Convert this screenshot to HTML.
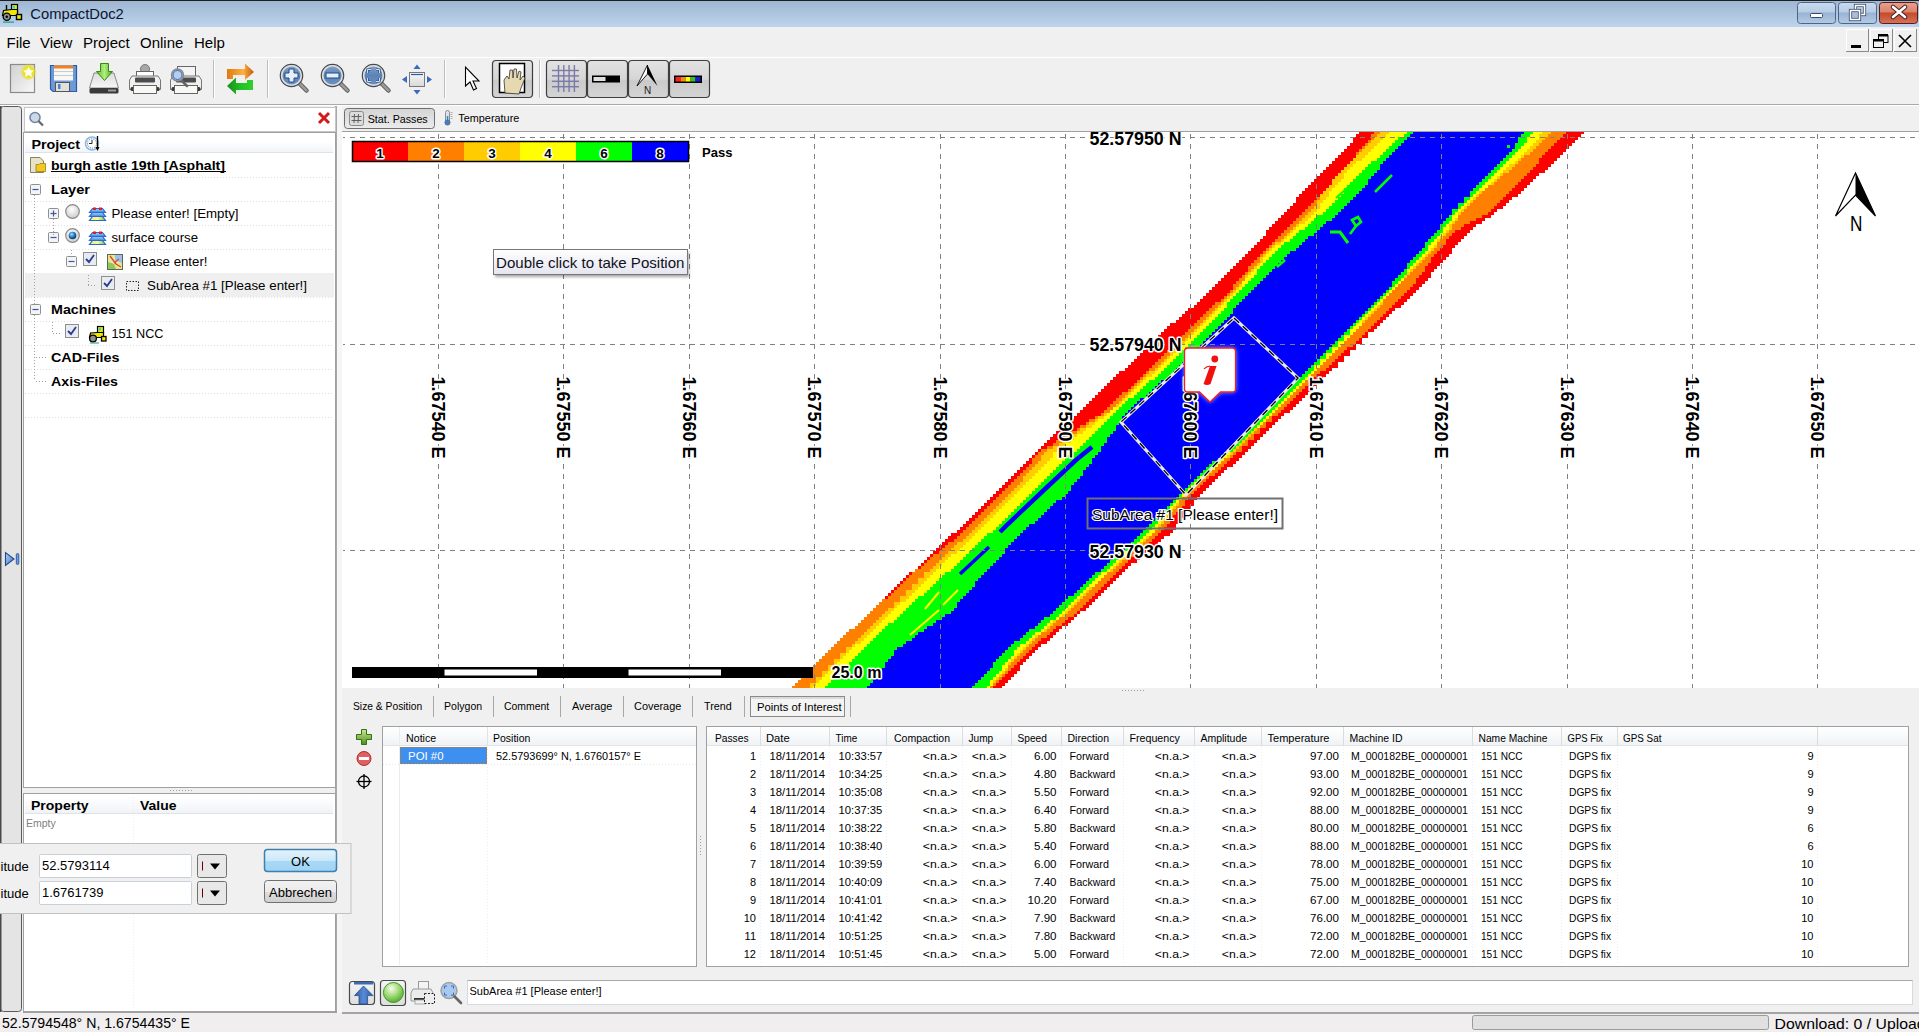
<!DOCTYPE html><html><head><meta charset="utf-8"><style>html,body{margin:0;padding:0;overflow:hidden;background:#f0f0f0}svg{display:block}</style></head><body><svg width="1919" height="1032" viewBox="0 0 1919 1032" shape-rendering="auto"><defs><linearGradient id="gTitle" x1="0" y1="0" x2="0" y2="1"><stop offset="0" stop-color="#9db5d2"/><stop offset="1" stop-color="#bed4ec"/></linearGradient><linearGradient id="gWB" x1="0" y1="0" x2="0" y2="1"><stop offset="0" stop-color="#c9daee"/><stop offset="0.45" stop-color="#b7cde6"/><stop offset="0.5" stop-color="#98b3d3"/><stop offset="1" stop-color="#b3cbe6"/></linearGradient><linearGradient id="gWC" x1="0" y1="0" x2="0" y2="1"><stop offset="0" stop-color="#e8a290"/><stop offset="0.45" stop-color="#d9826b"/><stop offset="0.5" stop-color="#c44a2d"/><stop offset="1" stop-color="#d6735a"/></linearGradient><linearGradient id="gExp" x1="0" y1="0" x2="1" y2="1"><stop offset="0" stop-color="#b8d4f4"/><stop offset="1" stop-color="#3a70c0"/></linearGradient><linearGradient id="gHdr" x1="0" y1="0" x2="0" y2="1"><stop offset="0" stop-color="#ffffff"/><stop offset="1" stop-color="#f0f3f6"/></linearGradient><radialGradient id="gRad" cx="0.45" cy="0.35" r="0.7"><stop offset="0" stop-color="#ffffff"/><stop offset="1" stop-color="#c8c8c8"/></radialGradient><radialGradient id="gRadSel" cx="0.4" cy="0.35" r="0.7"><stop offset="0" stop-color="#a8e0ff"/><stop offset="0.5" stop-color="#2080c8"/><stop offset="1" stop-color="#0a2a50"/></radialGradient><linearGradient id="gLyB" x1="0" y1="0" x2="1" y2="0"><stop offset="0" stop-color="#e8f070"/><stop offset="0.5" stop-color="#f8f8a0"/><stop offset="1" stop-color="#70c850"/></linearGradient><linearGradient id="gLyT" x1="0" y1="0" x2="0" y2="1"><stop offset="0" stop-color="#a8d0f8"/><stop offset="1" stop-color="#3a88e0"/></linearGradient><linearGradient id="gOK" x1="0" y1="0" x2="0" y2="1"><stop offset="0" stop-color="#e6f4fc"/><stop offset="0.5" stop-color="#cbe8f9"/><stop offset="0.51" stop-color="#a9d9f6"/><stop offset="1" stop-color="#a0d3f3"/></linearGradient><linearGradient id="gBtn" x1="0" y1="0" x2="0" y2="1"><stop offset="0" stop-color="#f2f2f2"/><stop offset="0.5" stop-color="#ebebeb"/><stop offset="0.51" stop-color="#dddddd"/><stop offset="1" stop-color="#cfcfcf"/></linearGradient><linearGradient id="gPress" x1="0" y1="0" x2="0" y2="1"><stop offset="0" stop-color="#d4d4d4"/><stop offset="1" stop-color="#ececec"/></linearGradient><filter id="fGlow" x="-30%" y="-30%" width="160%" height="160%"><feGaussianBlur stdDeviation="2.5"/></filter><linearGradient id="gTip" x1="0" y1="0" x2="0" y2="1"><stop offset="0" stop-color="#ffffff"/><stop offset="1" stop-color="#e4e5f0"/></linearGradient><filter id="fShadow" x="-10%" y="-30%" width="130%" height="180%"><feGaussianBlur stdDeviation="1.5"/></filter><linearGradient id="gPlus" x1="0" y1="0" x2="0" y2="1"><stop offset="0" stop-color="#c8e890"/><stop offset="1" stop-color="#4a9020"/></linearGradient><linearGradient id="gB1" x1="0" y1="0" x2="0" y2="1"><stop offset="0" stop-color="#f4f4f4"/><stop offset="1" stop-color="#dedede"/></linearGradient><radialGradient id="gBall" cx="0.4" cy="0.3" r="0.7"><stop offset="0" stop-color="#f4fcec"/><stop offset="0.5" stop-color="#a8dc80"/><stop offset="1" stop-color="#58b030"/></radialGradient><linearGradient id="gArrB" x1="0" y1="0" x2="1" y2="0"><stop offset="0" stop-color="#2a5aa8"/><stop offset="0.5" stop-color="#5a8ad0"/><stop offset="1" stop-color="#2a5aa8"/></linearGradient><linearGradient id="gMag" x1="0" y1="0" x2="0" y2="1"><stop offset="0" stop-color="#8aa6cc"/><stop offset="0.5" stop-color="#5d82b6"/><stop offset="1" stop-color="#6d92c4"/></linearGradient><linearGradient id="gPage" x1="0" y1="0" x2="1" y2="1"><stop offset="0" stop-color="#d0d0d0"/><stop offset="1" stop-color="#f8f8f8"/></linearGradient><radialGradient id="gGlow"><stop offset="0" stop-color="#ffff60"/><stop offset="0.6" stop-color="#e8e020"/><stop offset="1" stop-color="#e8e020" stop-opacity="0"/></radialGradient><linearGradient id="gTB" x1="0" y1="0" x2="0" y2="1"><stop offset="0" stop-color="#e2e2e2"/><stop offset="0.5" stop-color="#d6d6d6"/><stop offset="0.55" stop-color="#cacaca"/><stop offset="1" stop-color="#d4d4d4"/></linearGradient><linearGradient id="gHdd" x1="0" y1="0" x2="0" y2="1"><stop offset="0" stop-color="#dcdcdc"/><stop offset="1" stop-color="#f6f6f6"/></linearGradient><linearGradient id="gArrG" x1="0" y1="0" x2="1" y2="0"><stop offset="0" stop-color="#5cb82a"/><stop offset="0.5" stop-color="#b0f080"/><stop offset="1" stop-color="#4aa020"/></linearGradient><linearGradient id="gOr" x1="0" y1="0" x2="1" y2="0"><stop offset="0" stop-color="#e07a10"/><stop offset="0.6" stop-color="#ffb040"/><stop offset="1" stop-color="#c05a10"/></linearGradient><linearGradient id="gGr" x1="0" y1="0" x2="1" y2="0"><stop offset="0" stop-color="#208a20"/><stop offset="0.5" stop-color="#20c020"/><stop offset="1" stop-color="#30d030"/></linearGradient><linearGradient id="gPan" x1="0" y1="0" x2="0" y2="1"><stop offset="0" stop-color="#f8f8f8"/><stop offset="1" stop-color="#d8d8d8"/></linearGradient></defs><rect x="0" y="0" width="1919" height="1032" fill="#f0f0f0" />
<rect x="0" y="0" width="1919" height="27" fill="url(#gTitle)" />
<rect x="0" y="0" width="1919" height="1" fill="#1e1e1e" />
<text x="30.3" y="19" font-size="15" font-family='"Liberation Sans", sans-serif' fill="#0a1530" font-weight="normal" text-anchor="start" textLength="93.5" lengthAdjust="spacingAndGlyphs" >CompactDoc2</text>
<rect x="11.5" y="4.5" width="6" height="8" fill="#f0e800" stroke="#000" stroke-width="1.2" />
<rect x="12.5" y="6" width="2.5" height="2.5" fill="#30d0f0" />
<line x1="6.5" y1="5" x2="6.5" y2="10" stroke="#000" stroke-width="1.4" />
<path d="M2.5,15.5 L3.5,10.5 L11.5,9.5 L17.5,9.5 L17.5,15.5 Z" fill="#f0e800" stroke="#000" stroke-width="1.2" />
<circle cx="6.8" cy="16.8" r="3.6" fill="#909090" stroke="#000" stroke-width="1.3"/>
<circle cx="6.8" cy="16.8" r="1.2" fill="#000"/>
<rect x="16.5" y="14.5" width="5" height="5" fill="#f0e800" stroke="#000" stroke-width="1.4" />
<rect x="3" y="21.5" width="11" height="1.2" fill="#1a9a8a" />
<rect x="1797.5" y="2.5" width="38" height="21" fill="url(#gWB)" stroke="#4f6585" stroke-width="1" rx="3" />
<rect x="1838.5" y="2.5" width="38" height="21" fill="url(#gWB)" stroke="#4f6585" stroke-width="1" rx="3" />
<rect x="1879.5" y="2.5" width="38" height="21" fill="url(#gWC)" stroke="#5a1c1c" stroke-width="1" rx="3" />
<rect x="1810.5" y="13.5" width="12" height="4" fill="#fff" stroke="#3a4a66" stroke-width="1" rx="1" />
<rect x="1855.5" y="5.5" width="9" height="9" fill="none" stroke="#3a4a66" stroke-width="3.2" />
<rect x="1855.5" y="5.5" width="9" height="9" fill="none" stroke="#fff" stroke-width="1.6" />
<rect x="1850.5" y="10.5" width="9" height="9" fill="#a8c0dc" stroke="#3a4a66" stroke-width="3.2" />
<rect x="1850.5" y="10.5" width="9" height="9" fill="none" stroke="#fff" stroke-width="1.6" />
<path d="M1893,7 L1905,17 M1905,7 L1893,17" fill="none" stroke="#4a2020" stroke-width="4.6" stroke-linecap="round"/>
<path d="M1893,7 L1905,17 M1905,7 L1893,17" fill="none" stroke="#fff" stroke-width="2.6" stroke-linecap="round"/>
<rect x="0" y="27" width="1919" height="30" fill="#f0f0f0" />
<text x="6.5" y="48" font-size="15" font-family='"Liberation Sans", sans-serif' fill="#000" font-weight="normal" text-anchor="start" >File</text>
<text x="40" y="48" font-size="15" font-family='"Liberation Sans", sans-serif' fill="#000" font-weight="normal" text-anchor="start" >View</text>
<text x="83" y="48" font-size="15" font-family='"Liberation Sans", sans-serif' fill="#000" font-weight="normal" text-anchor="start" >Project</text>
<text x="140" y="48" font-size="15" font-family='"Liberation Sans", sans-serif' fill="#000" font-weight="normal" text-anchor="start" >Online</text>
<text x="194" y="48" font-size="15" font-family='"Liberation Sans", sans-serif' fill="#000" font-weight="normal" text-anchor="start" >Help</text>
<rect x="1846" y="29" width="23" height="23" fill="#f0f0f0" />
<line x1="1846.5" y1="29" x2="1846.5" y2="52" stroke="#fff" stroke-width="1" />
<line x1="1846" y1="29.5" x2="1869" y2="29.5" stroke="#fff" stroke-width="1" />
<line x1="1868.5" y1="29" x2="1868.5" y2="52" stroke="#8a8a8a" stroke-width="1" />
<line x1="1846" y1="51.5" x2="1869" y2="51.5" stroke="#8a8a8a" stroke-width="1" />
<rect x="1870" y="29" width="23" height="23" fill="#f0f0f0" />
<line x1="1870.5" y1="29" x2="1870.5" y2="52" stroke="#fff" stroke-width="1" />
<line x1="1870" y1="29.5" x2="1893" y2="29.5" stroke="#fff" stroke-width="1" />
<line x1="1892.5" y1="29" x2="1892.5" y2="52" stroke="#8a8a8a" stroke-width="1" />
<line x1="1870" y1="51.5" x2="1893" y2="51.5" stroke="#8a8a8a" stroke-width="1" />
<rect x="1894" y="29" width="23" height="23" fill="#f0f0f0" />
<line x1="1894.5" y1="29" x2="1894.5" y2="52" stroke="#fff" stroke-width="1" />
<line x1="1894" y1="29.5" x2="1917" y2="29.5" stroke="#fff" stroke-width="1" />
<line x1="1916.5" y1="29" x2="1916.5" y2="52" stroke="#8a8a8a" stroke-width="1" />
<line x1="1894" y1="51.5" x2="1917" y2="51.5" stroke="#8a8a8a" stroke-width="1" />
<rect x="1851" y="45" width="10" height="3" fill="#000" />
<rect x="1878" y="34" width="10" height="2.5" fill="#000" />
<rect x="1878.5" y="35.5" width="9.5" height="7" fill="none" stroke="#000" stroke-width="1" />
<rect x="1873.5" y="40.5" width="10" height="7" fill="#f0f0f0" stroke="#000" stroke-width="1" />
<rect x="1873" y="39" width="11" height="2.5" fill="#000" />
<path d="M1899,35 L1911,47 M1911,35 L1899,47" fill="none" stroke="#000" stroke-width="1.6" />
<rect x="0" y="57" width="1919" height="1" fill="#ffffff" />
<rect x="0" y="58" width="1919" height="46" fill="#f0f0f0" />
<rect x="0" y="104" width="1919" height="1" fill="#a9a9a9" />
<rect x="0" y="105" width="1919" height="1" fill="#ffffff" />
<line x1="213.5" y1="60" x2="213.5" y2="98" stroke="#bdbdbd" stroke-width="1" />
<line x1="214.5" y1="60" x2="214.5" y2="98" stroke="#ffffff" stroke-width="1" />
<line x1="267.5" y1="60" x2="267.5" y2="98" stroke="#bdbdbd" stroke-width="1" />
<line x1="268.5" y1="60" x2="268.5" y2="98" stroke="#ffffff" stroke-width="1" />
<line x1="444.5" y1="60" x2="444.5" y2="98" stroke="#bdbdbd" stroke-width="1" />
<line x1="445.5" y1="60" x2="445.5" y2="98" stroke="#ffffff" stroke-width="1" />
<line x1="539.5" y1="60" x2="539.5" y2="98" stroke="#bdbdbd" stroke-width="1" />
<line x1="540.5" y1="60" x2="540.5" y2="98" stroke="#ffffff" stroke-width="1" />
<rect x="0" y="1012" width="1919" height="20" fill="#f0eeee" />
<text x="2" y="1028" font-size="14.5" font-family='"Liberation Sans", sans-serif' fill="#000" font-weight="normal" text-anchor="start" textLength="188" lengthAdjust="spacingAndGlyphs" >52.5794548° N, 1.6754435° E</text>
<rect x="1472.5" y="1015.5" width="296" height="14" fill="#e0e0e0" stroke="#9a9a9a" stroke-width="1" rx="2" />
<text x="1774.6" y="1028.5" font-size="15" font-family='"Liberation Sans", sans-serif' fill="#000" font-weight="normal" text-anchor="start" textLength="151" lengthAdjust="spacingAndGlyphs" >Download: 0 / Upload</text>
<rect x="0.5" y="106.5" width="21" height="905" fill="#e4e4e4" stroke="#5a5a5a" stroke-width="1" rx="3" />
<rect x="0" y="106" width="1.5" height="906" fill="#4a4a4a" />
<path d="M5.5,552.5 L5.5,565.5 L14,559 Z" fill="url(#gExp)" stroke="#1e4a90" stroke-width="1.1" />
<rect x="16.3" y="553.5" width="2.5" height="11" fill="#6a9ae0" stroke="#1e4a90" stroke-width="0.8" rx="1.2" />
<rect x="335" y="106" width="2" height="907" fill="#a8a8a8" />
<rect x="337" y="106" width="5" height="907" fill="#f6f6f6" />
<rect x="24.5" y="107.5" width="311" height="24" fill="#ffffff" stroke="#c6c6c6" stroke-width="1" />
<circle cx="35" cy="117.5" r="5" fill="#cfd9e6" stroke="#6f86a6" stroke-width="1.6"/>
<line x1="38.5" y1="121" x2="43" y2="125.5" stroke="#666" stroke-width="2.2" />
<path d="M319,113 L329,123 M329,113 L319,123" fill="none" stroke="#d41a1a" stroke-width="3" />
<rect x="23" y="132" width="313" height="656" fill="#ffffff" />
<rect x="23" y="132" width="313" height="1" fill="#a0a0a0" />
<rect x="23" y="132" width="1" height="656" fill="#a0a0a0" />
<rect x="335" y="132" width="1" height="656" fill="#a0a0a0" />
<rect x="23" y="787" width="313" height="1" fill="#a0a0a0" />
<rect x="25" y="141" width="308" height="12" fill="url(#gHdr)" />
<rect x="25" y="152" width="308" height="1" fill="#dfe3e8" />
<text x="31.5" y="149" font-size="12.5" font-family='"Liberation Sans", sans-serif' fill="#000" font-weight="bold" text-anchor="start" textLength="48.5" lengthAdjust="spacingAndGlyphs" >Project</text>
<circle cx="92" cy="143.5" r="6.5" fill="#fff" stroke="#8ab8ea" stroke-width="1.6"/>
<circle cx="92" cy="143.5" r="4.6" fill="none" stroke="#333" stroke-width="0.9" stroke-dasharray="0.8,1.2"/>
<path d="M92,140 L92,143.5 L89,143.5" fill="none" stroke="#222" stroke-width="1" />
<line x1="97.5" y1="136" x2="97.5" y2="149" stroke="#000" stroke-width="1.3" />
<path d="M95.5,147 L99.5,147 L97.5,151 Z" fill="#000" />
<path d="M30.5,157.5 L40,157.5 L43.5,161 L43.5,172.5 L30.5,172.5 Z" fill="#e8e2c8" stroke="#8a8060" stroke-width="1" />
<path d="M36,164.5 L39,164.5 L40,163.5 L45.5,163.5 L45.5,171.5 L36,171.5 Z" fill="#f0c820" stroke="#a08010" stroke-width="0.8" />
<line x1="25" y1="177.5" x2="333" y2="177.5" stroke="#e0e0e0" stroke-width="1" stroke-dasharray="1,2"/>
<line x1="25" y1="201.5" x2="333" y2="201.5" stroke="#e0e0e0" stroke-width="1" stroke-dasharray="1,2"/>
<line x1="25" y1="225.5" x2="333" y2="225.5" stroke="#e0e0e0" stroke-width="1" stroke-dasharray="1,2"/>
<line x1="25" y1="249.5" x2="333" y2="249.5" stroke="#e0e0e0" stroke-width="1" stroke-dasharray="1,2"/>
<line x1="25" y1="273.5" x2="333" y2="273.5" stroke="#e0e0e0" stroke-width="1" stroke-dasharray="1,2"/>
<line x1="25" y1="297.5" x2="333" y2="297.5" stroke="#e0e0e0" stroke-width="1" stroke-dasharray="1,2"/>
<line x1="25" y1="321.5" x2="333" y2="321.5" stroke="#e0e0e0" stroke-width="1" stroke-dasharray="1,2"/>
<line x1="25" y1="345.5" x2="333" y2="345.5" stroke="#e0e0e0" stroke-width="1" stroke-dasharray="1,2"/>
<line x1="25" y1="369.5" x2="333" y2="369.5" stroke="#e0e0e0" stroke-width="1" stroke-dasharray="1,2"/>
<line x1="25" y1="393.5" x2="333" y2="393.5" stroke="#e0e0e0" stroke-width="1" stroke-dasharray="1,2"/>
<line x1="25" y1="417.5" x2="333" y2="417.5" stroke="#e0e0e0" stroke-width="1" stroke-dasharray="1,2"/>
<rect x="25" y="273" width="309" height="24" fill="#efefef" />
<line x1="34.5" y1="195" x2="34.5" y2="381" stroke="#a0a0a0" stroke-width="1" stroke-dasharray="1,2"/>
<text x="51" y="170" font-size="13" font-family='"Liberation Sans", sans-serif' fill="#000" font-weight="bold" text-anchor="start" textLength="174" lengthAdjust="spacingAndGlyphs" >burgh astle 19th [Asphalt]</text>
<rect x="51" y="171" width="175" height="1" fill="#000" />
<text x="51" y="194" font-size="13" font-family='"Liberation Sans", sans-serif' fill="#000" font-weight="bold" text-anchor="start" textLength="39" lengthAdjust="spacingAndGlyphs" >Layer</text>
<text x="111.5" y="218" font-size="13" font-family='"Liberation Sans", sans-serif' fill="#000" font-weight="normal" text-anchor="start" textLength="127" lengthAdjust="spacingAndGlyphs" >Please enter! [Empty]</text>
<text x="111.5" y="242" font-size="13" font-family='"Liberation Sans", sans-serif' fill="#000" font-weight="normal" text-anchor="start" textLength="86.5" lengthAdjust="spacingAndGlyphs" >surface course</text>
<text x="129.5" y="266" font-size="13" font-family='"Liberation Sans", sans-serif' fill="#000" font-weight="normal" text-anchor="start" textLength="78" lengthAdjust="spacingAndGlyphs" >Please enter!</text>
<text x="147" y="290" font-size="13" font-family='"Liberation Sans", sans-serif' fill="#000" font-weight="normal" text-anchor="start" textLength="160" lengthAdjust="spacingAndGlyphs" >SubArea #1 [Please enter!]</text>
<text x="51" y="314" font-size="13" font-family='"Liberation Sans", sans-serif' fill="#000" font-weight="bold" text-anchor="start" textLength="65" lengthAdjust="spacingAndGlyphs" >Machines</text>
<text x="111.5" y="338" font-size="13" font-family='"Liberation Sans", sans-serif' fill="#000" font-weight="normal" text-anchor="start" textLength="52" lengthAdjust="spacingAndGlyphs" >151 NCC</text>
<text x="51" y="362" font-size="13" font-family='"Liberation Sans", sans-serif' fill="#000" font-weight="bold" text-anchor="start" textLength="68.5" lengthAdjust="spacingAndGlyphs" >CAD-Files</text>
<text x="51" y="386" font-size="13" font-family='"Liberation Sans", sans-serif' fill="#000" font-weight="bold" text-anchor="start" textLength="67" lengthAdjust="spacingAndGlyphs" >Axis-Files</text>
<rect x="30.5" y="184.5" width="10" height="10" fill="#f4f4f4" stroke="#8e8f8f" stroke-width="1" rx="1" />
<line x1="32.5" y1="189.5" x2="38.5" y2="189.5" stroke="#3b57a6" stroke-width="1.2" />
<rect x="48.5" y="208.5" width="10" height="10" fill="#f4f4f4" stroke="#8e8f8f" stroke-width="1" rx="1" />
<line x1="50.5" y1="213.5" x2="56.5" y2="213.5" stroke="#3b57a6" stroke-width="1.2" />
<line x1="53.5" y1="210.5" x2="53.5" y2="216.5" stroke="#3b57a6" stroke-width="1.2" />
<rect x="48.5" y="232.5" width="10" height="10" fill="#f4f4f4" stroke="#8e8f8f" stroke-width="1" rx="1" />
<line x1="50.5" y1="237.5" x2="56.5" y2="237.5" stroke="#3b57a6" stroke-width="1.2" />
<rect x="66.5" y="256.5" width="10" height="10" fill="#f4f4f4" stroke="#8e8f8f" stroke-width="1" rx="1" />
<line x1="68.5" y1="261.5" x2="74.5" y2="261.5" stroke="#3b57a6" stroke-width="1.2" />
<rect x="30.5" y="304.5" width="10" height="10" fill="#f4f4f4" stroke="#8e8f8f" stroke-width="1" rx="1" />
<line x1="32.5" y1="309.5" x2="38.5" y2="309.5" stroke="#3b57a6" stroke-width="1.2" />
<circle cx="72.5" cy="211.5" r="6.8" fill="url(#gRad)" stroke="#8a8a8a" stroke-width="1.2"/>
<circle cx="72.5" cy="235.5" r="6.8" fill="url(#gRad)" stroke="#8a8a8a" stroke-width="1.2"/>
<circle cx="72.5" cy="235.5" r="3.8" fill="url(#gRadSel)"/>
<rect x="83.5" y="252.5" width="13" height="13" fill="#e8ecf2" stroke="#8e8f8f" stroke-width="1" />
<path d="M86,259 L89,262 L94,255" fill="none" stroke="#2a3a8c" stroke-width="1.8" />
<rect x="101.5" y="276.5" width="13" height="13" fill="#e8ecf2" stroke="#8e8f8f" stroke-width="1" />
<path d="M104,283 L107,286 L112,279" fill="none" stroke="#2a3a8c" stroke-width="1.8" />
<rect x="65.5" y="324.5" width="13" height="13" fill="#e8ecf2" stroke="#8e8f8f" stroke-width="1" />
<path d="M68,331 L71,334 L76,327" fill="none" stroke="#2a3a8c" stroke-width="1.8" />
<path d="M92.5,216.5 L102.5,216.5 L105.5,220.5 L89.5,220.5 Z" fill="url(#gLyB)" stroke="#2a6ad0" stroke-width="1.2" />
<path d="M92.5,212.5 L102.5,212.5 L105.5,216.5 L89.5,216.5 Z" fill="url(#gLyT)" stroke="#2a6ad0" stroke-width="1.2" />
<path d="M92.5,208.5 L102.5,208.5 L105.5,212.5 L89.5,212.5 Z" fill="url(#gLyT)" stroke="#2a6ad0" stroke-width="1.2" />
<rect x="93" y="207.5" width="3" height="2.5" fill="#e02020" />
<rect x="99" y="207.5" width="3" height="2.5" fill="#e02020" />
<path d="M92.5,240.5 L102.5,240.5 L105.5,244.5 L89.5,244.5 Z" fill="url(#gLyB)" stroke="#2a6ad0" stroke-width="1.2" />
<path d="M92.5,236.5 L102.5,236.5 L105.5,240.5 L89.5,240.5 Z" fill="url(#gLyT)" stroke="#2a6ad0" stroke-width="1.2" />
<path d="M92.5,232.5 L102.5,232.5 L105.5,236.5 L89.5,236.5 Z" fill="url(#gLyT)" stroke="#2a6ad0" stroke-width="1.2" />
<rect x="93" y="231.5" width="3" height="2.5" fill="#e02020" />
<rect x="99" y="231.5" width="3" height="2.5" fill="#e02020" />
<rect x="107.5" y="254.5" width="15" height="15" fill="#e8e890" stroke="#5a6a50" stroke-width="1" />
<path d="M115,255 L122,255 L122,263 L115,260 Z" fill="#9ac0f0" />
<path d="M108,262 L114,264 L116,269 L108,269 Z" fill="#90c860" />
<path d="M110,256 L116,264 L121,267 M114,263 L119,259" fill="none" stroke="#e04040" stroke-width="1.3" />
<rect x="126.5" y="281.5" width="12" height="9" fill="#eee" stroke="#222" stroke-width="1" stroke-dasharray="1.5,1.5"/>
<rect x="97.5" y="326.5" width="6" height="7" fill="#f0e800" stroke="#000" stroke-width="1.2" />
<rect x="98.5" y="328" width="2.5" height="2.5" fill="#30d0f0" />
<path d="M89.5,337.5 L90.5,333 L97.5,332.5 L103.5,332.5 L103.5,337.5 Z" fill="#f0e800" stroke="#000" stroke-width="1.2" />
<circle cx="93" cy="338.5" r="3.4" fill="#909090" stroke="#000" stroke-width="1.3"/>
<rect x="101.5" y="336.5" width="4.5" height="4.5" fill="#f0e800" stroke="#000" stroke-width="1.3" />
<rect x="90" y="342.5" width="9" height="1" fill="#1a9a8a" />
<line x1="53.5" y1="216" x2="53.5" y2="235" stroke="#a0a0a0" stroke-width="1" stroke-dasharray="1,2"/>
<line x1="71.5" y1="250" x2="71.5" y2="256" stroke="#a0a0a0" stroke-width="1" stroke-dasharray="1,2"/>
<line x1="88.5" y1="275" x2="88.5" y2="285" stroke="#a0a0a0" stroke-width="1" stroke-dasharray="1,2"/>
<line x1="88" y1="285.5" x2="97" y2="285.5" stroke="#a0a0a0" stroke-width="1" stroke-dasharray="1,2"/>
<line x1="36" y1="357.5" x2="46" y2="357.5" stroke="#a0a0a0" stroke-width="1" stroke-dasharray="1,2"/>
<line x1="52.5" y1="322" x2="52.5" y2="333" stroke="#a0a0a0" stroke-width="1" stroke-dasharray="1,2"/>
<line x1="53" y1="333.5" x2="62" y2="333.5" stroke="#a0a0a0" stroke-width="1" stroke-dasharray="1,2"/>
<line x1="36" y1="381.5" x2="46" y2="381.5" stroke="#a0a0a0" stroke-width="1" stroke-dasharray="1,2"/>
<rect x="170" y="790" width="1" height="1" fill="#9a9a9a" />
<rect x="173" y="790" width="1" height="1" fill="#9a9a9a" />
<rect x="176" y="790" width="1" height="1" fill="#9a9a9a" />
<rect x="179" y="790" width="1" height="1" fill="#9a9a9a" />
<rect x="182" y="790" width="1" height="1" fill="#9a9a9a" />
<rect x="185" y="790" width="1" height="1" fill="#9a9a9a" />
<rect x="188" y="790" width="1" height="1" fill="#9a9a9a" />
<rect x="191" y="790" width="1" height="1" fill="#9a9a9a" />
<rect x="23" y="793" width="313" height="218" fill="#ffffff" />
<rect x="23" y="1011" width="314" height="2" fill="#a0a0a0" />
<rect x="23" y="793" width="313" height="1" fill="#a0a0a0" />
<rect x="23" y="793" width="1" height="219" fill="#a0a0a0" />
<rect x="335" y="793" width="1" height="219" fill="#a0a0a0" />
<rect x="25" y="797" width="308" height="16" fill="url(#gHdr)" />
<rect x="25" y="813" width="308" height="1" fill="#dfe3e8" />
<line x1="133.5" y1="797" x2="133.5" y2="1010" stroke="#ececec" stroke-width="1" stroke-dasharray="1,2"/>
<text x="31" y="810" font-size="13" font-family='"Liberation Sans", sans-serif' fill="#000" font-weight="bold" text-anchor="start" textLength="57.6" lengthAdjust="spacingAndGlyphs" >Property</text>
<text x="140" y="810" font-size="13" font-family='"Liberation Sans", sans-serif' fill="#000" font-weight="bold" text-anchor="start" textLength="36.4" lengthAdjust="spacingAndGlyphs" >Value</text>
<text x="26" y="827" font-size="10.5" font-family='"Liberation Sans", sans-serif' fill="#808080" font-weight="normal" text-anchor="start" >Empty</text>
<rect x="-1" y="843.5" width="352" height="70" fill="#f0f0f0" stroke="#c2c2c2" stroke-width="1" />
<text x="0.5" y="871" font-size="13" font-family='"Liberation Sans", sans-serif' fill="#000" font-weight="normal" text-anchor="start" textLength="28.3" lengthAdjust="spacingAndGlyphs" >itude</text>
<text x="0.5" y="898" font-size="13" font-family='"Liberation Sans", sans-serif' fill="#000" font-weight="normal" text-anchor="start" textLength="28.3" lengthAdjust="spacingAndGlyphs" >itude</text>
<rect x="39.5" y="854.5" width="152" height="23" fill="#fff" stroke="#c8d0da" stroke-width="1" rx="1" />
<rect x="39.5" y="881.5" width="152" height="23" fill="#fff" stroke="#c8d0da" stroke-width="1" rx="1" />
<text x="42" y="870" font-size="13" font-family='"Liberation Sans", sans-serif' fill="#000" font-weight="normal" text-anchor="start" >52.5793114</text>
<text x="42" y="897" font-size="13" font-family='"Liberation Sans", sans-serif' fill="#000" font-weight="normal" text-anchor="start" >1.6761739</text>
<rect x="197.5" y="854.5" width="29" height="23" fill="#e8e8e8" stroke="#707070" stroke-width="1" rx="2" />
<rect x="202" y="861.5" width="1" height="9" fill="#600" />
<path d="M210,863.5 L220,863.5 L215,869.5 Z" fill="#000" />
<rect x="197.5" y="881.5" width="29" height="23" fill="#e8e8e8" stroke="#707070" stroke-width="1" rx="2" />
<rect x="202" y="888.5" width="1" height="9" fill="#600" />
<path d="M210,890.5 L220,890.5 L215,896.5 Z" fill="#000" />
<rect x="264.5" y="849.5" width="72" height="22" fill="url(#gOK)" stroke="#3c7fb1" stroke-width="1.5" rx="3" />
<text x="300.5" y="866" font-size="13" font-family='"Liberation Sans", sans-serif' fill="#000" font-weight="normal" text-anchor="middle" >OK</text>
<rect x="264.5" y="880.5" width="72" height="22" fill="url(#gBtn)" stroke="#707070" stroke-width="1" rx="3" />
<text x="300.5" y="897" font-size="13" font-family='"Liberation Sans", sans-serif' fill="#000" font-weight="normal" text-anchor="middle" >Abbrechen</text>
<rect x="344.5" y="108.5" width="90" height="20" fill="url(#gPress)" stroke="#6e6e6e" stroke-width="1" rx="3" />
<rect x="349.5" y="111.5" width="14" height="14" fill="#dcdcdc" stroke="#8a8a8a" stroke-width="1" rx="2" />
<path d="M354.5,114 L354,123 M358.5,114 L358,123 M351.5,116.5 L361.5,116.5 M351.5,120.5 L361.5,120.5" fill="none" stroke="#555" stroke-width="0.9" />
<text x="367.7" y="123" font-size="11.5" font-family='"Liberation Sans", sans-serif' fill="#000" font-weight="normal" text-anchor="start" textLength="60" lengthAdjust="spacingAndGlyphs" >Stat. Passes</text>
<rect x="445.5" y="110.5" width="4" height="13" fill="#dde3ea" stroke="#8a8f96" stroke-width="1" rx="2" />
<rect x="446.8" y="116" width="1.5" height="6" fill="#3a80d0" />
<circle cx="447.5" cy="122.5" r="2.6" fill="#3a80d0" stroke="#5a6a7a" stroke-width="0.8"/>
<line x1="450.5" y1="112.5" x2="452.5" y2="112.5" stroke="#9aa0a8" stroke-width="0.8" />
<line x1="450.5" y1="114.5" x2="452.5" y2="114.5" stroke="#9aa0a8" stroke-width="0.8" />
<line x1="450.5" y1="116.5" x2="452.5" y2="116.5" stroke="#9aa0a8" stroke-width="0.8" />
<line x1="450.5" y1="118.5" x2="452.5" y2="118.5" stroke="#9aa0a8" stroke-width="0.8" />
<text x="458.3" y="122" font-size="11.5" font-family='"Liberation Sans", sans-serif' fill="#000" font-weight="normal" text-anchor="start" textLength="61" lengthAdjust="spacingAndGlyphs" >Temperature</text>
<rect x="342" y="131" width="1577" height="1" fill="#a0a0a0" />
<rect x="342" y="132" width="1577" height="556" fill="#ffffff" />
<clipPath id="cpMap"><rect x="342" y="132" width="1576" height="556"/></clipPath>
<g clip-path="url(#cpMap)">
<g shape-rendering="crispEdges">
<rect x="1359" y="131" width="15" height="3" fill="#ff0000"/>
<rect x="1374" y="131" width="6" height="3" fill="#ff8000"/>
<rect x="1380" y="131" width="9" height="3" fill="#ffcc00"/>
<rect x="1389" y="131" width="18" height="3" fill="#ffff00"/>
<rect x="1407" y="131" width="6" height="3" fill="#00ff00"/>
<rect x="1413" y="131" width="111" height="3" fill="#0000ff"/>
<rect x="1524" y="131" width="9" height="3" fill="#00ff00"/>
<rect x="1533" y="131" width="9" height="3" fill="#ffff00"/>
<rect x="1542" y="131" width="9" height="3" fill="#ffcc00"/>
<rect x="1551" y="131" width="15" height="3" fill="#ff8000"/>
<rect x="1566" y="131" width="18" height="3" fill="#ff0000"/>
<rect x="1356" y="134" width="15" height="3" fill="#ff0000"/>
<rect x="1371" y="134" width="6" height="3" fill="#ff8000"/>
<rect x="1377" y="134" width="9" height="3" fill="#ffcc00"/>
<rect x="1386" y="134" width="18" height="3" fill="#ffff00"/>
<rect x="1404" y="134" width="6" height="3" fill="#00ff00"/>
<rect x="1410" y="134" width="111" height="3" fill="#0000ff"/>
<rect x="1521" y="134" width="9" height="3" fill="#00ff00"/>
<rect x="1530" y="134" width="9" height="3" fill="#ffff00"/>
<rect x="1539" y="134" width="9" height="3" fill="#ffcc00"/>
<rect x="1548" y="134" width="15" height="3" fill="#ff8000"/>
<rect x="1563" y="134" width="18" height="3" fill="#ff0000"/>
<rect x="1353" y="137" width="18" height="3" fill="#ff0000"/>
<rect x="1371" y="137" width="3" height="3" fill="#ff8000"/>
<rect x="1374" y="137" width="9" height="3" fill="#ffcc00"/>
<rect x="1383" y="137" width="15" height="3" fill="#ffff00"/>
<rect x="1398" y="137" width="9" height="3" fill="#00ff00"/>
<rect x="1407" y="137" width="111" height="3" fill="#0000ff"/>
<rect x="1518" y="137" width="9" height="3" fill="#00ff00"/>
<rect x="1527" y="137" width="12" height="3" fill="#ffff00"/>
<rect x="1539" y="137" width="6" height="3" fill="#ffcc00"/>
<rect x="1545" y="137" width="15" height="3" fill="#ff8000"/>
<rect x="1560" y="137" width="18" height="3" fill="#ff0000"/>
<rect x="1353" y="140" width="15" height="3" fill="#ff0000"/>
<rect x="1368" y="140" width="3" height="3" fill="#ff8000"/>
<rect x="1371" y="140" width="9" height="3" fill="#ffcc00"/>
<rect x="1380" y="140" width="15" height="3" fill="#ffff00"/>
<rect x="1395" y="140" width="9" height="3" fill="#00ff00"/>
<rect x="1404" y="140" width="114" height="3" fill="#0000ff"/>
<rect x="1518" y="140" width="9" height="3" fill="#00ff00"/>
<rect x="1527" y="140" width="9" height="3" fill="#ffff00"/>
<rect x="1536" y="140" width="6" height="3" fill="#ffcc00"/>
<rect x="1542" y="140" width="15" height="3" fill="#ff8000"/>
<rect x="1557" y="140" width="18" height="3" fill="#ff0000"/>
<rect x="1350" y="143" width="15" height="3" fill="#ff0000"/>
<rect x="1365" y="143" width="3" height="3" fill="#ff8000"/>
<rect x="1368" y="143" width="9" height="3" fill="#ffcc00"/>
<rect x="1377" y="143" width="15" height="3" fill="#ffff00"/>
<rect x="1392" y="143" width="9" height="3" fill="#00ff00"/>
<rect x="1401" y="143" width="114" height="3" fill="#0000ff"/>
<rect x="1515" y="143" width="9" height="3" fill="#00ff00"/>
<rect x="1524" y="143" width="9" height="3" fill="#ffff00"/>
<rect x="1533" y="143" width="6" height="3" fill="#ffcc00"/>
<rect x="1539" y="143" width="15" height="3" fill="#ff8000"/>
<rect x="1554" y="143" width="18" height="3" fill="#ff0000"/>
<rect x="1347" y="146" width="15" height="3" fill="#ff0000"/>
<rect x="1362" y="146" width="3" height="3" fill="#ff8000"/>
<rect x="1365" y="146" width="9" height="3" fill="#ffcc00"/>
<rect x="1374" y="146" width="15" height="3" fill="#ffff00"/>
<rect x="1389" y="146" width="9" height="3" fill="#00ff00"/>
<rect x="1398" y="146" width="117" height="3" fill="#0000ff"/>
<rect x="1515" y="146" width="6" height="3" fill="#00ff00"/>
<rect x="1521" y="146" width="9" height="3" fill="#ffff00"/>
<rect x="1530" y="146" width="6" height="3" fill="#ffcc00"/>
<rect x="1536" y="146" width="15" height="3" fill="#ff8000"/>
<rect x="1551" y="146" width="18" height="3" fill="#ff0000"/>
<rect x="1344" y="149" width="15" height="3" fill="#ff0000"/>
<rect x="1359" y="149" width="3" height="3" fill="#ff8000"/>
<rect x="1362" y="149" width="9" height="3" fill="#ffcc00"/>
<rect x="1371" y="149" width="15" height="3" fill="#ffff00"/>
<rect x="1386" y="149" width="9" height="3" fill="#00ff00"/>
<rect x="1395" y="149" width="117" height="3" fill="#0000ff"/>
<rect x="1512" y="149" width="6" height="3" fill="#00ff00"/>
<rect x="1518" y="149" width="9" height="3" fill="#ffff00"/>
<rect x="1527" y="149" width="6" height="3" fill="#ffcc00"/>
<rect x="1533" y="149" width="15" height="3" fill="#ff8000"/>
<rect x="1548" y="149" width="18" height="3" fill="#ff0000"/>
<rect x="1341" y="152" width="15" height="3" fill="#ff0000"/>
<rect x="1356" y="152" width="3" height="3" fill="#ff8000"/>
<rect x="1359" y="152" width="9" height="3" fill="#ffcc00"/>
<rect x="1368" y="152" width="15" height="3" fill="#ffff00"/>
<rect x="1383" y="152" width="9" height="3" fill="#00ff00"/>
<rect x="1392" y="152" width="117" height="3" fill="#0000ff"/>
<rect x="1509" y="152" width="6" height="3" fill="#00ff00"/>
<rect x="1515" y="152" width="9" height="3" fill="#ffff00"/>
<rect x="1524" y="152" width="6" height="3" fill="#ffcc00"/>
<rect x="1530" y="152" width="15" height="3" fill="#ff8000"/>
<rect x="1545" y="152" width="18" height="3" fill="#ff0000"/>
<rect x="1338" y="155" width="18" height="3" fill="#ff0000"/>
<rect x="1356" y="155" width="9" height="3" fill="#ffcc00"/>
<rect x="1365" y="155" width="15" height="3" fill="#ffff00"/>
<rect x="1380" y="155" width="9" height="3" fill="#00ff00"/>
<rect x="1389" y="155" width="117" height="3" fill="#0000ff"/>
<rect x="1506" y="155" width="6" height="3" fill="#00ff00"/>
<rect x="1512" y="155" width="9" height="3" fill="#ffff00"/>
<rect x="1521" y="155" width="3" height="3" fill="#ffcc00"/>
<rect x="1524" y="155" width="18" height="3" fill="#ff8000"/>
<rect x="1542" y="155" width="18" height="3" fill="#ff0000"/>
<rect x="1335" y="158" width="18" height="3" fill="#ff0000"/>
<rect x="1353" y="158" width="9" height="3" fill="#ffcc00"/>
<rect x="1362" y="158" width="15" height="3" fill="#ffff00"/>
<rect x="1377" y="158" width="9" height="3" fill="#00ff00"/>
<rect x="1386" y="158" width="117" height="3" fill="#0000ff"/>
<rect x="1503" y="158" width="6" height="3" fill="#00ff00"/>
<rect x="1509" y="158" width="9" height="3" fill="#ffff00"/>
<rect x="1518" y="158" width="3" height="3" fill="#ffcc00"/>
<rect x="1521" y="158" width="18" height="3" fill="#ff8000"/>
<rect x="1539" y="158" width="18" height="3" fill="#ff0000"/>
<rect x="1332" y="161" width="18" height="3" fill="#ff0000"/>
<rect x="1350" y="161" width="6" height="3" fill="#ffcc00"/>
<rect x="1356" y="161" width="15" height="3" fill="#ffff00"/>
<rect x="1371" y="161" width="12" height="3" fill="#00ff00"/>
<rect x="1383" y="161" width="117" height="3" fill="#0000ff"/>
<rect x="1500" y="161" width="6" height="3" fill="#00ff00"/>
<rect x="1506" y="161" width="9" height="3" fill="#ffff00"/>
<rect x="1515" y="161" width="3" height="3" fill="#ffcc00"/>
<rect x="1518" y="161" width="21" height="3" fill="#ff8000"/>
<rect x="1539" y="161" width="15" height="3" fill="#ff0000"/>
<rect x="1329" y="164" width="18" height="3" fill="#ff0000"/>
<rect x="1347" y="164" width="6" height="3" fill="#ffcc00"/>
<rect x="1353" y="164" width="15" height="3" fill="#ffff00"/>
<rect x="1368" y="164" width="12" height="3" fill="#00ff00"/>
<rect x="1380" y="164" width="117" height="3" fill="#0000ff"/>
<rect x="1497" y="164" width="6" height="3" fill="#00ff00"/>
<rect x="1503" y="164" width="6" height="3" fill="#ffff00"/>
<rect x="1509" y="164" width="6" height="3" fill="#ffcc00"/>
<rect x="1515" y="164" width="21" height="3" fill="#ff8000"/>
<rect x="1536" y="164" width="15" height="3" fill="#ff0000"/>
<rect x="1326" y="167" width="18" height="3" fill="#ff0000"/>
<rect x="1344" y="167" width="6" height="3" fill="#ffcc00"/>
<rect x="1350" y="167" width="15" height="3" fill="#ffff00"/>
<rect x="1365" y="167" width="15" height="3" fill="#00ff00"/>
<rect x="1380" y="167" width="114" height="3" fill="#0000ff"/>
<rect x="1494" y="167" width="6" height="3" fill="#00ff00"/>
<rect x="1500" y="167" width="6" height="3" fill="#ffff00"/>
<rect x="1506" y="167" width="6" height="3" fill="#ffcc00"/>
<rect x="1512" y="167" width="21" height="3" fill="#ff8000"/>
<rect x="1533" y="167" width="15" height="3" fill="#ff0000"/>
<rect x="1323" y="170" width="18" height="3" fill="#ff0000"/>
<rect x="1341" y="170" width="6" height="3" fill="#ffcc00"/>
<rect x="1347" y="170" width="15" height="3" fill="#ffff00"/>
<rect x="1362" y="170" width="15" height="3" fill="#00ff00"/>
<rect x="1377" y="170" width="114" height="3" fill="#0000ff"/>
<rect x="1491" y="170" width="6" height="3" fill="#00ff00"/>
<rect x="1497" y="170" width="6" height="3" fill="#ffff00"/>
<rect x="1503" y="170" width="6" height="3" fill="#ffcc00"/>
<rect x="1509" y="170" width="21" height="3" fill="#ff8000"/>
<rect x="1530" y="170" width="15" height="3" fill="#ff0000"/>
<rect x="1320" y="173" width="18" height="3" fill="#ff0000"/>
<rect x="1338" y="173" width="6" height="3" fill="#ffcc00"/>
<rect x="1344" y="173" width="15" height="3" fill="#ffff00"/>
<rect x="1359" y="173" width="15" height="3" fill="#00ff00"/>
<rect x="1374" y="173" width="114" height="3" fill="#0000ff"/>
<rect x="1488" y="173" width="6" height="3" fill="#00ff00"/>
<rect x="1494" y="173" width="6" height="3" fill="#ffff00"/>
<rect x="1500" y="173" width="3" height="3" fill="#ffcc00"/>
<rect x="1503" y="173" width="24" height="3" fill="#ff8000"/>
<rect x="1527" y="173" width="12" height="3" fill="#ff0000"/>
<rect x="1317" y="176" width="18" height="3" fill="#ff0000"/>
<rect x="1335" y="176" width="9" height="3" fill="#ffcc00"/>
<rect x="1344" y="176" width="12" height="3" fill="#ffff00"/>
<rect x="1356" y="176" width="15" height="3" fill="#00ff00"/>
<rect x="1371" y="176" width="114" height="3" fill="#0000ff"/>
<rect x="1485" y="176" width="6" height="3" fill="#00ff00"/>
<rect x="1491" y="176" width="6" height="3" fill="#ffff00"/>
<rect x="1497" y="176" width="3" height="3" fill="#ffcc00"/>
<rect x="1500" y="176" width="24" height="3" fill="#ff8000"/>
<rect x="1524" y="176" width="12" height="3" fill="#ff0000"/>
<rect x="1314" y="179" width="18" height="3" fill="#ff0000"/>
<rect x="1332" y="179" width="9" height="3" fill="#ffcc00"/>
<rect x="1341" y="179" width="12" height="3" fill="#ffff00"/>
<rect x="1353" y="179" width="15" height="3" fill="#00ff00"/>
<rect x="1368" y="179" width="114" height="3" fill="#0000ff"/>
<rect x="1482" y="179" width="6" height="3" fill="#00ff00"/>
<rect x="1488" y="179" width="6" height="3" fill="#ffff00"/>
<rect x="1494" y="179" width="3" height="3" fill="#ffcc00"/>
<rect x="1497" y="179" width="24" height="3" fill="#ff8000"/>
<rect x="1521" y="179" width="12" height="3" fill="#ff0000"/>
<rect x="1311" y="182" width="21" height="3" fill="#ff0000"/>
<rect x="1332" y="182" width="6" height="3" fill="#ffcc00"/>
<rect x="1338" y="182" width="12" height="3" fill="#ffff00"/>
<rect x="1350" y="182" width="18" height="3" fill="#00ff00"/>
<rect x="1368" y="182" width="111" height="3" fill="#0000ff"/>
<rect x="1479" y="182" width="6" height="3" fill="#00ff00"/>
<rect x="1485" y="182" width="6" height="3" fill="#ffff00"/>
<rect x="1491" y="182" width="3" height="3" fill="#ffcc00"/>
<rect x="1494" y="182" width="24" height="3" fill="#ff8000"/>
<rect x="1518" y="182" width="12" height="3" fill="#ff0000"/>
<rect x="1308" y="185" width="21" height="3" fill="#ff0000"/>
<rect x="1329" y="185" width="6" height="3" fill="#ffcc00"/>
<rect x="1335" y="185" width="12" height="3" fill="#ffff00"/>
<rect x="1347" y="185" width="18" height="3" fill="#00ff00"/>
<rect x="1365" y="185" width="111" height="3" fill="#0000ff"/>
<rect x="1476" y="185" width="6" height="3" fill="#00ff00"/>
<rect x="1482" y="185" width="6" height="3" fill="#ffff00"/>
<rect x="1488" y="185" width="27" height="3" fill="#ff8000"/>
<rect x="1515" y="185" width="12" height="3" fill="#ff0000"/>
<rect x="1305" y="188" width="21" height="3" fill="#ff0000"/>
<rect x="1326" y="188" width="6" height="3" fill="#ffcc00"/>
<rect x="1332" y="188" width="12" height="3" fill="#ffff00"/>
<rect x="1344" y="188" width="18" height="3" fill="#00ff00"/>
<rect x="1362" y="188" width="111" height="3" fill="#0000ff"/>
<rect x="1473" y="188" width="6" height="3" fill="#00ff00"/>
<rect x="1479" y="188" width="6" height="3" fill="#ffff00"/>
<rect x="1485" y="188" width="27" height="3" fill="#ff8000"/>
<rect x="1512" y="188" width="12" height="3" fill="#ff0000"/>
<rect x="1302" y="191" width="21" height="3" fill="#ff0000"/>
<rect x="1323" y="191" width="6" height="3" fill="#ffcc00"/>
<rect x="1329" y="191" width="15" height="3" fill="#ffff00"/>
<rect x="1344" y="191" width="15" height="3" fill="#00ff00"/>
<rect x="1359" y="191" width="111" height="3" fill="#0000ff"/>
<rect x="1470" y="191" width="6" height="3" fill="#00ff00"/>
<rect x="1476" y="191" width="3" height="3" fill="#ffff00"/>
<rect x="1479" y="191" width="3" height="3" fill="#ffcc00"/>
<rect x="1482" y="191" width="27" height="3" fill="#ff8000"/>
<rect x="1509" y="191" width="12" height="3" fill="#ff0000"/>
<rect x="1299" y="194" width="21" height="3" fill="#ff0000"/>
<rect x="1320" y="194" width="9" height="3" fill="#ffcc00"/>
<rect x="1329" y="194" width="12" height="3" fill="#ffff00"/>
<rect x="1341" y="194" width="15" height="3" fill="#00ff00"/>
<rect x="1356" y="194" width="114" height="3" fill="#0000ff"/>
<rect x="1470" y="194" width="3" height="3" fill="#00ff00"/>
<rect x="1473" y="194" width="3" height="3" fill="#ffff00"/>
<rect x="1476" y="194" width="3" height="3" fill="#ffcc00"/>
<rect x="1479" y="194" width="27" height="3" fill="#ff8000"/>
<rect x="1506" y="194" width="12" height="3" fill="#ff0000"/>
<rect x="1296" y="197" width="21" height="3" fill="#ff0000"/>
<rect x="1317" y="197" width="3" height="3" fill="#ff8000"/>
<rect x="1320" y="197" width="6" height="3" fill="#ffcc00"/>
<rect x="1326" y="197" width="12" height="3" fill="#ffff00"/>
<rect x="1338" y="197" width="15" height="3" fill="#00ff00"/>
<rect x="1353" y="197" width="111" height="3" fill="#0000ff"/>
<rect x="1464" y="197" width="6" height="3" fill="#00ff00"/>
<rect x="1470" y="197" width="3" height="3" fill="#ffff00"/>
<rect x="1473" y="197" width="3" height="3" fill="#ffcc00"/>
<rect x="1476" y="197" width="27" height="3" fill="#ff8000"/>
<rect x="1503" y="197" width="9" height="3" fill="#ff0000"/>
<rect x="1296" y="200" width="18" height="3" fill="#ff0000"/>
<rect x="1314" y="200" width="3" height="3" fill="#ff8000"/>
<rect x="1317" y="200" width="6" height="3" fill="#ffcc00"/>
<rect x="1323" y="200" width="12" height="3" fill="#ffff00"/>
<rect x="1335" y="200" width="15" height="3" fill="#00ff00"/>
<rect x="1350" y="200" width="114" height="3" fill="#0000ff"/>
<rect x="1464" y="200" width="3" height="3" fill="#00ff00"/>
<rect x="1467" y="200" width="3" height="3" fill="#ffff00"/>
<rect x="1470" y="200" width="3" height="3" fill="#ffcc00"/>
<rect x="1473" y="200" width="27" height="3" fill="#ff8000"/>
<rect x="1500" y="200" width="9" height="3" fill="#ff0000"/>
<rect x="1293" y="203" width="18" height="3" fill="#ff0000"/>
<rect x="1311" y="203" width="6" height="3" fill="#ff8000"/>
<rect x="1317" y="203" width="3" height="3" fill="#ffcc00"/>
<rect x="1320" y="203" width="12" height="3" fill="#ffff00"/>
<rect x="1332" y="203" width="15" height="3" fill="#00ff00"/>
<rect x="1347" y="203" width="111" height="3" fill="#0000ff"/>
<rect x="1458" y="203" width="6" height="3" fill="#00ff00"/>
<rect x="1464" y="203" width="3" height="3" fill="#ffff00"/>
<rect x="1467" y="203" width="3" height="3" fill="#ffcc00"/>
<rect x="1470" y="203" width="27" height="3" fill="#ff8000"/>
<rect x="1497" y="203" width="9" height="3" fill="#ff0000"/>
<rect x="1290" y="206" width="18" height="3" fill="#ff0000"/>
<rect x="1308" y="206" width="6" height="3" fill="#ff8000"/>
<rect x="1314" y="206" width="6" height="3" fill="#ffcc00"/>
<rect x="1320" y="206" width="9" height="3" fill="#ffff00"/>
<rect x="1329" y="206" width="15" height="3" fill="#00ff00"/>
<rect x="1344" y="206" width="114" height="3" fill="#0000ff"/>
<rect x="1458" y="206" width="3" height="3" fill="#00ff00"/>
<rect x="1461" y="206" width="3" height="3" fill="#ffff00"/>
<rect x="1464" y="206" width="3" height="3" fill="#ffcc00"/>
<rect x="1467" y="206" width="27" height="3" fill="#ff8000"/>
<rect x="1494" y="206" width="9" height="3" fill="#ff0000"/>
<rect x="1287" y="209" width="18" height="3" fill="#ff0000"/>
<rect x="1305" y="209" width="6" height="3" fill="#ff8000"/>
<rect x="1311" y="209" width="6" height="3" fill="#ffcc00"/>
<rect x="1317" y="209" width="9" height="3" fill="#ffff00"/>
<rect x="1326" y="209" width="15" height="3" fill="#00ff00"/>
<rect x="1341" y="209" width="111" height="3" fill="#0000ff"/>
<rect x="1452" y="209" width="6" height="3" fill="#00ff00"/>
<rect x="1458" y="209" width="3" height="3" fill="#ffff00"/>
<rect x="1461" y="209" width="3" height="3" fill="#ffcc00"/>
<rect x="1464" y="209" width="27" height="3" fill="#ff8000"/>
<rect x="1491" y="209" width="6" height="3" fill="#ff0000"/>
<rect x="1284" y="212" width="18" height="3" fill="#ff0000"/>
<rect x="1302" y="212" width="6" height="3" fill="#ff8000"/>
<rect x="1308" y="212" width="6" height="3" fill="#ffcc00"/>
<rect x="1314" y="212" width="9" height="3" fill="#ffff00"/>
<rect x="1323" y="212" width="15" height="3" fill="#00ff00"/>
<rect x="1338" y="212" width="114" height="3" fill="#0000ff"/>
<rect x="1452" y="212" width="3" height="3" fill="#00ff00"/>
<rect x="1455" y="212" width="3" height="3" fill="#ffff00"/>
<rect x="1458" y="212" width="3" height="3" fill="#ffcc00"/>
<rect x="1461" y="212" width="27" height="3" fill="#ff8000"/>
<rect x="1488" y="212" width="6" height="3" fill="#ff0000"/>
<rect x="1281" y="215" width="18" height="3" fill="#ff0000"/>
<rect x="1299" y="215" width="6" height="3" fill="#ff8000"/>
<rect x="1305" y="215" width="6" height="3" fill="#ffcc00"/>
<rect x="1311" y="215" width="6" height="3" fill="#ffff00"/>
<rect x="1317" y="215" width="18" height="3" fill="#00ff00"/>
<rect x="1335" y="215" width="114" height="3" fill="#0000ff"/>
<rect x="1449" y="215" width="3" height="3" fill="#00ff00"/>
<rect x="1452" y="215" width="6" height="3" fill="#ffff00"/>
<rect x="1458" y="215" width="24" height="3" fill="#ff8000"/>
<rect x="1482" y="215" width="9" height="3" fill="#ff0000"/>
<rect x="1278" y="218" width="18" height="3" fill="#ff0000"/>
<rect x="1296" y="218" width="6" height="3" fill="#ff8000"/>
<rect x="1302" y="218" width="6" height="3" fill="#ffcc00"/>
<rect x="1308" y="218" width="6" height="3" fill="#ffff00"/>
<rect x="1314" y="218" width="18" height="3" fill="#00ff00"/>
<rect x="1332" y="218" width="114" height="3" fill="#0000ff"/>
<rect x="1446" y="218" width="6" height="3" fill="#00ff00"/>
<rect x="1452" y="218" width="3" height="3" fill="#ffff00"/>
<rect x="1455" y="218" width="3" height="3" fill="#ffcc00"/>
<rect x="1458" y="218" width="18" height="3" fill="#ff8000"/>
<rect x="1476" y="218" width="9" height="3" fill="#ff0000"/>
<rect x="1275" y="221" width="18" height="3" fill="#ff0000"/>
<rect x="1293" y="221" width="6" height="3" fill="#ff8000"/>
<rect x="1299" y="221" width="6" height="3" fill="#ffcc00"/>
<rect x="1305" y="221" width="6" height="3" fill="#ffff00"/>
<rect x="1311" y="221" width="15" height="3" fill="#00ff00"/>
<rect x="1326" y="221" width="117" height="3" fill="#0000ff"/>
<rect x="1443" y="221" width="6" height="3" fill="#00ff00"/>
<rect x="1449" y="221" width="3" height="3" fill="#ffff00"/>
<rect x="1452" y="221" width="3" height="3" fill="#ffcc00"/>
<rect x="1455" y="221" width="15" height="3" fill="#ff8000"/>
<rect x="1470" y="221" width="12" height="3" fill="#ff0000"/>
<rect x="1272" y="224" width="18" height="3" fill="#ff0000"/>
<rect x="1290" y="224" width="6" height="3" fill="#ff8000"/>
<rect x="1296" y="224" width="3" height="3" fill="#ffcc00"/>
<rect x="1299" y="224" width="9" height="3" fill="#ffff00"/>
<rect x="1308" y="224" width="15" height="3" fill="#00ff00"/>
<rect x="1323" y="224" width="117" height="3" fill="#0000ff"/>
<rect x="1440" y="224" width="6" height="3" fill="#00ff00"/>
<rect x="1446" y="224" width="3" height="3" fill="#ffff00"/>
<rect x="1449" y="224" width="3" height="3" fill="#ffcc00"/>
<rect x="1452" y="224" width="12" height="3" fill="#ff8000"/>
<rect x="1464" y="224" width="12" height="3" fill="#ff0000"/>
<rect x="1269" y="227" width="18" height="3" fill="#ff0000"/>
<rect x="1287" y="227" width="6" height="3" fill="#ff8000"/>
<rect x="1293" y="227" width="3" height="3" fill="#ffcc00"/>
<rect x="1296" y="227" width="9" height="3" fill="#ffff00"/>
<rect x="1305" y="227" width="15" height="3" fill="#00ff00"/>
<rect x="1320" y="227" width="120" height="3" fill="#0000ff"/>
<rect x="1440" y="227" width="3" height="3" fill="#00ff00"/>
<rect x="1443" y="227" width="6" height="3" fill="#ffff00"/>
<rect x="1449" y="227" width="3" height="3" fill="#ffcc00"/>
<rect x="1452" y="227" width="9" height="3" fill="#ff8000"/>
<rect x="1461" y="227" width="12" height="3" fill="#ff0000"/>
<rect x="1266" y="230" width="18" height="3" fill="#ff0000"/>
<rect x="1284" y="230" width="6" height="3" fill="#ff8000"/>
<rect x="1290" y="230" width="3" height="3" fill="#ffcc00"/>
<rect x="1293" y="230" width="6" height="3" fill="#ffff00"/>
<rect x="1299" y="230" width="18" height="3" fill="#00ff00"/>
<rect x="1317" y="230" width="120" height="3" fill="#0000ff"/>
<rect x="1437" y="230" width="6" height="3" fill="#00ff00"/>
<rect x="1443" y="230" width="3" height="3" fill="#ffff00"/>
<rect x="1446" y="230" width="3" height="3" fill="#ffcc00"/>
<rect x="1449" y="230" width="6" height="3" fill="#ff8000"/>
<rect x="1455" y="230" width="15" height="3" fill="#ff0000"/>
<rect x="1266" y="233" width="15" height="3" fill="#ff0000"/>
<rect x="1281" y="233" width="6" height="3" fill="#ff8000"/>
<rect x="1287" y="233" width="3" height="3" fill="#ffcc00"/>
<rect x="1290" y="233" width="6" height="3" fill="#ffff00"/>
<rect x="1296" y="233" width="18" height="3" fill="#00ff00"/>
<rect x="1314" y="233" width="120" height="3" fill="#0000ff"/>
<rect x="1434" y="233" width="6" height="3" fill="#00ff00"/>
<rect x="1440" y="233" width="3" height="3" fill="#ffff00"/>
<rect x="1443" y="233" width="3" height="3" fill="#ffcc00"/>
<rect x="1446" y="233" width="6" height="3" fill="#ff8000"/>
<rect x="1452" y="233" width="15" height="3" fill="#ff0000"/>
<rect x="1263" y="236" width="15" height="3" fill="#ff0000"/>
<rect x="1278" y="236" width="6" height="3" fill="#ff8000"/>
<rect x="1284" y="236" width="3" height="3" fill="#ffcc00"/>
<rect x="1287" y="236" width="6" height="3" fill="#ffff00"/>
<rect x="1293" y="236" width="15" height="3" fill="#00ff00"/>
<rect x="1308" y="236" width="123" height="3" fill="#0000ff"/>
<rect x="1431" y="236" width="6" height="3" fill="#00ff00"/>
<rect x="1437" y="236" width="3" height="3" fill="#ffff00"/>
<rect x="1440" y="236" width="3" height="3" fill="#ffcc00"/>
<rect x="1443" y="236" width="6" height="3" fill="#ff8000"/>
<rect x="1449" y="236" width="15" height="3" fill="#ff0000"/>
<rect x="1260" y="239" width="15" height="3" fill="#ff0000"/>
<rect x="1275" y="239" width="6" height="3" fill="#ff8000"/>
<rect x="1281" y="239" width="3" height="3" fill="#ffcc00"/>
<rect x="1284" y="239" width="6" height="3" fill="#ffff00"/>
<rect x="1290" y="239" width="15" height="3" fill="#00ff00"/>
<rect x="1305" y="239" width="123" height="3" fill="#0000ff"/>
<rect x="1428" y="239" width="6" height="3" fill="#00ff00"/>
<rect x="1434" y="239" width="3" height="3" fill="#ffff00"/>
<rect x="1437" y="239" width="3" height="3" fill="#ffcc00"/>
<rect x="1440" y="239" width="6" height="3" fill="#ff8000"/>
<rect x="1446" y="239" width="15" height="3" fill="#ff0000"/>
<rect x="1257" y="242" width="15" height="3" fill="#ff0000"/>
<rect x="1272" y="242" width="3" height="3" fill="#ff8000"/>
<rect x="1275" y="242" width="6" height="3" fill="#ffcc00"/>
<rect x="1281" y="242" width="3" height="3" fill="#ffff00"/>
<rect x="1284" y="242" width="18" height="3" fill="#00ff00"/>
<rect x="1302" y="242" width="123" height="3" fill="#0000ff"/>
<rect x="1425" y="242" width="6" height="3" fill="#00ff00"/>
<rect x="1431" y="242" width="6" height="3" fill="#ffff00"/>
<rect x="1437" y="242" width="9" height="3" fill="#ff8000"/>
<rect x="1446" y="242" width="12" height="3" fill="#ff0000"/>
<rect x="1254" y="245" width="15" height="3" fill="#ff0000"/>
<rect x="1269" y="245" width="3" height="3" fill="#ff8000"/>
<rect x="1272" y="245" width="3" height="3" fill="#ffcc00"/>
<rect x="1275" y="245" width="6" height="3" fill="#ffff00"/>
<rect x="1281" y="245" width="18" height="3" fill="#00ff00"/>
<rect x="1299" y="245" width="126" height="3" fill="#0000ff"/>
<rect x="1425" y="245" width="3" height="3" fill="#00ff00"/>
<rect x="1428" y="245" width="6" height="3" fill="#ffff00"/>
<rect x="1434" y="245" width="3" height="3" fill="#ffcc00"/>
<rect x="1437" y="245" width="6" height="3" fill="#ff8000"/>
<rect x="1443" y="245" width="12" height="3" fill="#ff0000"/>
<rect x="1251" y="248" width="15" height="3" fill="#ff0000"/>
<rect x="1266" y="248" width="3" height="3" fill="#ff8000"/>
<rect x="1269" y="248" width="3" height="3" fill="#ffcc00"/>
<rect x="1272" y="248" width="6" height="3" fill="#ffff00"/>
<rect x="1278" y="248" width="18" height="3" fill="#00ff00"/>
<rect x="1296" y="248" width="126" height="3" fill="#0000ff"/>
<rect x="1422" y="248" width="6" height="3" fill="#00ff00"/>
<rect x="1428" y="248" width="3" height="3" fill="#ffff00"/>
<rect x="1431" y="248" width="3" height="3" fill="#ffcc00"/>
<rect x="1434" y="248" width="6" height="3" fill="#ff8000"/>
<rect x="1440" y="248" width="12" height="3" fill="#ff0000"/>
<rect x="1248" y="251" width="15" height="3" fill="#ff0000"/>
<rect x="1263" y="251" width="3" height="3" fill="#ff8000"/>
<rect x="1266" y="251" width="3" height="3" fill="#ffcc00"/>
<rect x="1269" y="251" width="6" height="3" fill="#ffff00"/>
<rect x="1275" y="251" width="15" height="3" fill="#00ff00"/>
<rect x="1290" y="251" width="129" height="3" fill="#0000ff"/>
<rect x="1419" y="251" width="6" height="3" fill="#00ff00"/>
<rect x="1425" y="251" width="3" height="3" fill="#ffff00"/>
<rect x="1428" y="251" width="3" height="3" fill="#ffcc00"/>
<rect x="1431" y="251" width="6" height="3" fill="#ff8000"/>
<rect x="1437" y="251" width="15" height="3" fill="#ff0000"/>
<rect x="1245" y="254" width="15" height="3" fill="#ff0000"/>
<rect x="1260" y="254" width="3" height="3" fill="#ff8000"/>
<rect x="1263" y="254" width="3" height="3" fill="#ffcc00"/>
<rect x="1266" y="254" width="6" height="3" fill="#ffff00"/>
<rect x="1272" y="254" width="15" height="3" fill="#00ff00"/>
<rect x="1287" y="254" width="129" height="3" fill="#0000ff"/>
<rect x="1416" y="254" width="6" height="3" fill="#00ff00"/>
<rect x="1422" y="254" width="3" height="3" fill="#ffff00"/>
<rect x="1425" y="254" width="3" height="3" fill="#ffcc00"/>
<rect x="1428" y="254" width="6" height="3" fill="#ff8000"/>
<rect x="1434" y="254" width="15" height="3" fill="#ff0000"/>
<rect x="1242" y="257" width="15" height="3" fill="#ff0000"/>
<rect x="1257" y="257" width="3" height="3" fill="#ff8000"/>
<rect x="1260" y="257" width="3" height="3" fill="#ffcc00"/>
<rect x="1263" y="257" width="6" height="3" fill="#ffff00"/>
<rect x="1269" y="257" width="15" height="3" fill="#00ff00"/>
<rect x="1284" y="257" width="129" height="3" fill="#0000ff"/>
<rect x="1413" y="257" width="6" height="3" fill="#00ff00"/>
<rect x="1419" y="257" width="3" height="3" fill="#ffff00"/>
<rect x="1422" y="257" width="3" height="3" fill="#ffcc00"/>
<rect x="1425" y="257" width="6" height="3" fill="#ff8000"/>
<rect x="1431" y="257" width="15" height="3" fill="#ff0000"/>
<rect x="1239" y="260" width="15" height="3" fill="#ff0000"/>
<rect x="1254" y="260" width="6" height="3" fill="#ff8000"/>
<rect x="1260" y="260" width="3" height="3" fill="#ffcc00"/>
<rect x="1263" y="260" width="3" height="3" fill="#ffff00"/>
<rect x="1266" y="260" width="15" height="3" fill="#00ff00"/>
<rect x="1281" y="260" width="129" height="3" fill="#0000ff"/>
<rect x="1410" y="260" width="6" height="3" fill="#00ff00"/>
<rect x="1416" y="260" width="3" height="3" fill="#ffff00"/>
<rect x="1419" y="260" width="3" height="3" fill="#ffcc00"/>
<rect x="1422" y="260" width="9" height="3" fill="#ff8000"/>
<rect x="1431" y="260" width="12" height="3" fill="#ff0000"/>
<rect x="1236" y="263" width="15" height="3" fill="#ff0000"/>
<rect x="1251" y="263" width="6" height="3" fill="#ff8000"/>
<rect x="1257" y="263" width="3" height="3" fill="#ffcc00"/>
<rect x="1260" y="263" width="3" height="3" fill="#ffff00"/>
<rect x="1263" y="263" width="15" height="3" fill="#00ff00"/>
<rect x="1278" y="263" width="129" height="3" fill="#0000ff"/>
<rect x="1407" y="263" width="6" height="3" fill="#00ff00"/>
<rect x="1413" y="263" width="3" height="3" fill="#ffff00"/>
<rect x="1416" y="263" width="3" height="3" fill="#ffcc00"/>
<rect x="1419" y="263" width="9" height="3" fill="#ff8000"/>
<rect x="1428" y="263" width="12" height="3" fill="#ff0000"/>
<rect x="1233" y="266" width="15" height="3" fill="#ff0000"/>
<rect x="1248" y="266" width="6" height="3" fill="#ff8000"/>
<rect x="1254" y="266" width="3" height="3" fill="#ffcc00"/>
<rect x="1257" y="266" width="3" height="3" fill="#ffff00"/>
<rect x="1260" y="266" width="15" height="3" fill="#00ff00"/>
<rect x="1275" y="266" width="132" height="3" fill="#0000ff"/>
<rect x="1407" y="266" width="3" height="3" fill="#00ff00"/>
<rect x="1410" y="266" width="3" height="3" fill="#ffff00"/>
<rect x="1413" y="266" width="3" height="3" fill="#ffcc00"/>
<rect x="1416" y="266" width="9" height="3" fill="#ff8000"/>
<rect x="1425" y="266" width="12" height="3" fill="#ff0000"/>
<rect x="1230" y="269" width="18" height="3" fill="#ff0000"/>
<rect x="1248" y="269" width="3" height="3" fill="#ff8000"/>
<rect x="1251" y="269" width="3" height="3" fill="#ffcc00"/>
<rect x="1254" y="269" width="3" height="3" fill="#ffff00"/>
<rect x="1257" y="269" width="15" height="3" fill="#00ff00"/>
<rect x="1272" y="269" width="132" height="3" fill="#0000ff"/>
<rect x="1404" y="269" width="3" height="3" fill="#00ff00"/>
<rect x="1407" y="269" width="3" height="3" fill="#ffff00"/>
<rect x="1410" y="269" width="3" height="3" fill="#ffcc00"/>
<rect x="1413" y="269" width="12" height="3" fill="#ff8000"/>
<rect x="1425" y="269" width="9" height="3" fill="#ff0000"/>
<rect x="1227" y="272" width="18" height="3" fill="#ff0000"/>
<rect x="1245" y="272" width="3" height="3" fill="#ff8000"/>
<rect x="1248" y="272" width="3" height="3" fill="#ffcc00"/>
<rect x="1251" y="272" width="6" height="3" fill="#ffff00"/>
<rect x="1257" y="272" width="12" height="3" fill="#00ff00"/>
<rect x="1269" y="272" width="132" height="3" fill="#0000ff"/>
<rect x="1401" y="272" width="6" height="3" fill="#00ff00"/>
<rect x="1407" y="272" width="3" height="3" fill="#ffcc00"/>
<rect x="1410" y="272" width="12" height="3" fill="#ff8000"/>
<rect x="1422" y="272" width="9" height="3" fill="#ff0000"/>
<rect x="1224" y="275" width="18" height="3" fill="#ff0000"/>
<rect x="1242" y="275" width="3" height="3" fill="#ff8000"/>
<rect x="1245" y="275" width="3" height="3" fill="#ffcc00"/>
<rect x="1248" y="275" width="6" height="3" fill="#ffff00"/>
<rect x="1254" y="275" width="12" height="3" fill="#00ff00"/>
<rect x="1266" y="275" width="132" height="3" fill="#0000ff"/>
<rect x="1398" y="275" width="6" height="3" fill="#00ff00"/>
<rect x="1404" y="275" width="3" height="3" fill="#ffcc00"/>
<rect x="1407" y="275" width="12" height="3" fill="#ff8000"/>
<rect x="1419" y="275" width="12" height="3" fill="#ff0000"/>
<rect x="1221" y="278" width="18" height="3" fill="#ff0000"/>
<rect x="1239" y="278" width="6" height="3" fill="#ff8000"/>
<rect x="1245" y="278" width="6" height="3" fill="#ffff00"/>
<rect x="1251" y="278" width="12" height="3" fill="#00ff00"/>
<rect x="1263" y="278" width="132" height="3" fill="#0000ff"/>
<rect x="1395" y="278" width="6" height="3" fill="#00ff00"/>
<rect x="1401" y="278" width="3" height="3" fill="#ffff00"/>
<rect x="1404" y="278" width="12" height="3" fill="#ff8000"/>
<rect x="1416" y="278" width="12" height="3" fill="#ff0000"/>
<rect x="1218" y="281" width="18" height="3" fill="#ff0000"/>
<rect x="1236" y="281" width="6" height="3" fill="#ff8000"/>
<rect x="1242" y="281" width="6" height="3" fill="#ffff00"/>
<rect x="1248" y="281" width="12" height="3" fill="#00ff00"/>
<rect x="1260" y="281" width="132" height="3" fill="#0000ff"/>
<rect x="1392" y="281" width="6" height="3" fill="#00ff00"/>
<rect x="1398" y="281" width="3" height="3" fill="#ffff00"/>
<rect x="1401" y="281" width="15" height="3" fill="#ff8000"/>
<rect x="1416" y="281" width="9" height="3" fill="#ff0000"/>
<rect x="1215" y="284" width="18" height="3" fill="#ff0000"/>
<rect x="1233" y="284" width="6" height="3" fill="#ff8000"/>
<rect x="1239" y="284" width="3" height="3" fill="#ffcc00"/>
<rect x="1242" y="284" width="3" height="3" fill="#ffff00"/>
<rect x="1245" y="284" width="12" height="3" fill="#00ff00"/>
<rect x="1257" y="284" width="135" height="3" fill="#0000ff"/>
<rect x="1392" y="284" width="3" height="3" fill="#00ff00"/>
<rect x="1395" y="284" width="3" height="3" fill="#ffff00"/>
<rect x="1398" y="284" width="15" height="3" fill="#ff8000"/>
<rect x="1413" y="284" width="9" height="3" fill="#ff0000"/>
<rect x="1212" y="287" width="21" height="3" fill="#ff0000"/>
<rect x="1233" y="287" width="3" height="3" fill="#ff8000"/>
<rect x="1236" y="287" width="3" height="3" fill="#ffcc00"/>
<rect x="1239" y="287" width="3" height="3" fill="#ffff00"/>
<rect x="1242" y="287" width="12" height="3" fill="#00ff00"/>
<rect x="1254" y="287" width="135" height="3" fill="#0000ff"/>
<rect x="1389" y="287" width="3" height="3" fill="#00ff00"/>
<rect x="1392" y="287" width="3" height="3" fill="#ffff00"/>
<rect x="1395" y="287" width="15" height="3" fill="#ff8000"/>
<rect x="1410" y="287" width="9" height="3" fill="#ff0000"/>
<rect x="1209" y="290" width="21" height="3" fill="#ff0000"/>
<rect x="1230" y="290" width="3" height="3" fill="#ff8000"/>
<rect x="1233" y="290" width="3" height="3" fill="#ffcc00"/>
<rect x="1236" y="290" width="3" height="3" fill="#ffff00"/>
<rect x="1239" y="290" width="12" height="3" fill="#00ff00"/>
<rect x="1251" y="290" width="135" height="3" fill="#0000ff"/>
<rect x="1386" y="290" width="3" height="3" fill="#00ff00"/>
<rect x="1389" y="290" width="3" height="3" fill="#ffff00"/>
<rect x="1392" y="290" width="15" height="3" fill="#ff8000"/>
<rect x="1407" y="290" width="9" height="3" fill="#ff0000"/>
<rect x="1206" y="293" width="21" height="3" fill="#ff0000"/>
<rect x="1227" y="293" width="3" height="3" fill="#ff8000"/>
<rect x="1230" y="293" width="3" height="3" fill="#ffcc00"/>
<rect x="1233" y="293" width="3" height="3" fill="#ffff00"/>
<rect x="1236" y="293" width="12" height="3" fill="#00ff00"/>
<rect x="1248" y="293" width="135" height="3" fill="#0000ff"/>
<rect x="1383" y="293" width="3" height="3" fill="#00ff00"/>
<rect x="1386" y="293" width="3" height="3" fill="#ffff00"/>
<rect x="1389" y="293" width="15" height="3" fill="#ff8000"/>
<rect x="1404" y="293" width="9" height="3" fill="#ff0000"/>
<rect x="1203" y="296" width="21" height="3" fill="#ff0000"/>
<rect x="1224" y="296" width="3" height="3" fill="#ff8000"/>
<rect x="1227" y="296" width="3" height="3" fill="#ffcc00"/>
<rect x="1230" y="296" width="3" height="3" fill="#ffff00"/>
<rect x="1233" y="296" width="12" height="3" fill="#00ff00"/>
<rect x="1245" y="296" width="135" height="3" fill="#0000ff"/>
<rect x="1380" y="296" width="3" height="3" fill="#00ff00"/>
<rect x="1383" y="296" width="3" height="3" fill="#ffff00"/>
<rect x="1386" y="296" width="15" height="3" fill="#ff8000"/>
<rect x="1401" y="296" width="9" height="3" fill="#ff0000"/>
<rect x="1200" y="299" width="21" height="3" fill="#ff0000"/>
<rect x="1221" y="299" width="3" height="3" fill="#ff8000"/>
<rect x="1224" y="299" width="3" height="3" fill="#ffcc00"/>
<rect x="1227" y="299" width="3" height="3" fill="#ffff00"/>
<rect x="1230" y="299" width="12" height="3" fill="#00ff00"/>
<rect x="1242" y="299" width="135" height="3" fill="#0000ff"/>
<rect x="1377" y="299" width="3" height="3" fill="#00ff00"/>
<rect x="1380" y="299" width="3" height="3" fill="#ffff00"/>
<rect x="1383" y="299" width="15" height="3" fill="#ff8000"/>
<rect x="1398" y="299" width="9" height="3" fill="#ff0000"/>
<rect x="1197" y="302" width="18" height="3" fill="#ff0000"/>
<rect x="1215" y="302" width="6" height="3" fill="#ff8000"/>
<rect x="1221" y="302" width="3" height="3" fill="#ffcc00"/>
<rect x="1224" y="302" width="3" height="3" fill="#ffff00"/>
<rect x="1227" y="302" width="12" height="3" fill="#00ff00"/>
<rect x="1239" y="302" width="135" height="3" fill="#0000ff"/>
<rect x="1374" y="302" width="3" height="3" fill="#00ff00"/>
<rect x="1377" y="302" width="3" height="3" fill="#ffff00"/>
<rect x="1380" y="302" width="3" height="3" fill="#ffcc00"/>
<rect x="1383" y="302" width="12" height="3" fill="#ff8000"/>
<rect x="1395" y="302" width="9" height="3" fill="#ff0000"/>
<rect x="1194" y="305" width="18" height="3" fill="#ff0000"/>
<rect x="1212" y="305" width="6" height="3" fill="#ff8000"/>
<rect x="1218" y="305" width="3" height="3" fill="#ffcc00"/>
<rect x="1221" y="305" width="6" height="3" fill="#ffff00"/>
<rect x="1227" y="305" width="9" height="3" fill="#00ff00"/>
<rect x="1236" y="305" width="135" height="3" fill="#0000ff"/>
<rect x="1371" y="305" width="3" height="3" fill="#00ff00"/>
<rect x="1374" y="305" width="3" height="3" fill="#ffff00"/>
<rect x="1377" y="305" width="3" height="3" fill="#ffcc00"/>
<rect x="1380" y="305" width="12" height="3" fill="#ff8000"/>
<rect x="1392" y="305" width="9" height="3" fill="#ff0000"/>
<rect x="1188" y="308" width="21" height="3" fill="#ff0000"/>
<rect x="1209" y="308" width="6" height="3" fill="#ff8000"/>
<rect x="1215" y="308" width="3" height="3" fill="#ffcc00"/>
<rect x="1218" y="308" width="6" height="3" fill="#ffff00"/>
<rect x="1224" y="308" width="9" height="3" fill="#00ff00"/>
<rect x="1233" y="308" width="135" height="3" fill="#0000ff"/>
<rect x="1368" y="308" width="3" height="3" fill="#00ff00"/>
<rect x="1371" y="308" width="3" height="3" fill="#ffff00"/>
<rect x="1374" y="308" width="3" height="3" fill="#ffcc00"/>
<rect x="1377" y="308" width="12" height="3" fill="#ff8000"/>
<rect x="1389" y="308" width="6" height="3" fill="#ff0000"/>
<rect x="1185" y="311" width="21" height="3" fill="#ff0000"/>
<rect x="1206" y="311" width="6" height="3" fill="#ff8000"/>
<rect x="1212" y="311" width="3" height="3" fill="#ffcc00"/>
<rect x="1215" y="311" width="6" height="3" fill="#ffff00"/>
<rect x="1221" y="311" width="12" height="3" fill="#00ff00"/>
<rect x="1233" y="311" width="132" height="3" fill="#0000ff"/>
<rect x="1365" y="311" width="3" height="3" fill="#00ff00"/>
<rect x="1368" y="311" width="3" height="3" fill="#ffff00"/>
<rect x="1371" y="311" width="3" height="3" fill="#ffcc00"/>
<rect x="1374" y="311" width="12" height="3" fill="#ff8000"/>
<rect x="1386" y="311" width="6" height="3" fill="#ff0000"/>
<rect x="1182" y="314" width="21" height="3" fill="#ff0000"/>
<rect x="1203" y="314" width="6" height="3" fill="#ff8000"/>
<rect x="1209" y="314" width="3" height="3" fill="#ffcc00"/>
<rect x="1212" y="314" width="6" height="3" fill="#ffff00"/>
<rect x="1218" y="314" width="12" height="3" fill="#00ff00"/>
<rect x="1230" y="314" width="132" height="3" fill="#0000ff"/>
<rect x="1362" y="314" width="3" height="3" fill="#00ff00"/>
<rect x="1365" y="314" width="3" height="3" fill="#ffff00"/>
<rect x="1368" y="314" width="3" height="3" fill="#ffcc00"/>
<rect x="1371" y="314" width="12" height="3" fill="#ff8000"/>
<rect x="1383" y="314" width="6" height="3" fill="#ff0000"/>
<rect x="1179" y="317" width="21" height="3" fill="#ff0000"/>
<rect x="1200" y="317" width="6" height="3" fill="#ff8000"/>
<rect x="1206" y="317" width="3" height="3" fill="#ffcc00"/>
<rect x="1209" y="317" width="6" height="3" fill="#ffff00"/>
<rect x="1215" y="317" width="12" height="3" fill="#00ff00"/>
<rect x="1227" y="317" width="132" height="3" fill="#0000ff"/>
<rect x="1359" y="317" width="3" height="3" fill="#00ff00"/>
<rect x="1362" y="317" width="3" height="3" fill="#ffff00"/>
<rect x="1365" y="317" width="3" height="3" fill="#ffcc00"/>
<rect x="1368" y="317" width="12" height="3" fill="#ff8000"/>
<rect x="1380" y="317" width="6" height="3" fill="#ff0000"/>
<rect x="1176" y="320" width="21" height="3" fill="#ff0000"/>
<rect x="1197" y="320" width="6" height="3" fill="#ff8000"/>
<rect x="1203" y="320" width="3" height="3" fill="#ffcc00"/>
<rect x="1206" y="320" width="6" height="3" fill="#ffff00"/>
<rect x="1212" y="320" width="12" height="3" fill="#00ff00"/>
<rect x="1224" y="320" width="132" height="3" fill="#0000ff"/>
<rect x="1356" y="320" width="3" height="3" fill="#00ff00"/>
<rect x="1359" y="320" width="3" height="3" fill="#ffff00"/>
<rect x="1362" y="320" width="3" height="3" fill="#ffcc00"/>
<rect x="1365" y="320" width="12" height="3" fill="#ff8000"/>
<rect x="1377" y="320" width="6" height="3" fill="#ff0000"/>
<rect x="1170" y="323" width="24" height="3" fill="#ff0000"/>
<rect x="1194" y="323" width="6" height="3" fill="#ff8000"/>
<rect x="1200" y="323" width="3" height="3" fill="#ffcc00"/>
<rect x="1203" y="323" width="6" height="3" fill="#ffff00"/>
<rect x="1209" y="323" width="12" height="3" fill="#00ff00"/>
<rect x="1221" y="323" width="132" height="3" fill="#0000ff"/>
<rect x="1353" y="323" width="3" height="3" fill="#00ff00"/>
<rect x="1356" y="323" width="6" height="3" fill="#ffff00"/>
<rect x="1362" y="323" width="12" height="3" fill="#ff8000"/>
<rect x="1374" y="323" width="6" height="3" fill="#ff0000"/>
<rect x="1167" y="326" width="24" height="3" fill="#ff0000"/>
<rect x="1191" y="326" width="6" height="3" fill="#ff8000"/>
<rect x="1197" y="326" width="3" height="3" fill="#ffcc00"/>
<rect x="1200" y="326" width="6" height="3" fill="#ffff00"/>
<rect x="1206" y="326" width="12" height="3" fill="#00ff00"/>
<rect x="1218" y="326" width="132" height="3" fill="#0000ff"/>
<rect x="1350" y="326" width="3" height="3" fill="#00ff00"/>
<rect x="1353" y="326" width="6" height="3" fill="#ffff00"/>
<rect x="1359" y="326" width="12" height="3" fill="#ff8000"/>
<rect x="1371" y="326" width="6" height="3" fill="#ff0000"/>
<rect x="1164" y="329" width="24" height="3" fill="#ff0000"/>
<rect x="1188" y="329" width="6" height="3" fill="#ff8000"/>
<rect x="1194" y="329" width="3" height="3" fill="#ffcc00"/>
<rect x="1197" y="329" width="6" height="3" fill="#ffff00"/>
<rect x="1203" y="329" width="12" height="3" fill="#00ff00"/>
<rect x="1215" y="329" width="132" height="3" fill="#0000ff"/>
<rect x="1347" y="329" width="3" height="3" fill="#00ff00"/>
<rect x="1350" y="329" width="6" height="3" fill="#ffff00"/>
<rect x="1356" y="329" width="12" height="3" fill="#ff8000"/>
<rect x="1368" y="329" width="6" height="3" fill="#ff0000"/>
<rect x="1161" y="332" width="24" height="3" fill="#ff0000"/>
<rect x="1185" y="332" width="6" height="3" fill="#ff8000"/>
<rect x="1191" y="332" width="3" height="3" fill="#ffcc00"/>
<rect x="1194" y="332" width="6" height="3" fill="#ffff00"/>
<rect x="1200" y="332" width="12" height="3" fill="#00ff00"/>
<rect x="1212" y="332" width="132" height="3" fill="#0000ff"/>
<rect x="1344" y="332" width="6" height="3" fill="#00ff00"/>
<rect x="1350" y="332" width="3" height="3" fill="#ffff00"/>
<rect x="1353" y="332" width="12" height="3" fill="#ff8000"/>
<rect x="1365" y="332" width="3" height="3" fill="#ff0000"/>
<rect x="1158" y="335" width="24" height="3" fill="#ff0000"/>
<rect x="1182" y="335" width="6" height="3" fill="#ff8000"/>
<rect x="1188" y="335" width="3" height="3" fill="#ffcc00"/>
<rect x="1191" y="335" width="6" height="3" fill="#ffff00"/>
<rect x="1197" y="335" width="12" height="3" fill="#00ff00"/>
<rect x="1209" y="335" width="132" height="3" fill="#0000ff"/>
<rect x="1341" y="335" width="3" height="3" fill="#00ff00"/>
<rect x="1344" y="335" width="6" height="3" fill="#ffff00"/>
<rect x="1350" y="335" width="12" height="3" fill="#ff8000"/>
<rect x="1362" y="335" width="6" height="3" fill="#ff0000"/>
<rect x="1155" y="338" width="24" height="3" fill="#ff0000"/>
<rect x="1179" y="338" width="6" height="3" fill="#ff8000"/>
<rect x="1185" y="338" width="3" height="3" fill="#ffcc00"/>
<rect x="1188" y="338" width="6" height="3" fill="#ffff00"/>
<rect x="1194" y="338" width="12" height="3" fill="#00ff00"/>
<rect x="1206" y="338" width="132" height="3" fill="#0000ff"/>
<rect x="1338" y="338" width="6" height="3" fill="#00ff00"/>
<rect x="1344" y="338" width="3" height="3" fill="#ffff00"/>
<rect x="1347" y="338" width="12" height="3" fill="#ff8000"/>
<rect x="1359" y="338" width="3" height="3" fill="#ff0000"/>
<rect x="1152" y="341" width="24" height="3" fill="#ff0000"/>
<rect x="1176" y="341" width="6" height="3" fill="#ff8000"/>
<rect x="1182" y="341" width="3" height="3" fill="#ffcc00"/>
<rect x="1185" y="341" width="6" height="3" fill="#ffff00"/>
<rect x="1191" y="341" width="12" height="3" fill="#00ff00"/>
<rect x="1203" y="341" width="132" height="3" fill="#0000ff"/>
<rect x="1335" y="341" width="3" height="3" fill="#00ff00"/>
<rect x="1338" y="341" width="6" height="3" fill="#ffff00"/>
<rect x="1344" y="341" width="12" height="3" fill="#ff8000"/>
<rect x="1356" y="341" width="6" height="3" fill="#ff0000"/>
<rect x="1149" y="344" width="24" height="3" fill="#ff0000"/>
<rect x="1173" y="344" width="6" height="3" fill="#ff8000"/>
<rect x="1179" y="344" width="3" height="3" fill="#ffcc00"/>
<rect x="1182" y="344" width="6" height="3" fill="#ffff00"/>
<rect x="1188" y="344" width="12" height="3" fill="#00ff00"/>
<rect x="1200" y="344" width="132" height="3" fill="#0000ff"/>
<rect x="1332" y="344" width="6" height="3" fill="#00ff00"/>
<rect x="1338" y="344" width="3" height="3" fill="#ffff00"/>
<rect x="1341" y="344" width="12" height="3" fill="#ff8000"/>
<rect x="1353" y="344" width="3" height="3" fill="#ff0000"/>
<rect x="1146" y="347" width="24" height="3" fill="#ff0000"/>
<rect x="1170" y="347" width="6" height="3" fill="#ff8000"/>
<rect x="1176" y="347" width="3" height="3" fill="#ffcc00"/>
<rect x="1179" y="347" width="6" height="3" fill="#ffff00"/>
<rect x="1185" y="347" width="12" height="3" fill="#00ff00"/>
<rect x="1197" y="347" width="132" height="3" fill="#0000ff"/>
<rect x="1329" y="347" width="3" height="3" fill="#00ff00"/>
<rect x="1332" y="347" width="6" height="3" fill="#ffff00"/>
<rect x="1338" y="347" width="9" height="3" fill="#ff8000"/>
<rect x="1347" y="347" width="9" height="3" fill="#ff0000"/>
<rect x="1143" y="350" width="24" height="3" fill="#ff0000"/>
<rect x="1167" y="350" width="6" height="3" fill="#ff8000"/>
<rect x="1173" y="350" width="3" height="3" fill="#ffcc00"/>
<rect x="1176" y="350" width="6" height="3" fill="#ffff00"/>
<rect x="1182" y="350" width="12" height="3" fill="#00ff00"/>
<rect x="1194" y="350" width="132" height="3" fill="#0000ff"/>
<rect x="1326" y="350" width="6" height="3" fill="#00ff00"/>
<rect x="1332" y="350" width="3" height="3" fill="#ffff00"/>
<rect x="1335" y="350" width="9" height="3" fill="#ff8000"/>
<rect x="1344" y="350" width="6" height="3" fill="#ff0000"/>
<rect x="1140" y="353" width="24" height="3" fill="#ff0000"/>
<rect x="1164" y="353" width="6" height="3" fill="#ff8000"/>
<rect x="1170" y="353" width="3" height="3" fill="#ffcc00"/>
<rect x="1173" y="353" width="6" height="3" fill="#ffff00"/>
<rect x="1179" y="353" width="12" height="3" fill="#00ff00"/>
<rect x="1191" y="353" width="132" height="3" fill="#0000ff"/>
<rect x="1323" y="353" width="3" height="3" fill="#00ff00"/>
<rect x="1326" y="353" width="6" height="3" fill="#ffff00"/>
<rect x="1332" y="353" width="9" height="3" fill="#ff8000"/>
<rect x="1341" y="353" width="9" height="3" fill="#ff0000"/>
<rect x="1137" y="356" width="24" height="3" fill="#ff0000"/>
<rect x="1161" y="356" width="6" height="3" fill="#ff8000"/>
<rect x="1167" y="356" width="3" height="3" fill="#ffcc00"/>
<rect x="1170" y="356" width="6" height="3" fill="#ffff00"/>
<rect x="1176" y="356" width="12" height="3" fill="#00ff00"/>
<rect x="1188" y="356" width="132" height="3" fill="#0000ff"/>
<rect x="1320" y="356" width="6" height="3" fill="#00ff00"/>
<rect x="1326" y="356" width="3" height="3" fill="#ffff00"/>
<rect x="1329" y="356" width="9" height="3" fill="#ff8000"/>
<rect x="1338" y="356" width="6" height="3" fill="#ff0000"/>
<rect x="1134" y="359" width="24" height="3" fill="#ff0000"/>
<rect x="1158" y="359" width="6" height="3" fill="#ff8000"/>
<rect x="1164" y="359" width="3" height="3" fill="#ffcc00"/>
<rect x="1167" y="359" width="6" height="3" fill="#ffff00"/>
<rect x="1173" y="359" width="12" height="3" fill="#00ff00"/>
<rect x="1185" y="359" width="132" height="3" fill="#0000ff"/>
<rect x="1317" y="359" width="3" height="3" fill="#00ff00"/>
<rect x="1320" y="359" width="6" height="3" fill="#ffff00"/>
<rect x="1326" y="359" width="9" height="3" fill="#ff8000"/>
<rect x="1335" y="359" width="9" height="3" fill="#ff0000"/>
<rect x="1131" y="362" width="24" height="3" fill="#ff0000"/>
<rect x="1155" y="362" width="6" height="3" fill="#ff8000"/>
<rect x="1161" y="362" width="3" height="3" fill="#ffcc00"/>
<rect x="1164" y="362" width="6" height="3" fill="#ffff00"/>
<rect x="1170" y="362" width="12" height="3" fill="#00ff00"/>
<rect x="1182" y="362" width="132" height="3" fill="#0000ff"/>
<rect x="1314" y="362" width="6" height="3" fill="#00ff00"/>
<rect x="1320" y="362" width="3" height="3" fill="#ffff00"/>
<rect x="1323" y="362" width="9" height="3" fill="#ff8000"/>
<rect x="1332" y="362" width="6" height="3" fill="#ff0000"/>
<rect x="1128" y="365" width="24" height="3" fill="#ff0000"/>
<rect x="1152" y="365" width="6" height="3" fill="#ff8000"/>
<rect x="1158" y="365" width="3" height="3" fill="#ffcc00"/>
<rect x="1161" y="365" width="6" height="3" fill="#ffff00"/>
<rect x="1167" y="365" width="12" height="3" fill="#00ff00"/>
<rect x="1179" y="365" width="132" height="3" fill="#0000ff"/>
<rect x="1311" y="365" width="3" height="3" fill="#00ff00"/>
<rect x="1314" y="365" width="6" height="3" fill="#ffff00"/>
<rect x="1320" y="365" width="9" height="3" fill="#ff8000"/>
<rect x="1329" y="365" width="9" height="3" fill="#ff0000"/>
<rect x="1125" y="368" width="24" height="3" fill="#ff0000"/>
<rect x="1149" y="368" width="6" height="3" fill="#ff8000"/>
<rect x="1155" y="368" width="3" height="3" fill="#ffcc00"/>
<rect x="1158" y="368" width="6" height="3" fill="#ffff00"/>
<rect x="1164" y="368" width="12" height="3" fill="#00ff00"/>
<rect x="1176" y="368" width="132" height="3" fill="#0000ff"/>
<rect x="1308" y="368" width="6" height="3" fill="#00ff00"/>
<rect x="1314" y="368" width="3" height="3" fill="#ffff00"/>
<rect x="1317" y="368" width="9" height="3" fill="#ff8000"/>
<rect x="1326" y="368" width="6" height="3" fill="#ff0000"/>
<rect x="1119" y="371" width="27" height="3" fill="#ff0000"/>
<rect x="1146" y="371" width="3" height="3" fill="#ff8000"/>
<rect x="1149" y="371" width="6" height="3" fill="#ffcc00"/>
<rect x="1155" y="371" width="6" height="3" fill="#ffff00"/>
<rect x="1161" y="371" width="12" height="3" fill="#00ff00"/>
<rect x="1173" y="371" width="132" height="3" fill="#0000ff"/>
<rect x="1305" y="371" width="6" height="3" fill="#00ff00"/>
<rect x="1311" y="371" width="3" height="3" fill="#ffff00"/>
<rect x="1314" y="371" width="6" height="3" fill="#ff8000"/>
<rect x="1320" y="371" width="9" height="3" fill="#ff0000"/>
<rect x="1116" y="374" width="27" height="3" fill="#ff0000"/>
<rect x="1143" y="374" width="3" height="3" fill="#ff8000"/>
<rect x="1146" y="374" width="6" height="3" fill="#ffcc00"/>
<rect x="1152" y="374" width="6" height="3" fill="#ffff00"/>
<rect x="1158" y="374" width="12" height="3" fill="#00ff00"/>
<rect x="1170" y="374" width="132" height="3" fill="#0000ff"/>
<rect x="1302" y="374" width="6" height="3" fill="#00ff00"/>
<rect x="1308" y="374" width="3" height="3" fill="#ffff00"/>
<rect x="1311" y="374" width="6" height="3" fill="#ff8000"/>
<rect x="1317" y="374" width="9" height="3" fill="#ff0000"/>
<rect x="1113" y="377" width="27" height="3" fill="#ff0000"/>
<rect x="1140" y="377" width="3" height="3" fill="#ff8000"/>
<rect x="1143" y="377" width="3" height="3" fill="#ffcc00"/>
<rect x="1146" y="377" width="9" height="3" fill="#ffff00"/>
<rect x="1155" y="377" width="12" height="3" fill="#00ff00"/>
<rect x="1167" y="377" width="132" height="3" fill="#0000ff"/>
<rect x="1299" y="377" width="6" height="3" fill="#00ff00"/>
<rect x="1305" y="377" width="3" height="3" fill="#ffff00"/>
<rect x="1308" y="377" width="6" height="3" fill="#ff8000"/>
<rect x="1314" y="377" width="9" height="3" fill="#ff0000"/>
<rect x="1110" y="380" width="27" height="3" fill="#ff0000"/>
<rect x="1137" y="380" width="3" height="3" fill="#ff8000"/>
<rect x="1140" y="380" width="3" height="3" fill="#ffcc00"/>
<rect x="1143" y="380" width="6" height="3" fill="#ffff00"/>
<rect x="1149" y="380" width="12" height="3" fill="#00ff00"/>
<rect x="1161" y="380" width="135" height="3" fill="#0000ff"/>
<rect x="1296" y="380" width="6" height="3" fill="#00ff00"/>
<rect x="1302" y="380" width="3" height="3" fill="#ffff00"/>
<rect x="1305" y="380" width="6" height="3" fill="#ff8000"/>
<rect x="1311" y="380" width="9" height="3" fill="#ff0000"/>
<rect x="1107" y="383" width="27" height="3" fill="#ff0000"/>
<rect x="1134" y="383" width="3" height="3" fill="#ff8000"/>
<rect x="1137" y="383" width="3" height="3" fill="#ffcc00"/>
<rect x="1140" y="383" width="6" height="3" fill="#ffff00"/>
<rect x="1146" y="383" width="12" height="3" fill="#00ff00"/>
<rect x="1158" y="383" width="135" height="3" fill="#0000ff"/>
<rect x="1293" y="383" width="6" height="3" fill="#00ff00"/>
<rect x="1299" y="383" width="3" height="3" fill="#ffff00"/>
<rect x="1302" y="383" width="6" height="3" fill="#ff8000"/>
<rect x="1308" y="383" width="9" height="3" fill="#ff0000"/>
<rect x="1104" y="386" width="27" height="3" fill="#ff0000"/>
<rect x="1131" y="386" width="3" height="3" fill="#ff8000"/>
<rect x="1134" y="386" width="3" height="3" fill="#ffcc00"/>
<rect x="1137" y="386" width="6" height="3" fill="#ffff00"/>
<rect x="1143" y="386" width="12" height="3" fill="#00ff00"/>
<rect x="1155" y="386" width="135" height="3" fill="#0000ff"/>
<rect x="1290" y="386" width="6" height="3" fill="#00ff00"/>
<rect x="1296" y="386" width="3" height="3" fill="#ffff00"/>
<rect x="1299" y="386" width="6" height="3" fill="#ff8000"/>
<rect x="1305" y="386" width="9" height="3" fill="#ff0000"/>
<rect x="1101" y="389" width="27" height="3" fill="#ff0000"/>
<rect x="1128" y="389" width="3" height="3" fill="#ff8000"/>
<rect x="1131" y="389" width="3" height="3" fill="#ffcc00"/>
<rect x="1134" y="389" width="6" height="3" fill="#ffff00"/>
<rect x="1140" y="389" width="12" height="3" fill="#00ff00"/>
<rect x="1152" y="389" width="135" height="3" fill="#0000ff"/>
<rect x="1287" y="389" width="6" height="3" fill="#00ff00"/>
<rect x="1293" y="389" width="3" height="3" fill="#ffff00"/>
<rect x="1296" y="389" width="6" height="3" fill="#ff8000"/>
<rect x="1302" y="389" width="9" height="3" fill="#ff0000"/>
<rect x="1098" y="392" width="24" height="3" fill="#ff0000"/>
<rect x="1122" y="392" width="6" height="3" fill="#ff8000"/>
<rect x="1128" y="392" width="3" height="3" fill="#ffcc00"/>
<rect x="1131" y="392" width="6" height="3" fill="#ffff00"/>
<rect x="1137" y="392" width="12" height="3" fill="#00ff00"/>
<rect x="1149" y="392" width="135" height="3" fill="#0000ff"/>
<rect x="1284" y="392" width="6" height="3" fill="#00ff00"/>
<rect x="1290" y="392" width="3" height="3" fill="#ffff00"/>
<rect x="1293" y="392" width="6" height="3" fill="#ff8000"/>
<rect x="1299" y="392" width="9" height="3" fill="#ff0000"/>
<rect x="1095" y="395" width="24" height="3" fill="#ff0000"/>
<rect x="1119" y="395" width="6" height="3" fill="#ff8000"/>
<rect x="1125" y="395" width="3" height="3" fill="#ffcc00"/>
<rect x="1128" y="395" width="6" height="3" fill="#ffff00"/>
<rect x="1134" y="395" width="12" height="3" fill="#00ff00"/>
<rect x="1146" y="395" width="135" height="3" fill="#0000ff"/>
<rect x="1281" y="395" width="6" height="3" fill="#00ff00"/>
<rect x="1287" y="395" width="3" height="3" fill="#ffff00"/>
<rect x="1290" y="395" width="6" height="3" fill="#ff8000"/>
<rect x="1296" y="395" width="9" height="3" fill="#ff0000"/>
<rect x="1092" y="398" width="24" height="3" fill="#ff0000"/>
<rect x="1116" y="398" width="6" height="3" fill="#ff8000"/>
<rect x="1122" y="398" width="3" height="3" fill="#ffcc00"/>
<rect x="1125" y="398" width="3" height="3" fill="#ffff00"/>
<rect x="1128" y="398" width="12" height="3" fill="#00ff00"/>
<rect x="1140" y="398" width="138" height="3" fill="#0000ff"/>
<rect x="1278" y="398" width="6" height="3" fill="#00ff00"/>
<rect x="1284" y="398" width="3" height="3" fill="#ffff00"/>
<rect x="1287" y="398" width="6" height="3" fill="#ff8000"/>
<rect x="1293" y="398" width="9" height="3" fill="#ff0000"/>
<rect x="1089" y="401" width="24" height="3" fill="#ff0000"/>
<rect x="1113" y="401" width="6" height="3" fill="#ff8000"/>
<rect x="1119" y="401" width="3" height="3" fill="#ffcc00"/>
<rect x="1122" y="401" width="3" height="3" fill="#ffff00"/>
<rect x="1125" y="401" width="12" height="3" fill="#00ff00"/>
<rect x="1137" y="401" width="138" height="3" fill="#0000ff"/>
<rect x="1275" y="401" width="6" height="3" fill="#00ff00"/>
<rect x="1281" y="401" width="3" height="3" fill="#ffff00"/>
<rect x="1284" y="401" width="6" height="3" fill="#ff8000"/>
<rect x="1290" y="401" width="9" height="3" fill="#ff0000"/>
<rect x="1086" y="404" width="24" height="3" fill="#ff0000"/>
<rect x="1110" y="404" width="6" height="3" fill="#ff8000"/>
<rect x="1116" y="404" width="3" height="3" fill="#ffcc00"/>
<rect x="1119" y="404" width="3" height="3" fill="#ffff00"/>
<rect x="1122" y="404" width="12" height="3" fill="#00ff00"/>
<rect x="1134" y="404" width="138" height="3" fill="#0000ff"/>
<rect x="1272" y="404" width="6" height="3" fill="#00ff00"/>
<rect x="1278" y="404" width="3" height="3" fill="#ffff00"/>
<rect x="1281" y="404" width="6" height="3" fill="#ff8000"/>
<rect x="1287" y="404" width="9" height="3" fill="#ff0000"/>
<rect x="1083" y="407" width="24" height="3" fill="#ff0000"/>
<rect x="1107" y="407" width="6" height="3" fill="#ff8000"/>
<rect x="1113" y="407" width="6" height="3" fill="#ffff00"/>
<rect x="1119" y="407" width="12" height="3" fill="#00ff00"/>
<rect x="1131" y="407" width="138" height="3" fill="#0000ff"/>
<rect x="1269" y="407" width="6" height="3" fill="#00ff00"/>
<rect x="1275" y="407" width="3" height="3" fill="#ffff00"/>
<rect x="1278" y="407" width="6" height="3" fill="#ff8000"/>
<rect x="1284" y="407" width="9" height="3" fill="#ff0000"/>
<rect x="1080" y="410" width="24" height="3" fill="#ff0000"/>
<rect x="1104" y="410" width="6" height="3" fill="#ff8000"/>
<rect x="1110" y="410" width="6" height="3" fill="#ffff00"/>
<rect x="1116" y="410" width="12" height="3" fill="#00ff00"/>
<rect x="1128" y="410" width="138" height="3" fill="#0000ff"/>
<rect x="1266" y="410" width="6" height="3" fill="#00ff00"/>
<rect x="1272" y="410" width="3" height="3" fill="#ffff00"/>
<rect x="1275" y="410" width="6" height="3" fill="#ff8000"/>
<rect x="1281" y="410" width="9" height="3" fill="#ff0000"/>
<rect x="1077" y="413" width="24" height="3" fill="#ff0000"/>
<rect x="1101" y="413" width="3" height="3" fill="#ff8000"/>
<rect x="1104" y="413" width="3" height="3" fill="#ffcc00"/>
<rect x="1107" y="413" width="6" height="3" fill="#ffff00"/>
<rect x="1113" y="413" width="12" height="3" fill="#00ff00"/>
<rect x="1125" y="413" width="138" height="3" fill="#0000ff"/>
<rect x="1263" y="413" width="6" height="3" fill="#00ff00"/>
<rect x="1269" y="413" width="3" height="3" fill="#ffff00"/>
<rect x="1272" y="413" width="6" height="3" fill="#ff8000"/>
<rect x="1278" y="413" width="6" height="3" fill="#ff0000"/>
<rect x="1074" y="416" width="21" height="3" fill="#ff0000"/>
<rect x="1095" y="416" width="3" height="3" fill="#ff8000"/>
<rect x="1098" y="416" width="6" height="3" fill="#ffcc00"/>
<rect x="1104" y="416" width="6" height="3" fill="#ffff00"/>
<rect x="1110" y="416" width="12" height="3" fill="#00ff00"/>
<rect x="1122" y="416" width="138" height="3" fill="#0000ff"/>
<rect x="1260" y="416" width="6" height="3" fill="#00ff00"/>
<rect x="1266" y="416" width="3" height="3" fill="#ffff00"/>
<rect x="1269" y="416" width="3" height="3" fill="#ff8000"/>
<rect x="1272" y="416" width="9" height="3" fill="#ff0000"/>
<rect x="1071" y="419" width="18" height="3" fill="#ff0000"/>
<rect x="1089" y="419" width="6" height="3" fill="#ff8000"/>
<rect x="1095" y="419" width="3" height="3" fill="#ffcc00"/>
<rect x="1098" y="419" width="9" height="3" fill="#ffff00"/>
<rect x="1107" y="419" width="15" height="3" fill="#00ff00"/>
<rect x="1122" y="419" width="135" height="3" fill="#0000ff"/>
<rect x="1257" y="419" width="6" height="3" fill="#00ff00"/>
<rect x="1263" y="419" width="3" height="3" fill="#ffff00"/>
<rect x="1266" y="419" width="6" height="3" fill="#ff8000"/>
<rect x="1272" y="419" width="6" height="3" fill="#ff0000"/>
<rect x="1068" y="422" width="18" height="3" fill="#ff0000"/>
<rect x="1086" y="422" width="3" height="3" fill="#ff8000"/>
<rect x="1089" y="422" width="6" height="3" fill="#ffcc00"/>
<rect x="1095" y="422" width="9" height="3" fill="#ffff00"/>
<rect x="1104" y="422" width="15" height="3" fill="#00ff00"/>
<rect x="1119" y="422" width="135" height="3" fill="#0000ff"/>
<rect x="1254" y="422" width="6" height="3" fill="#00ff00"/>
<rect x="1260" y="422" width="3" height="3" fill="#ffff00"/>
<rect x="1263" y="422" width="3" height="3" fill="#ff8000"/>
<rect x="1266" y="422" width="9" height="3" fill="#ff0000"/>
<rect x="1062" y="425" width="18" height="3" fill="#ff0000"/>
<rect x="1080" y="425" width="6" height="3" fill="#ff8000"/>
<rect x="1086" y="425" width="6" height="3" fill="#ffcc00"/>
<rect x="1092" y="425" width="9" height="3" fill="#ffff00"/>
<rect x="1101" y="425" width="15" height="3" fill="#00ff00"/>
<rect x="1116" y="425" width="135" height="3" fill="#0000ff"/>
<rect x="1251" y="425" width="6" height="3" fill="#00ff00"/>
<rect x="1257" y="425" width="3" height="3" fill="#ffff00"/>
<rect x="1260" y="425" width="6" height="3" fill="#ff8000"/>
<rect x="1266" y="425" width="6" height="3" fill="#ff0000"/>
<rect x="1059" y="428" width="18" height="3" fill="#ff0000"/>
<rect x="1077" y="428" width="3" height="3" fill="#ff8000"/>
<rect x="1080" y="428" width="6" height="3" fill="#ffcc00"/>
<rect x="1086" y="428" width="12" height="3" fill="#ffff00"/>
<rect x="1098" y="428" width="18" height="3" fill="#00ff00"/>
<rect x="1116" y="428" width="132" height="3" fill="#0000ff"/>
<rect x="1248" y="428" width="6" height="3" fill="#00ff00"/>
<rect x="1254" y="428" width="3" height="3" fill="#ffcc00"/>
<rect x="1257" y="428" width="3" height="3" fill="#ff8000"/>
<rect x="1260" y="428" width="9" height="3" fill="#ff0000"/>
<rect x="1056" y="431" width="15" height="3" fill="#ff0000"/>
<rect x="1071" y="431" width="6" height="3" fill="#ff8000"/>
<rect x="1077" y="431" width="6" height="3" fill="#ffcc00"/>
<rect x="1083" y="431" width="12" height="3" fill="#ffff00"/>
<rect x="1095" y="431" width="18" height="3" fill="#00ff00"/>
<rect x="1113" y="431" width="132" height="3" fill="#0000ff"/>
<rect x="1245" y="431" width="6" height="3" fill="#00ff00"/>
<rect x="1251" y="431" width="3" height="3" fill="#ffcc00"/>
<rect x="1254" y="431" width="6" height="3" fill="#ff8000"/>
<rect x="1260" y="431" width="6" height="3" fill="#ff0000"/>
<rect x="1053" y="434" width="12" height="3" fill="#ff0000"/>
<rect x="1065" y="434" width="6" height="3" fill="#ff8000"/>
<rect x="1071" y="434" width="6" height="3" fill="#ffcc00"/>
<rect x="1077" y="434" width="15" height="3" fill="#ffff00"/>
<rect x="1092" y="434" width="18" height="3" fill="#00ff00"/>
<rect x="1110" y="434" width="132" height="3" fill="#0000ff"/>
<rect x="1242" y="434" width="6" height="3" fill="#00ff00"/>
<rect x="1248" y="434" width="3" height="3" fill="#ffcc00"/>
<rect x="1251" y="434" width="3" height="3" fill="#ff8000"/>
<rect x="1254" y="434" width="9" height="3" fill="#ff0000"/>
<rect x="1050" y="437" width="12" height="3" fill="#ff0000"/>
<rect x="1062" y="437" width="6" height="3" fill="#ff8000"/>
<rect x="1068" y="437" width="6" height="3" fill="#ffcc00"/>
<rect x="1074" y="437" width="15" height="3" fill="#ffff00"/>
<rect x="1089" y="437" width="18" height="3" fill="#00ff00"/>
<rect x="1107" y="437" width="132" height="3" fill="#0000ff"/>
<rect x="1239" y="437" width="6" height="3" fill="#00ff00"/>
<rect x="1245" y="437" width="3" height="3" fill="#ffcc00"/>
<rect x="1248" y="437" width="6" height="3" fill="#ff8000"/>
<rect x="1254" y="437" width="6" height="3" fill="#ff0000"/>
<rect x="1047" y="440" width="9" height="3" fill="#ff0000"/>
<rect x="1056" y="440" width="6" height="3" fill="#ff8000"/>
<rect x="1062" y="440" width="9" height="3" fill="#ffcc00"/>
<rect x="1071" y="440" width="15" height="3" fill="#ffff00"/>
<rect x="1086" y="440" width="21" height="3" fill="#00ff00"/>
<rect x="1107" y="440" width="129" height="3" fill="#0000ff"/>
<rect x="1236" y="440" width="6" height="3" fill="#00ff00"/>
<rect x="1242" y="440" width="3" height="3" fill="#ffcc00"/>
<rect x="1245" y="440" width="3" height="3" fill="#ff8000"/>
<rect x="1248" y="440" width="9" height="3" fill="#ff0000"/>
<rect x="1044" y="443" width="9" height="3" fill="#ff0000"/>
<rect x="1053" y="443" width="6" height="3" fill="#ff8000"/>
<rect x="1059" y="443" width="6" height="3" fill="#ffcc00"/>
<rect x="1065" y="443" width="18" height="3" fill="#ffff00"/>
<rect x="1083" y="443" width="21" height="3" fill="#00ff00"/>
<rect x="1104" y="443" width="129" height="3" fill="#0000ff"/>
<rect x="1233" y="443" width="6" height="3" fill="#00ff00"/>
<rect x="1239" y="443" width="3" height="3" fill="#ffcc00"/>
<rect x="1242" y="443" width="6" height="3" fill="#ff8000"/>
<rect x="1248" y="443" width="6" height="3" fill="#ff0000"/>
<rect x="1041" y="446" width="6" height="3" fill="#ff0000"/>
<rect x="1047" y="446" width="6" height="3" fill="#ff8000"/>
<rect x="1053" y="446" width="9" height="3" fill="#ffcc00"/>
<rect x="1062" y="446" width="18" height="3" fill="#ffff00"/>
<rect x="1080" y="446" width="21" height="3" fill="#00ff00"/>
<rect x="1101" y="446" width="129" height="3" fill="#0000ff"/>
<rect x="1230" y="446" width="6" height="3" fill="#00ff00"/>
<rect x="1236" y="446" width="3" height="3" fill="#ffcc00"/>
<rect x="1239" y="446" width="3" height="3" fill="#ff8000"/>
<rect x="1242" y="446" width="9" height="3" fill="#ff0000"/>
<rect x="1038" y="449" width="3" height="3" fill="#ff0000"/>
<rect x="1041" y="449" width="6" height="3" fill="#ff8000"/>
<rect x="1047" y="449" width="12" height="3" fill="#ffcc00"/>
<rect x="1059" y="449" width="18" height="3" fill="#ffff00"/>
<rect x="1077" y="449" width="24" height="3" fill="#00ff00"/>
<rect x="1101" y="449" width="126" height="3" fill="#0000ff"/>
<rect x="1227" y="449" width="6" height="3" fill="#00ff00"/>
<rect x="1233" y="449" width="3" height="3" fill="#ffcc00"/>
<rect x="1236" y="449" width="6" height="3" fill="#ff8000"/>
<rect x="1242" y="449" width="6" height="3" fill="#ff0000"/>
<rect x="1035" y="452" width="3" height="3" fill="#ff0000"/>
<rect x="1038" y="452" width="6" height="3" fill="#ff8000"/>
<rect x="1044" y="452" width="9" height="3" fill="#ffcc00"/>
<rect x="1053" y="452" width="18" height="3" fill="#ffff00"/>
<rect x="1071" y="452" width="27" height="3" fill="#00ff00"/>
<rect x="1098" y="452" width="126" height="3" fill="#0000ff"/>
<rect x="1224" y="452" width="3" height="3" fill="#00ff00"/>
<rect x="1227" y="452" width="3" height="3" fill="#ffff00"/>
<rect x="1230" y="452" width="3" height="3" fill="#ffcc00"/>
<rect x="1233" y="452" width="3" height="3" fill="#ff8000"/>
<rect x="1236" y="452" width="9" height="3" fill="#ff0000"/>
<rect x="1032" y="455" width="3" height="3" fill="#ff0000"/>
<rect x="1035" y="455" width="6" height="3" fill="#ff8000"/>
<rect x="1041" y="455" width="12" height="3" fill="#ffcc00"/>
<rect x="1053" y="455" width="15" height="3" fill="#ffff00"/>
<rect x="1068" y="455" width="27" height="3" fill="#00ff00"/>
<rect x="1095" y="455" width="126" height="3" fill="#0000ff"/>
<rect x="1221" y="455" width="3" height="3" fill="#00ff00"/>
<rect x="1224" y="455" width="3" height="3" fill="#ffff00"/>
<rect x="1227" y="455" width="3" height="3" fill="#ffcc00"/>
<rect x="1230" y="455" width="3" height="3" fill="#ff8000"/>
<rect x="1233" y="455" width="9" height="3" fill="#ff0000"/>
<rect x="1029" y="458" width="3" height="3" fill="#ff0000"/>
<rect x="1032" y="458" width="9" height="3" fill="#ff8000"/>
<rect x="1041" y="458" width="9" height="3" fill="#ffcc00"/>
<rect x="1050" y="458" width="15" height="3" fill="#ffff00"/>
<rect x="1065" y="458" width="27" height="3" fill="#00ff00"/>
<rect x="1092" y="458" width="126" height="3" fill="#0000ff"/>
<rect x="1218" y="458" width="3" height="3" fill="#00ff00"/>
<rect x="1221" y="458" width="3" height="3" fill="#ffff00"/>
<rect x="1224" y="458" width="6" height="3" fill="#ff8000"/>
<rect x="1230" y="458" width="9" height="3" fill="#ff0000"/>
<rect x="1026" y="461" width="6" height="3" fill="#ff0000"/>
<rect x="1032" y="461" width="6" height="3" fill="#ff8000"/>
<rect x="1038" y="461" width="9" height="3" fill="#ffcc00"/>
<rect x="1047" y="461" width="15" height="3" fill="#ffff00"/>
<rect x="1062" y="461" width="30" height="3" fill="#00ff00"/>
<rect x="1092" y="461" width="120" height="3" fill="#0000ff"/>
<rect x="1212" y="461" width="6" height="3" fill="#00ff00"/>
<rect x="1218" y="461" width="3" height="3" fill="#ffff00"/>
<rect x="1221" y="461" width="6" height="3" fill="#ff8000"/>
<rect x="1227" y="461" width="9" height="3" fill="#ff0000"/>
<rect x="1023" y="464" width="6" height="3" fill="#ff0000"/>
<rect x="1029" y="464" width="6" height="3" fill="#ff8000"/>
<rect x="1035" y="464" width="9" height="3" fill="#ffcc00"/>
<rect x="1044" y="464" width="15" height="3" fill="#ffff00"/>
<rect x="1059" y="464" width="30" height="3" fill="#00ff00"/>
<rect x="1089" y="464" width="120" height="3" fill="#0000ff"/>
<rect x="1209" y="464" width="6" height="3" fill="#00ff00"/>
<rect x="1215" y="464" width="3" height="3" fill="#ffff00"/>
<rect x="1218" y="464" width="6" height="3" fill="#ff8000"/>
<rect x="1224" y="464" width="9" height="3" fill="#ff0000"/>
<rect x="1020" y="467" width="6" height="3" fill="#ff0000"/>
<rect x="1026" y="467" width="6" height="3" fill="#ff8000"/>
<rect x="1032" y="467" width="9" height="3" fill="#ffcc00"/>
<rect x="1041" y="467" width="15" height="3" fill="#ffff00"/>
<rect x="1056" y="467" width="30" height="3" fill="#00ff00"/>
<rect x="1086" y="467" width="120" height="3" fill="#0000ff"/>
<rect x="1206" y="467" width="6" height="3" fill="#00ff00"/>
<rect x="1212" y="467" width="3" height="3" fill="#ffff00"/>
<rect x="1215" y="467" width="6" height="3" fill="#ff8000"/>
<rect x="1221" y="467" width="6" height="3" fill="#ff0000"/>
<rect x="1017" y="470" width="6" height="3" fill="#ff0000"/>
<rect x="1023" y="470" width="6" height="3" fill="#ff8000"/>
<rect x="1029" y="470" width="9" height="3" fill="#ffcc00"/>
<rect x="1038" y="470" width="15" height="3" fill="#ffff00"/>
<rect x="1053" y="470" width="30" height="3" fill="#00ff00"/>
<rect x="1083" y="470" width="120" height="3" fill="#0000ff"/>
<rect x="1203" y="470" width="6" height="3" fill="#00ff00"/>
<rect x="1209" y="470" width="3" height="3" fill="#ffcc00"/>
<rect x="1212" y="470" width="6" height="3" fill="#ff8000"/>
<rect x="1218" y="470" width="6" height="3" fill="#ff0000"/>
<rect x="1014" y="473" width="6" height="3" fill="#ff0000"/>
<rect x="1020" y="473" width="6" height="3" fill="#ff8000"/>
<rect x="1026" y="473" width="9" height="3" fill="#ffcc00"/>
<rect x="1035" y="473" width="15" height="3" fill="#ffff00"/>
<rect x="1050" y="473" width="33" height="3" fill="#00ff00"/>
<rect x="1083" y="473" width="117" height="3" fill="#0000ff"/>
<rect x="1200" y="473" width="6" height="3" fill="#00ff00"/>
<rect x="1206" y="473" width="3" height="3" fill="#ffcc00"/>
<rect x="1209" y="473" width="6" height="3" fill="#ff8000"/>
<rect x="1215" y="473" width="6" height="3" fill="#ff0000"/>
<rect x="1011" y="476" width="6" height="3" fill="#ff0000"/>
<rect x="1017" y="476" width="6" height="3" fill="#ff8000"/>
<rect x="1023" y="476" width="9" height="3" fill="#ffcc00"/>
<rect x="1032" y="476" width="15" height="3" fill="#ffff00"/>
<rect x="1047" y="476" width="33" height="3" fill="#00ff00"/>
<rect x="1080" y="476" width="117" height="3" fill="#0000ff"/>
<rect x="1197" y="476" width="3" height="3" fill="#00ff00"/>
<rect x="1200" y="476" width="3" height="3" fill="#ffff00"/>
<rect x="1203" y="476" width="3" height="3" fill="#ffcc00"/>
<rect x="1206" y="476" width="3" height="3" fill="#ff8000"/>
<rect x="1209" y="476" width="9" height="3" fill="#ff0000"/>
<rect x="1008" y="479" width="6" height="3" fill="#ff0000"/>
<rect x="1014" y="479" width="9" height="3" fill="#ff8000"/>
<rect x="1023" y="479" width="6" height="3" fill="#ffcc00"/>
<rect x="1029" y="479" width="15" height="3" fill="#ffff00"/>
<rect x="1044" y="479" width="33" height="3" fill="#00ff00"/>
<rect x="1077" y="479" width="117" height="3" fill="#0000ff"/>
<rect x="1194" y="479" width="3" height="3" fill="#00ff00"/>
<rect x="1197" y="479" width="3" height="3" fill="#ffff00"/>
<rect x="1200" y="479" width="6" height="3" fill="#ff8000"/>
<rect x="1206" y="479" width="9" height="3" fill="#ff0000"/>
<rect x="1005" y="482" width="6" height="3" fill="#ff0000"/>
<rect x="1011" y="482" width="9" height="3" fill="#ff8000"/>
<rect x="1020" y="482" width="6" height="3" fill="#ffcc00"/>
<rect x="1026" y="482" width="15" height="3" fill="#ffff00"/>
<rect x="1041" y="482" width="33" height="3" fill="#00ff00"/>
<rect x="1074" y="482" width="117" height="3" fill="#0000ff"/>
<rect x="1191" y="482" width="3" height="3" fill="#00ff00"/>
<rect x="1194" y="482" width="3" height="3" fill="#ffff00"/>
<rect x="1197" y="482" width="6" height="3" fill="#ff8000"/>
<rect x="1203" y="482" width="9" height="3" fill="#ff0000"/>
<rect x="1002" y="485" width="6" height="3" fill="#ff0000"/>
<rect x="1008" y="485" width="9" height="3" fill="#ff8000"/>
<rect x="1017" y="485" width="6" height="3" fill="#ffcc00"/>
<rect x="1023" y="485" width="15" height="3" fill="#ffff00"/>
<rect x="1038" y="485" width="33" height="3" fill="#00ff00"/>
<rect x="1071" y="485" width="117" height="3" fill="#0000ff"/>
<rect x="1188" y="485" width="3" height="3" fill="#00ff00"/>
<rect x="1191" y="485" width="3" height="3" fill="#ffff00"/>
<rect x="1194" y="485" width="6" height="3" fill="#ff8000"/>
<rect x="1200" y="485" width="9" height="3" fill="#ff0000"/>
<rect x="999" y="488" width="6" height="3" fill="#ff0000"/>
<rect x="1005" y="488" width="9" height="3" fill="#ff8000"/>
<rect x="1014" y="488" width="6" height="3" fill="#ffcc00"/>
<rect x="1020" y="488" width="15" height="3" fill="#ffff00"/>
<rect x="1035" y="488" width="36" height="3" fill="#00ff00"/>
<rect x="1071" y="488" width="114" height="3" fill="#0000ff"/>
<rect x="1185" y="488" width="3" height="3" fill="#00ff00"/>
<rect x="1188" y="488" width="3" height="3" fill="#ffff00"/>
<rect x="1191" y="488" width="6" height="3" fill="#ff8000"/>
<rect x="1197" y="488" width="9" height="3" fill="#ff0000"/>
<rect x="996" y="491" width="6" height="3" fill="#ff0000"/>
<rect x="1002" y="491" width="9" height="3" fill="#ff8000"/>
<rect x="1011" y="491" width="6" height="3" fill="#ffcc00"/>
<rect x="1017" y="491" width="15" height="3" fill="#ffff00"/>
<rect x="1032" y="491" width="36" height="3" fill="#00ff00"/>
<rect x="1068" y="491" width="114" height="3" fill="#0000ff"/>
<rect x="1182" y="491" width="3" height="3" fill="#00ff00"/>
<rect x="1185" y="491" width="3" height="3" fill="#ffcc00"/>
<rect x="1188" y="491" width="6" height="3" fill="#ff8000"/>
<rect x="1194" y="491" width="9" height="3" fill="#ff0000"/>
<rect x="993" y="494" width="6" height="3" fill="#ff0000"/>
<rect x="999" y="494" width="9" height="3" fill="#ff8000"/>
<rect x="1008" y="494" width="6" height="3" fill="#ffcc00"/>
<rect x="1014" y="494" width="15" height="3" fill="#ffff00"/>
<rect x="1029" y="494" width="36" height="3" fill="#00ff00"/>
<rect x="1065" y="494" width="114" height="3" fill="#0000ff"/>
<rect x="1179" y="494" width="3" height="3" fill="#00ff00"/>
<rect x="1182" y="494" width="3" height="3" fill="#ffff00"/>
<rect x="1185" y="494" width="6" height="3" fill="#ff8000"/>
<rect x="1191" y="494" width="9" height="3" fill="#ff0000"/>
<rect x="990" y="497" width="6" height="3" fill="#ff0000"/>
<rect x="996" y="497" width="9" height="3" fill="#ff8000"/>
<rect x="1005" y="497" width="6" height="3" fill="#ffcc00"/>
<rect x="1011" y="497" width="15" height="3" fill="#ffff00"/>
<rect x="1026" y="497" width="36" height="3" fill="#00ff00"/>
<rect x="1062" y="497" width="114" height="3" fill="#0000ff"/>
<rect x="1176" y="497" width="3" height="3" fill="#00ff00"/>
<rect x="1179" y="497" width="3" height="3" fill="#ffff00"/>
<rect x="1182" y="497" width="6" height="3" fill="#ff8000"/>
<rect x="1188" y="497" width="9" height="3" fill="#ff0000"/>
<rect x="987" y="500" width="6" height="3" fill="#ff0000"/>
<rect x="993" y="500" width="9" height="3" fill="#ff8000"/>
<rect x="1002" y="500" width="6" height="3" fill="#ffcc00"/>
<rect x="1008" y="500" width="15" height="3" fill="#ffff00"/>
<rect x="1023" y="500" width="33" height="3" fill="#00ff00"/>
<rect x="1056" y="500" width="117" height="3" fill="#0000ff"/>
<rect x="1173" y="500" width="3" height="3" fill="#00ff00"/>
<rect x="1176" y="500" width="3" height="3" fill="#ffff00"/>
<rect x="1179" y="500" width="6" height="3" fill="#ff8000"/>
<rect x="1185" y="500" width="9" height="3" fill="#ff0000"/>
<rect x="984" y="503" width="6" height="3" fill="#ff0000"/>
<rect x="990" y="503" width="9" height="3" fill="#ff8000"/>
<rect x="999" y="503" width="6" height="3" fill="#ffcc00"/>
<rect x="1005" y="503" width="15" height="3" fill="#ffff00"/>
<rect x="1020" y="503" width="33" height="3" fill="#00ff00"/>
<rect x="1053" y="503" width="117" height="3" fill="#0000ff"/>
<rect x="1170" y="503" width="3" height="3" fill="#00ff00"/>
<rect x="1173" y="503" width="3" height="3" fill="#ffff00"/>
<rect x="1176" y="503" width="3" height="3" fill="#ffcc00"/>
<rect x="1179" y="503" width="6" height="3" fill="#ff8000"/>
<rect x="1185" y="503" width="9" height="3" fill="#ff0000"/>
<rect x="981" y="506" width="6" height="3" fill="#ff0000"/>
<rect x="987" y="506" width="9" height="3" fill="#ff8000"/>
<rect x="996" y="506" width="6" height="3" fill="#ffcc00"/>
<rect x="1002" y="506" width="15" height="3" fill="#ffff00"/>
<rect x="1017" y="506" width="33" height="3" fill="#00ff00"/>
<rect x="1050" y="506" width="117" height="3" fill="#0000ff"/>
<rect x="1167" y="506" width="3" height="3" fill="#00ff00"/>
<rect x="1170" y="506" width="3" height="3" fill="#ffff00"/>
<rect x="1173" y="506" width="3" height="3" fill="#ffcc00"/>
<rect x="1176" y="506" width="6" height="3" fill="#ff8000"/>
<rect x="1182" y="506" width="9" height="3" fill="#ff0000"/>
<rect x="978" y="509" width="6" height="3" fill="#ff0000"/>
<rect x="984" y="509" width="9" height="3" fill="#ff8000"/>
<rect x="993" y="509" width="6" height="3" fill="#ffcc00"/>
<rect x="999" y="509" width="15" height="3" fill="#ffff00"/>
<rect x="1014" y="509" width="33" height="3" fill="#00ff00"/>
<rect x="1047" y="509" width="117" height="3" fill="#0000ff"/>
<rect x="1164" y="509" width="6" height="3" fill="#00ff00"/>
<rect x="1170" y="509" width="3" height="3" fill="#ffcc00"/>
<rect x="1173" y="509" width="6" height="3" fill="#ff8000"/>
<rect x="1179" y="509" width="9" height="3" fill="#ff0000"/>
<rect x="975" y="512" width="6" height="3" fill="#ff0000"/>
<rect x="981" y="512" width="9" height="3" fill="#ff8000"/>
<rect x="990" y="512" width="6" height="3" fill="#ffcc00"/>
<rect x="996" y="512" width="15" height="3" fill="#ffff00"/>
<rect x="1011" y="512" width="33" height="3" fill="#00ff00"/>
<rect x="1044" y="512" width="117" height="3" fill="#0000ff"/>
<rect x="1161" y="512" width="6" height="3" fill="#00ff00"/>
<rect x="1167" y="512" width="3" height="3" fill="#ffff00"/>
<rect x="1170" y="512" width="6" height="3" fill="#ff8000"/>
<rect x="1176" y="512" width="9" height="3" fill="#ff0000"/>
<rect x="972" y="515" width="6" height="3" fill="#ff0000"/>
<rect x="978" y="515" width="9" height="3" fill="#ff8000"/>
<rect x="987" y="515" width="6" height="3" fill="#ffcc00"/>
<rect x="993" y="515" width="15" height="3" fill="#ffff00"/>
<rect x="1008" y="515" width="33" height="3" fill="#00ff00"/>
<rect x="1041" y="515" width="117" height="3" fill="#0000ff"/>
<rect x="1158" y="515" width="6" height="3" fill="#00ff00"/>
<rect x="1164" y="515" width="3" height="3" fill="#ffff00"/>
<rect x="1167" y="515" width="6" height="3" fill="#ff8000"/>
<rect x="1173" y="515" width="12" height="3" fill="#ff0000"/>
<rect x="969" y="518" width="6" height="3" fill="#ff0000"/>
<rect x="975" y="518" width="9" height="3" fill="#ff8000"/>
<rect x="984" y="518" width="6" height="3" fill="#ffcc00"/>
<rect x="990" y="518" width="15" height="3" fill="#ffff00"/>
<rect x="1005" y="518" width="33" height="3" fill="#00ff00"/>
<rect x="1038" y="518" width="117" height="3" fill="#0000ff"/>
<rect x="1155" y="518" width="6" height="3" fill="#00ff00"/>
<rect x="1161" y="518" width="3" height="3" fill="#ffff00"/>
<rect x="1164" y="518" width="3" height="3" fill="#ffcc00"/>
<rect x="1167" y="518" width="6" height="3" fill="#ff8000"/>
<rect x="1173" y="518" width="9" height="3" fill="#ff0000"/>
<rect x="966" y="521" width="6" height="3" fill="#ff0000"/>
<rect x="972" y="521" width="9" height="3" fill="#ff8000"/>
<rect x="981" y="521" width="6" height="3" fill="#ffcc00"/>
<rect x="987" y="521" width="15" height="3" fill="#ffff00"/>
<rect x="1002" y="521" width="33" height="3" fill="#00ff00"/>
<rect x="1035" y="521" width="117" height="3" fill="#0000ff"/>
<rect x="1152" y="521" width="6" height="3" fill="#00ff00"/>
<rect x="1158" y="521" width="3" height="3" fill="#ffff00"/>
<rect x="1161" y="521" width="3" height="3" fill="#ffcc00"/>
<rect x="1164" y="521" width="6" height="3" fill="#ff8000"/>
<rect x="1170" y="521" width="9" height="3" fill="#ff0000"/>
<rect x="963" y="524" width="6" height="3" fill="#ff0000"/>
<rect x="969" y="524" width="9" height="3" fill="#ff8000"/>
<rect x="978" y="524" width="6" height="3" fill="#ffcc00"/>
<rect x="984" y="524" width="15" height="3" fill="#ffff00"/>
<rect x="999" y="524" width="30" height="3" fill="#00ff00"/>
<rect x="1029" y="524" width="120" height="3" fill="#0000ff"/>
<rect x="1149" y="524" width="6" height="3" fill="#00ff00"/>
<rect x="1155" y="524" width="3" height="3" fill="#ffff00"/>
<rect x="1158" y="524" width="3" height="3" fill="#ffcc00"/>
<rect x="1161" y="524" width="6" height="3" fill="#ff8000"/>
<rect x="1167" y="524" width="9" height="3" fill="#ff0000"/>
<rect x="960" y="527" width="6" height="3" fill="#ff0000"/>
<rect x="966" y="527" width="9" height="3" fill="#ff8000"/>
<rect x="975" y="527" width="6" height="3" fill="#ffcc00"/>
<rect x="981" y="527" width="15" height="3" fill="#ffff00"/>
<rect x="996" y="527" width="30" height="3" fill="#00ff00"/>
<rect x="1026" y="527" width="120" height="3" fill="#0000ff"/>
<rect x="1146" y="527" width="6" height="3" fill="#00ff00"/>
<rect x="1152" y="527" width="6" height="3" fill="#ffff00"/>
<rect x="1158" y="527" width="6" height="3" fill="#ff8000"/>
<rect x="1164" y="527" width="12" height="3" fill="#ff0000"/>
<rect x="957" y="530" width="6" height="3" fill="#ff0000"/>
<rect x="963" y="530" width="9" height="3" fill="#ff8000"/>
<rect x="972" y="530" width="6" height="3" fill="#ffcc00"/>
<rect x="978" y="530" width="15" height="3" fill="#ffff00"/>
<rect x="993" y="530" width="30" height="3" fill="#00ff00"/>
<rect x="1023" y="530" width="120" height="3" fill="#0000ff"/>
<rect x="1143" y="530" width="6" height="3" fill="#00ff00"/>
<rect x="1149" y="530" width="6" height="3" fill="#ffff00"/>
<rect x="1155" y="530" width="6" height="3" fill="#ff8000"/>
<rect x="1161" y="530" width="12" height="3" fill="#ff0000"/>
<rect x="951" y="533" width="9" height="3" fill="#ff0000"/>
<rect x="960" y="533" width="9" height="3" fill="#ff8000"/>
<rect x="969" y="533" width="6" height="3" fill="#ffcc00"/>
<rect x="975" y="533" width="12" height="3" fill="#ffff00"/>
<rect x="987" y="533" width="33" height="3" fill="#00ff00"/>
<rect x="1020" y="533" width="120" height="3" fill="#0000ff"/>
<rect x="1140" y="533" width="6" height="3" fill="#00ff00"/>
<rect x="1146" y="533" width="6" height="3" fill="#ffff00"/>
<rect x="1152" y="533" width="6" height="3" fill="#ff8000"/>
<rect x="1158" y="533" width="12" height="3" fill="#ff0000"/>
<rect x="948" y="536" width="9" height="3" fill="#ff0000"/>
<rect x="957" y="536" width="9" height="3" fill="#ff8000"/>
<rect x="966" y="536" width="6" height="3" fill="#ffcc00"/>
<rect x="972" y="536" width="12" height="3" fill="#ffff00"/>
<rect x="984" y="536" width="33" height="3" fill="#00ff00"/>
<rect x="1017" y="536" width="120" height="3" fill="#0000ff"/>
<rect x="1137" y="536" width="6" height="3" fill="#00ff00"/>
<rect x="1143" y="536" width="3" height="3" fill="#ffff00"/>
<rect x="1146" y="536" width="3" height="3" fill="#ffcc00"/>
<rect x="1149" y="536" width="6" height="3" fill="#ff8000"/>
<rect x="1155" y="536" width="9" height="3" fill="#ff0000"/>
<rect x="945" y="539" width="9" height="3" fill="#ff0000"/>
<rect x="954" y="539" width="9" height="3" fill="#ff8000"/>
<rect x="963" y="539" width="6" height="3" fill="#ffcc00"/>
<rect x="969" y="539" width="12" height="3" fill="#ffff00"/>
<rect x="981" y="539" width="33" height="3" fill="#00ff00"/>
<rect x="1014" y="539" width="120" height="3" fill="#0000ff"/>
<rect x="1134" y="539" width="6" height="3" fill="#00ff00"/>
<rect x="1140" y="539" width="3" height="3" fill="#ffff00"/>
<rect x="1143" y="539" width="3" height="3" fill="#ffcc00"/>
<rect x="1146" y="539" width="6" height="3" fill="#ff8000"/>
<rect x="1152" y="539" width="9" height="3" fill="#ff0000"/>
<rect x="942" y="542" width="6" height="3" fill="#ff0000"/>
<rect x="948" y="542" width="9" height="3" fill="#ff8000"/>
<rect x="957" y="542" width="9" height="3" fill="#ffcc00"/>
<rect x="966" y="542" width="12" height="3" fill="#ffff00"/>
<rect x="978" y="542" width="33" height="3" fill="#00ff00"/>
<rect x="1011" y="542" width="120" height="3" fill="#0000ff"/>
<rect x="1131" y="542" width="6" height="3" fill="#00ff00"/>
<rect x="1137" y="542" width="3" height="3" fill="#ffff00"/>
<rect x="1140" y="542" width="3" height="3" fill="#ffcc00"/>
<rect x="1143" y="542" width="6" height="3" fill="#ff8000"/>
<rect x="1149" y="542" width="9" height="3" fill="#ff0000"/>
<rect x="939" y="545" width="6" height="3" fill="#ff0000"/>
<rect x="945" y="545" width="9" height="3" fill="#ff8000"/>
<rect x="954" y="545" width="9" height="3" fill="#ffcc00"/>
<rect x="963" y="545" width="12" height="3" fill="#ffff00"/>
<rect x="975" y="545" width="33" height="3" fill="#00ff00"/>
<rect x="1008" y="545" width="120" height="3" fill="#0000ff"/>
<rect x="1128" y="545" width="6" height="3" fill="#00ff00"/>
<rect x="1134" y="545" width="3" height="3" fill="#ffff00"/>
<rect x="1137" y="545" width="3" height="3" fill="#ffcc00"/>
<rect x="1140" y="545" width="6" height="3" fill="#ff8000"/>
<rect x="1146" y="545" width="9" height="3" fill="#ff0000"/>
<rect x="936" y="548" width="6" height="3" fill="#ff0000"/>
<rect x="942" y="548" width="9" height="3" fill="#ff8000"/>
<rect x="951" y="548" width="9" height="3" fill="#ffcc00"/>
<rect x="960" y="548" width="12" height="3" fill="#ffff00"/>
<rect x="972" y="548" width="33" height="3" fill="#00ff00"/>
<rect x="1005" y="548" width="120" height="3" fill="#0000ff"/>
<rect x="1125" y="548" width="6" height="3" fill="#00ff00"/>
<rect x="1131" y="548" width="3" height="3" fill="#ffff00"/>
<rect x="1134" y="548" width="3" height="3" fill="#ffcc00"/>
<rect x="1137" y="548" width="6" height="3" fill="#ff8000"/>
<rect x="1143" y="548" width="9" height="3" fill="#ff0000"/>
<rect x="933" y="551" width="6" height="3" fill="#ff0000"/>
<rect x="939" y="551" width="9" height="3" fill="#ff8000"/>
<rect x="948" y="551" width="9" height="3" fill="#ffcc00"/>
<rect x="957" y="551" width="12" height="3" fill="#ffff00"/>
<rect x="969" y="551" width="36" height="3" fill="#00ff00"/>
<rect x="1005" y="551" width="114" height="3" fill="#0000ff"/>
<rect x="1119" y="551" width="6" height="3" fill="#00ff00"/>
<rect x="1125" y="551" width="6" height="3" fill="#ffff00"/>
<rect x="1131" y="551" width="6" height="3" fill="#ff8000"/>
<rect x="1137" y="551" width="9" height="3" fill="#ff0000"/>
<rect x="930" y="554" width="3" height="3" fill="#ff0000"/>
<rect x="933" y="554" width="12" height="3" fill="#ff8000"/>
<rect x="945" y="554" width="6" height="3" fill="#ffcc00"/>
<rect x="951" y="554" width="15" height="3" fill="#ffff00"/>
<rect x="966" y="554" width="36" height="3" fill="#00ff00"/>
<rect x="1002" y="554" width="114" height="3" fill="#0000ff"/>
<rect x="1116" y="554" width="6" height="3" fill="#00ff00"/>
<rect x="1122" y="554" width="6" height="3" fill="#ffff00"/>
<rect x="1128" y="554" width="6" height="3" fill="#ff8000"/>
<rect x="1134" y="554" width="9" height="3" fill="#ff0000"/>
<rect x="927" y="557" width="3" height="3" fill="#ff0000"/>
<rect x="930" y="557" width="12" height="3" fill="#ff8000"/>
<rect x="942" y="557" width="6" height="3" fill="#ffcc00"/>
<rect x="948" y="557" width="15" height="3" fill="#ffff00"/>
<rect x="963" y="557" width="36" height="3" fill="#00ff00"/>
<rect x="999" y="557" width="114" height="3" fill="#0000ff"/>
<rect x="1113" y="557" width="6" height="3" fill="#00ff00"/>
<rect x="1119" y="557" width="3" height="3" fill="#ffff00"/>
<rect x="1122" y="557" width="3" height="3" fill="#ffcc00"/>
<rect x="1125" y="557" width="6" height="3" fill="#ff8000"/>
<rect x="1131" y="557" width="9" height="3" fill="#ff0000"/>
<rect x="924" y="560" width="3" height="3" fill="#ff0000"/>
<rect x="927" y="560" width="12" height="3" fill="#ff8000"/>
<rect x="939" y="560" width="6" height="3" fill="#ffcc00"/>
<rect x="945" y="560" width="15" height="3" fill="#ffff00"/>
<rect x="960" y="560" width="36" height="3" fill="#00ff00"/>
<rect x="996" y="560" width="114" height="3" fill="#0000ff"/>
<rect x="1110" y="560" width="6" height="3" fill="#00ff00"/>
<rect x="1116" y="560" width="3" height="3" fill="#ffff00"/>
<rect x="1119" y="560" width="3" height="3" fill="#ffcc00"/>
<rect x="1122" y="560" width="6" height="3" fill="#ff8000"/>
<rect x="1128" y="560" width="9" height="3" fill="#ff0000"/>
<rect x="921" y="563" width="3" height="3" fill="#ff0000"/>
<rect x="924" y="563" width="12" height="3" fill="#ff8000"/>
<rect x="936" y="563" width="6" height="3" fill="#ffcc00"/>
<rect x="942" y="563" width="15" height="3" fill="#ffff00"/>
<rect x="957" y="563" width="36" height="3" fill="#00ff00"/>
<rect x="993" y="563" width="114" height="3" fill="#0000ff"/>
<rect x="1107" y="563" width="6" height="3" fill="#00ff00"/>
<rect x="1113" y="563" width="3" height="3" fill="#ffff00"/>
<rect x="1116" y="563" width="3" height="3" fill="#ffcc00"/>
<rect x="1119" y="563" width="6" height="3" fill="#ff8000"/>
<rect x="1125" y="563" width="6" height="3" fill="#ff0000"/>
<rect x="918" y="566" width="3" height="3" fill="#ff0000"/>
<rect x="921" y="566" width="12" height="3" fill="#ff8000"/>
<rect x="933" y="566" width="6" height="3" fill="#ffcc00"/>
<rect x="939" y="566" width="15" height="3" fill="#ffff00"/>
<rect x="954" y="566" width="36" height="3" fill="#00ff00"/>
<rect x="990" y="566" width="114" height="3" fill="#0000ff"/>
<rect x="1104" y="566" width="6" height="3" fill="#00ff00"/>
<rect x="1110" y="566" width="3" height="3" fill="#ffff00"/>
<rect x="1113" y="566" width="3" height="3" fill="#ffcc00"/>
<rect x="1116" y="566" width="6" height="3" fill="#ff8000"/>
<rect x="1122" y="566" width="6" height="3" fill="#ff0000"/>
<rect x="915" y="569" width="15" height="3" fill="#ff8000"/>
<rect x="930" y="569" width="6" height="3" fill="#ffcc00"/>
<rect x="936" y="569" width="15" height="3" fill="#ffff00"/>
<rect x="951" y="569" width="36" height="3" fill="#00ff00"/>
<rect x="987" y="569" width="114" height="3" fill="#0000ff"/>
<rect x="1101" y="569" width="6" height="3" fill="#00ff00"/>
<rect x="1107" y="569" width="3" height="3" fill="#ffff00"/>
<rect x="1110" y="569" width="3" height="3" fill="#ffcc00"/>
<rect x="1113" y="569" width="6" height="3" fill="#ff8000"/>
<rect x="1119" y="569" width="6" height="3" fill="#ff0000"/>
<rect x="909" y="572" width="3" height="3" fill="#ff0000"/>
<rect x="912" y="572" width="12" height="3" fill="#ff8000"/>
<rect x="924" y="572" width="9" height="3" fill="#ffcc00"/>
<rect x="933" y="572" width="12" height="3" fill="#ffff00"/>
<rect x="945" y="572" width="39" height="3" fill="#00ff00"/>
<rect x="984" y="572" width="111" height="3" fill="#0000ff"/>
<rect x="1095" y="572" width="6" height="3" fill="#00ff00"/>
<rect x="1101" y="572" width="6" height="3" fill="#ffff00"/>
<rect x="1107" y="572" width="9" height="3" fill="#ff8000"/>
<rect x="1116" y="572" width="6" height="3" fill="#ff0000"/>
<rect x="906" y="575" width="3" height="3" fill="#ff0000"/>
<rect x="909" y="575" width="15" height="3" fill="#ff8000"/>
<rect x="924" y="575" width="6" height="3" fill="#ffcc00"/>
<rect x="930" y="575" width="12" height="3" fill="#ffff00"/>
<rect x="942" y="575" width="39" height="3" fill="#00ff00"/>
<rect x="981" y="575" width="111" height="3" fill="#0000ff"/>
<rect x="1092" y="575" width="6" height="3" fill="#00ff00"/>
<rect x="1098" y="575" width="6" height="3" fill="#ffff00"/>
<rect x="1104" y="575" width="9" height="3" fill="#ff8000"/>
<rect x="1113" y="575" width="6" height="3" fill="#ff0000"/>
<rect x="903" y="578" width="3" height="3" fill="#ff0000"/>
<rect x="906" y="578" width="12" height="3" fill="#ff8000"/>
<rect x="918" y="578" width="9" height="3" fill="#ffcc00"/>
<rect x="927" y="578" width="12" height="3" fill="#ffff00"/>
<rect x="939" y="578" width="39" height="3" fill="#00ff00"/>
<rect x="978" y="578" width="111" height="3" fill="#0000ff"/>
<rect x="1089" y="578" width="6" height="3" fill="#00ff00"/>
<rect x="1095" y="578" width="6" height="3" fill="#ffff00"/>
<rect x="1101" y="578" width="9" height="3" fill="#ff8000"/>
<rect x="1110" y="578" width="6" height="3" fill="#ff0000"/>
<rect x="900" y="581" width="3" height="3" fill="#ff0000"/>
<rect x="903" y="581" width="15" height="3" fill="#ff8000"/>
<rect x="918" y="581" width="6" height="3" fill="#ffcc00"/>
<rect x="924" y="581" width="12" height="3" fill="#ffff00"/>
<rect x="936" y="581" width="39" height="3" fill="#00ff00"/>
<rect x="975" y="581" width="111" height="3" fill="#0000ff"/>
<rect x="1086" y="581" width="6" height="3" fill="#00ff00"/>
<rect x="1092" y="581" width="6" height="3" fill="#ffff00"/>
<rect x="1098" y="581" width="9" height="3" fill="#ff8000"/>
<rect x="1107" y="581" width="6" height="3" fill="#ff0000"/>
<rect x="897" y="584" width="3" height="3" fill="#ff0000"/>
<rect x="900" y="584" width="12" height="3" fill="#ff8000"/>
<rect x="912" y="584" width="9" height="3" fill="#ffcc00"/>
<rect x="921" y="584" width="12" height="3" fill="#ffff00"/>
<rect x="933" y="584" width="42" height="3" fill="#00ff00"/>
<rect x="975" y="584" width="108" height="3" fill="#0000ff"/>
<rect x="1083" y="584" width="6" height="3" fill="#00ff00"/>
<rect x="1089" y="584" width="6" height="3" fill="#ffff00"/>
<rect x="1095" y="584" width="9" height="3" fill="#ff8000"/>
<rect x="1104" y="584" width="6" height="3" fill="#ff0000"/>
<rect x="894" y="587" width="3" height="3" fill="#ff0000"/>
<rect x="897" y="587" width="15" height="3" fill="#ff8000"/>
<rect x="912" y="587" width="6" height="3" fill="#ffcc00"/>
<rect x="918" y="587" width="12" height="3" fill="#ffff00"/>
<rect x="930" y="587" width="42" height="3" fill="#00ff00"/>
<rect x="972" y="587" width="108" height="3" fill="#0000ff"/>
<rect x="1080" y="587" width="6" height="3" fill="#00ff00"/>
<rect x="1086" y="587" width="3" height="3" fill="#ffff00"/>
<rect x="1089" y="587" width="3" height="3" fill="#ffcc00"/>
<rect x="1092" y="587" width="9" height="3" fill="#ff8000"/>
<rect x="1101" y="587" width="6" height="3" fill="#ff0000"/>
<rect x="891" y="590" width="3" height="3" fill="#ff0000"/>
<rect x="894" y="590" width="12" height="3" fill="#ff8000"/>
<rect x="906" y="590" width="9" height="3" fill="#ffcc00"/>
<rect x="915" y="590" width="12" height="3" fill="#ffff00"/>
<rect x="927" y="590" width="42" height="3" fill="#00ff00"/>
<rect x="969" y="590" width="108" height="3" fill="#0000ff"/>
<rect x="1077" y="590" width="6" height="3" fill="#00ff00"/>
<rect x="1083" y="590" width="3" height="3" fill="#ffff00"/>
<rect x="1086" y="590" width="3" height="3" fill="#ffcc00"/>
<rect x="1089" y="590" width="9" height="3" fill="#ff8000"/>
<rect x="1098" y="590" width="6" height="3" fill="#ff0000"/>
<rect x="888" y="593" width="3" height="3" fill="#ff0000"/>
<rect x="891" y="593" width="15" height="3" fill="#ff8000"/>
<rect x="906" y="593" width="6" height="3" fill="#ffcc00"/>
<rect x="912" y="593" width="12" height="3" fill="#ffff00"/>
<rect x="924" y="593" width="42" height="3" fill="#00ff00"/>
<rect x="966" y="593" width="108" height="3" fill="#0000ff"/>
<rect x="1074" y="593" width="6" height="3" fill="#00ff00"/>
<rect x="1080" y="593" width="3" height="3" fill="#ffff00"/>
<rect x="1083" y="593" width="3" height="3" fill="#ffcc00"/>
<rect x="1086" y="593" width="9" height="3" fill="#ff8000"/>
<rect x="1095" y="593" width="6" height="3" fill="#ff0000"/>
<rect x="885" y="596" width="3" height="3" fill="#ff0000"/>
<rect x="888" y="596" width="12" height="3" fill="#ff8000"/>
<rect x="900" y="596" width="9" height="3" fill="#ffcc00"/>
<rect x="909" y="596" width="9" height="3" fill="#ffff00"/>
<rect x="918" y="596" width="45" height="3" fill="#00ff00"/>
<rect x="963" y="596" width="105" height="3" fill="#0000ff"/>
<rect x="1068" y="596" width="9" height="3" fill="#00ff00"/>
<rect x="1077" y="596" width="3" height="3" fill="#ffff00"/>
<rect x="1080" y="596" width="3" height="3" fill="#ffcc00"/>
<rect x="1083" y="596" width="9" height="3" fill="#ff8000"/>
<rect x="1092" y="596" width="6" height="3" fill="#ff0000"/>
<rect x="882" y="599" width="18" height="3" fill="#ff8000"/>
<rect x="900" y="599" width="6" height="3" fill="#ffcc00"/>
<rect x="906" y="599" width="9" height="3" fill="#ffff00"/>
<rect x="915" y="599" width="45" height="3" fill="#00ff00"/>
<rect x="960" y="599" width="105" height="3" fill="#0000ff"/>
<rect x="1065" y="599" width="9" height="3" fill="#00ff00"/>
<rect x="1074" y="599" width="3" height="3" fill="#ffff00"/>
<rect x="1077" y="599" width="3" height="3" fill="#ffcc00"/>
<rect x="1080" y="599" width="9" height="3" fill="#ff8000"/>
<rect x="1089" y="599" width="6" height="3" fill="#ff0000"/>
<rect x="879" y="602" width="15" height="3" fill="#ff8000"/>
<rect x="894" y="602" width="6" height="3" fill="#ffcc00"/>
<rect x="900" y="602" width="12" height="3" fill="#ffff00"/>
<rect x="912" y="602" width="45" height="3" fill="#00ff00"/>
<rect x="957" y="602" width="105" height="3" fill="#0000ff"/>
<rect x="1062" y="602" width="9" height="3" fill="#00ff00"/>
<rect x="1071" y="602" width="3" height="3" fill="#ffff00"/>
<rect x="1074" y="602" width="3" height="3" fill="#ffcc00"/>
<rect x="1077" y="602" width="9" height="3" fill="#ff8000"/>
<rect x="1086" y="602" width="6" height="3" fill="#ff0000"/>
<rect x="876" y="605" width="18" height="3" fill="#ff8000"/>
<rect x="894" y="605" width="3" height="3" fill="#ffcc00"/>
<rect x="897" y="605" width="12" height="3" fill="#ffff00"/>
<rect x="909" y="605" width="48" height="3" fill="#00ff00"/>
<rect x="957" y="605" width="102" height="3" fill="#0000ff"/>
<rect x="1059" y="605" width="9" height="3" fill="#00ff00"/>
<rect x="1068" y="605" width="3" height="3" fill="#ffff00"/>
<rect x="1071" y="605" width="3" height="3" fill="#ffcc00"/>
<rect x="1074" y="605" width="9" height="3" fill="#ff8000"/>
<rect x="1083" y="605" width="6" height="3" fill="#ff0000"/>
<rect x="873" y="608" width="15" height="3" fill="#ff8000"/>
<rect x="888" y="608" width="6" height="3" fill="#ffcc00"/>
<rect x="894" y="608" width="12" height="3" fill="#ffff00"/>
<rect x="906" y="608" width="48" height="3" fill="#00ff00"/>
<rect x="954" y="608" width="102" height="3" fill="#0000ff"/>
<rect x="1056" y="608" width="9" height="3" fill="#00ff00"/>
<rect x="1065" y="608" width="3" height="3" fill="#ffff00"/>
<rect x="1068" y="608" width="3" height="3" fill="#ffcc00"/>
<rect x="1071" y="608" width="9" height="3" fill="#ff8000"/>
<rect x="1080" y="608" width="6" height="3" fill="#ff0000"/>
<rect x="870" y="611" width="15" height="3" fill="#ff8000"/>
<rect x="885" y="611" width="6" height="3" fill="#ffcc00"/>
<rect x="891" y="611" width="12" height="3" fill="#ffff00"/>
<rect x="903" y="611" width="48" height="3" fill="#00ff00"/>
<rect x="951" y="611" width="102" height="3" fill="#0000ff"/>
<rect x="1053" y="611" width="9" height="3" fill="#00ff00"/>
<rect x="1062" y="611" width="3" height="3" fill="#ffff00"/>
<rect x="1065" y="611" width="3" height="3" fill="#ffcc00"/>
<rect x="1068" y="611" width="9" height="3" fill="#ff8000"/>
<rect x="1077" y="611" width="3" height="3" fill="#ff0000"/>
<rect x="867" y="614" width="15" height="3" fill="#ff8000"/>
<rect x="882" y="614" width="6" height="3" fill="#ffcc00"/>
<rect x="888" y="614" width="12" height="3" fill="#ffff00"/>
<rect x="900" y="614" width="45" height="3" fill="#00ff00"/>
<rect x="945" y="614" width="105" height="3" fill="#0000ff"/>
<rect x="1050" y="614" width="9" height="3" fill="#00ff00"/>
<rect x="1059" y="614" width="3" height="3" fill="#ffff00"/>
<rect x="1062" y="614" width="3" height="3" fill="#ffcc00"/>
<rect x="1065" y="614" width="9" height="3" fill="#ff8000"/>
<rect x="1074" y="614" width="3" height="3" fill="#ff0000"/>
<rect x="864" y="617" width="15" height="3" fill="#ff8000"/>
<rect x="879" y="617" width="6" height="3" fill="#ffcc00"/>
<rect x="885" y="617" width="12" height="3" fill="#ffff00"/>
<rect x="897" y="617" width="45" height="3" fill="#00ff00"/>
<rect x="942" y="617" width="102" height="3" fill="#0000ff"/>
<rect x="1044" y="617" width="12" height="3" fill="#00ff00"/>
<rect x="1056" y="617" width="3" height="3" fill="#ffff00"/>
<rect x="1059" y="617" width="9" height="3" fill="#ff8000"/>
<rect x="1068" y="617" width="6" height="3" fill="#ff0000"/>
<rect x="861" y="620" width="15" height="3" fill="#ff8000"/>
<rect x="876" y="620" width="6" height="3" fill="#ffcc00"/>
<rect x="882" y="620" width="12" height="3" fill="#ffff00"/>
<rect x="894" y="620" width="42" height="3" fill="#00ff00"/>
<rect x="936" y="620" width="105" height="3" fill="#0000ff"/>
<rect x="1041" y="620" width="9" height="3" fill="#00ff00"/>
<rect x="1050" y="620" width="3" height="3" fill="#ffff00"/>
<rect x="1053" y="620" width="3" height="3" fill="#ffcc00"/>
<rect x="1056" y="620" width="9" height="3" fill="#ff8000"/>
<rect x="1065" y="620" width="6" height="3" fill="#ff0000"/>
<rect x="858" y="623" width="15" height="3" fill="#ff8000"/>
<rect x="873" y="623" width="6" height="3" fill="#ffcc00"/>
<rect x="879" y="623" width="9" height="3" fill="#ffff00"/>
<rect x="888" y="623" width="45" height="3" fill="#00ff00"/>
<rect x="933" y="623" width="105" height="3" fill="#0000ff"/>
<rect x="1038" y="623" width="9" height="3" fill="#00ff00"/>
<rect x="1047" y="623" width="3" height="3" fill="#ffff00"/>
<rect x="1050" y="623" width="3" height="3" fill="#ffcc00"/>
<rect x="1053" y="623" width="9" height="3" fill="#ff8000"/>
<rect x="1062" y="623" width="6" height="3" fill="#ff0000"/>
<rect x="855" y="626" width="15" height="3" fill="#ff8000"/>
<rect x="870" y="626" width="6" height="3" fill="#ffcc00"/>
<rect x="876" y="626" width="9" height="3" fill="#ffff00"/>
<rect x="885" y="626" width="42" height="3" fill="#00ff00"/>
<rect x="927" y="626" width="108" height="3" fill="#0000ff"/>
<rect x="1035" y="626" width="9" height="3" fill="#00ff00"/>
<rect x="1044" y="626" width="3" height="3" fill="#ffff00"/>
<rect x="1047" y="626" width="3" height="3" fill="#ffcc00"/>
<rect x="1050" y="626" width="6" height="3" fill="#ff8000"/>
<rect x="1056" y="626" width="6" height="3" fill="#ff0000"/>
<rect x="849" y="629" width="18" height="3" fill="#ff8000"/>
<rect x="867" y="629" width="6" height="3" fill="#ffcc00"/>
<rect x="873" y="629" width="9" height="3" fill="#ffff00"/>
<rect x="882" y="629" width="42" height="3" fill="#00ff00"/>
<rect x="924" y="629" width="105" height="3" fill="#0000ff"/>
<rect x="1029" y="629" width="12" height="3" fill="#00ff00"/>
<rect x="1041" y="629" width="3" height="3" fill="#ffff00"/>
<rect x="1044" y="629" width="3" height="3" fill="#ffcc00"/>
<rect x="1047" y="629" width="6" height="3" fill="#ff8000"/>
<rect x="1053" y="629" width="6" height="3" fill="#ff0000"/>
<rect x="846" y="632" width="18" height="3" fill="#ff8000"/>
<rect x="864" y="632" width="6" height="3" fill="#ffcc00"/>
<rect x="870" y="632" width="9" height="3" fill="#ffff00"/>
<rect x="879" y="632" width="39" height="3" fill="#00ff00"/>
<rect x="918" y="632" width="108" height="3" fill="#0000ff"/>
<rect x="1026" y="632" width="9" height="3" fill="#00ff00"/>
<rect x="1035" y="632" width="6" height="3" fill="#ffff00"/>
<rect x="1041" y="632" width="9" height="3" fill="#ff8000"/>
<rect x="1050" y="632" width="6" height="3" fill="#ff0000"/>
<rect x="843" y="635" width="18" height="3" fill="#ff8000"/>
<rect x="861" y="635" width="6" height="3" fill="#ffcc00"/>
<rect x="867" y="635" width="9" height="3" fill="#ffff00"/>
<rect x="876" y="635" width="39" height="3" fill="#00ff00"/>
<rect x="915" y="635" width="108" height="3" fill="#0000ff"/>
<rect x="1023" y="635" width="9" height="3" fill="#00ff00"/>
<rect x="1032" y="635" width="3" height="3" fill="#ffff00"/>
<rect x="1035" y="635" width="3" height="3" fill="#ffcc00"/>
<rect x="1038" y="635" width="9" height="3" fill="#ff8000"/>
<rect x="1047" y="635" width="6" height="3" fill="#ff0000"/>
<rect x="840" y="638" width="18" height="3" fill="#ff8000"/>
<rect x="858" y="638" width="6" height="3" fill="#ffcc00"/>
<rect x="864" y="638" width="9" height="3" fill="#ffff00"/>
<rect x="873" y="638" width="39" height="3" fill="#00ff00"/>
<rect x="912" y="638" width="108" height="3" fill="#0000ff"/>
<rect x="1020" y="638" width="9" height="3" fill="#00ff00"/>
<rect x="1029" y="638" width="3" height="3" fill="#ffff00"/>
<rect x="1032" y="638" width="3" height="3" fill="#ffcc00"/>
<rect x="1035" y="638" width="6" height="3" fill="#ff8000"/>
<rect x="1041" y="638" width="9" height="3" fill="#ff0000"/>
<rect x="837" y="641" width="18" height="3" fill="#ff8000"/>
<rect x="855" y="641" width="6" height="3" fill="#ffcc00"/>
<rect x="861" y="641" width="9" height="3" fill="#ffff00"/>
<rect x="870" y="641" width="36" height="3" fill="#00ff00"/>
<rect x="906" y="641" width="108" height="3" fill="#0000ff"/>
<rect x="1014" y="641" width="12" height="3" fill="#00ff00"/>
<rect x="1026" y="641" width="3" height="3" fill="#ffff00"/>
<rect x="1029" y="641" width="3" height="3" fill="#ffcc00"/>
<rect x="1032" y="641" width="6" height="3" fill="#ff8000"/>
<rect x="1038" y="641" width="9" height="3" fill="#ff0000"/>
<rect x="834" y="644" width="18" height="3" fill="#ff8000"/>
<rect x="852" y="644" width="3" height="3" fill="#ffcc00"/>
<rect x="855" y="644" width="12" height="3" fill="#ffff00"/>
<rect x="867" y="644" width="36" height="3" fill="#00ff00"/>
<rect x="903" y="644" width="108" height="3" fill="#0000ff"/>
<rect x="1011" y="644" width="9" height="3" fill="#00ff00"/>
<rect x="1020" y="644" width="6" height="3" fill="#ffff00"/>
<rect x="1026" y="644" width="3" height="3" fill="#ffcc00"/>
<rect x="1029" y="644" width="6" height="3" fill="#ff8000"/>
<rect x="1035" y="644" width="6" height="3" fill="#ff0000"/>
<rect x="831" y="647" width="15" height="3" fill="#ff8000"/>
<rect x="846" y="647" width="6" height="3" fill="#ffcc00"/>
<rect x="852" y="647" width="12" height="3" fill="#ffff00"/>
<rect x="864" y="647" width="33" height="3" fill="#00ff00"/>
<rect x="897" y="647" width="111" height="3" fill="#0000ff"/>
<rect x="1008" y="647" width="9" height="3" fill="#00ff00"/>
<rect x="1017" y="647" width="6" height="3" fill="#ffff00"/>
<rect x="1023" y="647" width="3" height="3" fill="#ffcc00"/>
<rect x="1026" y="647" width="6" height="3" fill="#ff8000"/>
<rect x="1032" y="647" width="6" height="3" fill="#ff0000"/>
<rect x="828" y="650" width="18" height="3" fill="#ff8000"/>
<rect x="846" y="650" width="3" height="3" fill="#ffcc00"/>
<rect x="849" y="650" width="12" height="3" fill="#ffff00"/>
<rect x="861" y="650" width="33" height="3" fill="#00ff00"/>
<rect x="894" y="650" width="111" height="3" fill="#0000ff"/>
<rect x="1005" y="650" width="9" height="3" fill="#00ff00"/>
<rect x="1014" y="650" width="6" height="3" fill="#ffff00"/>
<rect x="1020" y="650" width="3" height="3" fill="#ffcc00"/>
<rect x="1023" y="650" width="6" height="3" fill="#ff8000"/>
<rect x="1029" y="650" width="6" height="3" fill="#ff0000"/>
<rect x="825" y="653" width="15" height="3" fill="#ff8000"/>
<rect x="840" y="653" width="6" height="3" fill="#ffcc00"/>
<rect x="846" y="653" width="12" height="3" fill="#ffff00"/>
<rect x="858" y="653" width="36" height="3" fill="#00ff00"/>
<rect x="894" y="653" width="108" height="3" fill="#0000ff"/>
<rect x="1002" y="653" width="12" height="3" fill="#00ff00"/>
<rect x="1014" y="653" width="3" height="3" fill="#ffff00"/>
<rect x="1017" y="653" width="3" height="3" fill="#ffcc00"/>
<rect x="1020" y="653" width="6" height="3" fill="#ff8000"/>
<rect x="1026" y="653" width="6" height="3" fill="#ff0000"/>
<rect x="822" y="656" width="18" height="3" fill="#ff8000"/>
<rect x="840" y="656" width="3" height="3" fill="#ffcc00"/>
<rect x="843" y="656" width="12" height="3" fill="#ffff00"/>
<rect x="855" y="656" width="36" height="3" fill="#00ff00"/>
<rect x="891" y="656" width="108" height="3" fill="#0000ff"/>
<rect x="999" y="656" width="12" height="3" fill="#00ff00"/>
<rect x="1011" y="656" width="3" height="3" fill="#ffff00"/>
<rect x="1014" y="656" width="3" height="3" fill="#ffcc00"/>
<rect x="1017" y="656" width="6" height="3" fill="#ff8000"/>
<rect x="1023" y="656" width="6" height="3" fill="#ff0000"/>
<rect x="819" y="659" width="15" height="3" fill="#ff8000"/>
<rect x="834" y="659" width="6" height="3" fill="#ffcc00"/>
<rect x="840" y="659" width="12" height="3" fill="#ffff00"/>
<rect x="852" y="659" width="36" height="3" fill="#00ff00"/>
<rect x="888" y="659" width="108" height="3" fill="#0000ff"/>
<rect x="996" y="659" width="12" height="3" fill="#00ff00"/>
<rect x="1008" y="659" width="3" height="3" fill="#ffff00"/>
<rect x="1011" y="659" width="3" height="3" fill="#ffcc00"/>
<rect x="1014" y="659" width="6" height="3" fill="#ff8000"/>
<rect x="1020" y="659" width="6" height="3" fill="#ff0000"/>
<rect x="816" y="662" width="18" height="3" fill="#ff8000"/>
<rect x="834" y="662" width="3" height="3" fill="#ffcc00"/>
<rect x="837" y="662" width="12" height="3" fill="#ffff00"/>
<rect x="849" y="662" width="36" height="3" fill="#00ff00"/>
<rect x="885" y="662" width="108" height="3" fill="#0000ff"/>
<rect x="993" y="662" width="12" height="3" fill="#00ff00"/>
<rect x="1005" y="662" width="3" height="3" fill="#ffff00"/>
<rect x="1008" y="662" width="3" height="3" fill="#ffcc00"/>
<rect x="1011" y="662" width="6" height="3" fill="#ff8000"/>
<rect x="1017" y="662" width="6" height="3" fill="#ff0000"/>
<rect x="813" y="665" width="15" height="3" fill="#ff8000"/>
<rect x="828" y="665" width="6" height="3" fill="#ffcc00"/>
<rect x="834" y="665" width="12" height="3" fill="#ffff00"/>
<rect x="846" y="665" width="39" height="3" fill="#00ff00"/>
<rect x="885" y="665" width="108" height="3" fill="#0000ff"/>
<rect x="993" y="665" width="9" height="3" fill="#00ff00"/>
<rect x="1002" y="665" width="6" height="3" fill="#ffff00"/>
<rect x="1008" y="665" width="6" height="3" fill="#ff8000"/>
<rect x="1014" y="665" width="6" height="3" fill="#ff0000"/>
<rect x="810" y="668" width="18" height="3" fill="#ff8000"/>
<rect x="828" y="668" width="3" height="3" fill="#ffcc00"/>
<rect x="831" y="668" width="12" height="3" fill="#ffff00"/>
<rect x="843" y="668" width="39" height="3" fill="#00ff00"/>
<rect x="882" y="668" width="108" height="3" fill="#0000ff"/>
<rect x="990" y="668" width="12" height="3" fill="#00ff00"/>
<rect x="1002" y="668" width="3" height="3" fill="#ffff00"/>
<rect x="1005" y="668" width="3" height="3" fill="#ffcc00"/>
<rect x="1008" y="668" width="3" height="3" fill="#ff8000"/>
<rect x="1011" y="668" width="9" height="3" fill="#ff0000"/>
<rect x="807" y="671" width="15" height="3" fill="#ff8000"/>
<rect x="822" y="671" width="6" height="3" fill="#ffcc00"/>
<rect x="828" y="671" width="12" height="3" fill="#ffff00"/>
<rect x="840" y="671" width="39" height="3" fill="#00ff00"/>
<rect x="879" y="671" width="108" height="3" fill="#0000ff"/>
<rect x="987" y="671" width="12" height="3" fill="#00ff00"/>
<rect x="999" y="671" width="3" height="3" fill="#ffff00"/>
<rect x="1002" y="671" width="3" height="3" fill="#ffcc00"/>
<rect x="1005" y="671" width="3" height="3" fill="#ff8000"/>
<rect x="1008" y="671" width="9" height="3" fill="#ff0000"/>
<rect x="804" y="674" width="18" height="3" fill="#ff8000"/>
<rect x="822" y="674" width="3" height="3" fill="#ffcc00"/>
<rect x="825" y="674" width="12" height="3" fill="#ffff00"/>
<rect x="837" y="674" width="39" height="3" fill="#00ff00"/>
<rect x="876" y="674" width="108" height="3" fill="#0000ff"/>
<rect x="984" y="674" width="12" height="3" fill="#00ff00"/>
<rect x="996" y="674" width="3" height="3" fill="#ffff00"/>
<rect x="999" y="674" width="3" height="3" fill="#ffcc00"/>
<rect x="1002" y="674" width="3" height="3" fill="#ff8000"/>
<rect x="1005" y="674" width="9" height="3" fill="#ff0000"/>
<rect x="801" y="677" width="15" height="3" fill="#ff8000"/>
<rect x="816" y="677" width="6" height="3" fill="#ffcc00"/>
<rect x="822" y="677" width="12" height="3" fill="#ffff00"/>
<rect x="834" y="677" width="39" height="3" fill="#00ff00"/>
<rect x="873" y="677" width="108" height="3" fill="#0000ff"/>
<rect x="981" y="677" width="12" height="3" fill="#00ff00"/>
<rect x="993" y="677" width="3" height="3" fill="#ffff00"/>
<rect x="996" y="677" width="3" height="3" fill="#ffcc00"/>
<rect x="999" y="677" width="3" height="3" fill="#ff8000"/>
<rect x="1002" y="677" width="9" height="3" fill="#ff0000"/>
<rect x="798" y="680" width="18" height="3" fill="#ff8000"/>
<rect x="816" y="680" width="3" height="3" fill="#ffcc00"/>
<rect x="819" y="680" width="12" height="3" fill="#ffff00"/>
<rect x="831" y="680" width="42" height="3" fill="#00ff00"/>
<rect x="873" y="680" width="105" height="3" fill="#0000ff"/>
<rect x="978" y="680" width="12" height="3" fill="#00ff00"/>
<rect x="990" y="680" width="3" height="3" fill="#ffff00"/>
<rect x="993" y="680" width="3" height="3" fill="#ffcc00"/>
<rect x="996" y="680" width="3" height="3" fill="#ff8000"/>
<rect x="999" y="680" width="9" height="3" fill="#ff0000"/>
<rect x="795" y="683" width="15" height="3" fill="#ff8000"/>
<rect x="810" y="683" width="6" height="3" fill="#ffcc00"/>
<rect x="816" y="683" width="12" height="3" fill="#ffff00"/>
<rect x="828" y="683" width="42" height="3" fill="#00ff00"/>
<rect x="870" y="683" width="105" height="3" fill="#0000ff"/>
<rect x="975" y="683" width="15" height="3" fill="#00ff00"/>
<rect x="990" y="683" width="3" height="3" fill="#ffff00"/>
<rect x="993" y="683" width="3" height="3" fill="#ff8000"/>
<rect x="996" y="683" width="9" height="3" fill="#ff0000"/>
<rect x="792" y="686" width="18" height="3" fill="#ff8000"/>
<rect x="810" y="686" width="3" height="3" fill="#ffcc00"/>
<rect x="813" y="686" width="12" height="3" fill="#ffff00"/>
<rect x="825" y="686" width="42" height="3" fill="#00ff00"/>
<rect x="867" y="686" width="105" height="3" fill="#0000ff"/>
<rect x="972" y="686" width="15" height="3" fill="#00ff00"/>
<rect x="987" y="686" width="3" height="3" fill="#ffff00"/>
<rect x="990" y="686" width="3" height="3" fill="#ff8000"/>
<rect x="993" y="686" width="9" height="3" fill="#ff0000"/>
</g>
<polyline points="1375,192 1392,175" fill="none" stroke="#00ff00" stroke-width="2.5"/>
<polyline points="1330,232 1340,232 1348,243" fill="none" stroke="#00ff00" stroke-width="3"/>
<polyline points="1350,234 1356,226 1352,220 1358,217 1361,222 1356,226" fill="none" stroke="#00ff00" stroke-width="2.6"/>
<polyline points="1277,267 1285,260" fill="none" stroke="#00ff00" stroke-width="2.5"/>
<rect x="1304" y="235" width="4" height="4" fill="#00ff00" />
<rect x="1507" y="145" width="3" height="3" fill="#00ff00" />
<polyline points="1336,198 1375,163" fill="none" stroke="#00ff00" stroke-width="2"/>
<polyline points="904,654 918,639" fill="none" stroke="#0000ff" stroke-width="2.5"/>
<polyline points="960,574 989,547" fill="none" stroke="#0000ff" stroke-width="3.5"/>
<polyline points="1000,532 1008,524 1044,490 1076,460 1092,447" fill="none" stroke="#0000ff" stroke-width="4.5"/>
<polyline points="910,635 939,610" fill="none" stroke="#ffff00" stroke-width="2"/>
<polyline points="925,609 939,592" fill="none" stroke="#ffff00" stroke-width="2"/>
<polyline points="943,605 958,590" fill="none" stroke="#ffff00" stroke-width="2"/>
<line x1="438.5" y1="134" x2="438.5" y2="688" stroke="#808080" stroke-width="1" stroke-dasharray="5,5"/>
<line x1="563.5" y1="134" x2="563.5" y2="688" stroke="#808080" stroke-width="1" stroke-dasharray="5,5"/>
<line x1="689.5" y1="134" x2="689.5" y2="688" stroke="#808080" stroke-width="1" stroke-dasharray="5,5"/>
<line x1="814.5" y1="134" x2="814.5" y2="688" stroke="#808080" stroke-width="1" stroke-dasharray="5,5"/>
<line x1="940.5" y1="134" x2="940.5" y2="688" stroke="#808080" stroke-width="1" stroke-dasharray="5,5"/>
<line x1="1065.5" y1="134" x2="1065.5" y2="688" stroke="#808080" stroke-width="1" stroke-dasharray="5,5"/>
<line x1="1190.5" y1="134" x2="1190.5" y2="688" stroke="#808080" stroke-width="1" stroke-dasharray="5,5"/>
<line x1="1316.5" y1="134" x2="1316.5" y2="688" stroke="#808080" stroke-width="1" stroke-dasharray="5,5"/>
<line x1="1441.5" y1="134" x2="1441.5" y2="688" stroke="#808080" stroke-width="1" stroke-dasharray="5,5"/>
<line x1="1567.5" y1="134" x2="1567.5" y2="688" stroke="#808080" stroke-width="1" stroke-dasharray="5,5"/>
<line x1="1692.5" y1="134" x2="1692.5" y2="688" stroke="#808080" stroke-width="1" stroke-dasharray="5,5"/>
<line x1="1817.5" y1="134" x2="1817.5" y2="688" stroke="#808080" stroke-width="1" stroke-dasharray="5,5"/>
<line x1="343" y1="137.5" x2="1918" y2="137.5" stroke="#808080" stroke-width="1" stroke-dasharray="5,5" stroke-dashoffset="3"/>
<line x1="343" y1="344.5" x2="1918" y2="344.5" stroke="#808080" stroke-width="1" stroke-dasharray="5,5" stroke-dashoffset="3"/>
<line x1="343" y1="550.5" x2="1918" y2="550.5" stroke="#808080" stroke-width="1" stroke-dasharray="5,5" stroke-dashoffset="3"/>
<polygon points="1234,318 1298,378 1186,495 1121,422" fill="none" stroke="#e8e8e8" stroke-width="3.2"/>
<polygon points="1234,318 1298,378 1186,495 1121,422" fill="none" stroke="#000" stroke-width="1.3" stroke-dasharray="7,5"/>
<text x="1089.5" y="144.5" font-size="18" font-family='"Liberation Sans", sans-serif' font-weight="bold" fill="#000" stroke="#fff" stroke-width="3" stroke-linejoin="round" paint-order="stroke" text-anchor="start" textLength="92" lengthAdjust="spacingAndGlyphs">52.57950 N</text>
<text x="1089.5" y="351" font-size="18" font-family='"Liberation Sans", sans-serif' font-weight="bold" fill="#000" stroke="#fff" stroke-width="3" stroke-linejoin="round" paint-order="stroke" text-anchor="start" textLength="92" lengthAdjust="spacingAndGlyphs">52.57940 N</text>
<text x="1089.5" y="557.5" font-size="18" font-family='"Liberation Sans", sans-serif' font-weight="bold" fill="#000" stroke="#fff" stroke-width="3" stroke-linejoin="round" paint-order="stroke" text-anchor="start" textLength="92" lengthAdjust="spacingAndGlyphs">52.57930 N</text>
<text x="431.5" y="376.5" font-size="18" font-family='"Liberation Sans", sans-serif' font-weight="bold" fill="#000" stroke="#fff" stroke-width="3" stroke-linejoin="round" paint-order="stroke" text-anchor="start" transform="rotate(90 431.5 376.5)" textLength="82" lengthAdjust="spacingAndGlyphs">1.67540 E</text>
<text x="556.5" y="376.5" font-size="18" font-family='"Liberation Sans", sans-serif' font-weight="bold" fill="#000" stroke="#fff" stroke-width="3" stroke-linejoin="round" paint-order="stroke" text-anchor="start" transform="rotate(90 556.5 376.5)" textLength="82" lengthAdjust="spacingAndGlyphs">1.67550 E</text>
<text x="682.5" y="376.5" font-size="18" font-family='"Liberation Sans", sans-serif' font-weight="bold" fill="#000" stroke="#fff" stroke-width="3" stroke-linejoin="round" paint-order="stroke" text-anchor="start" transform="rotate(90 682.5 376.5)" textLength="82" lengthAdjust="spacingAndGlyphs">1.67560 E</text>
<text x="807.5" y="376.5" font-size="18" font-family='"Liberation Sans", sans-serif' font-weight="bold" fill="#000" stroke="#fff" stroke-width="3" stroke-linejoin="round" paint-order="stroke" text-anchor="start" transform="rotate(90 807.5 376.5)" textLength="82" lengthAdjust="spacingAndGlyphs">1.67570 E</text>
<text x="933.5" y="376.5" font-size="18" font-family='"Liberation Sans", sans-serif' font-weight="bold" fill="#000" stroke="#fff" stroke-width="3" stroke-linejoin="round" paint-order="stroke" text-anchor="start" transform="rotate(90 933.5 376.5)" textLength="82" lengthAdjust="spacingAndGlyphs">1.67580 E</text>
<text x="1058.5" y="376.5" font-size="18" font-family='"Liberation Sans", sans-serif' font-weight="bold" fill="#000" stroke="#fff" stroke-width="3" stroke-linejoin="round" paint-order="stroke" text-anchor="start" transform="rotate(90 1058.5 376.5)" textLength="82" lengthAdjust="spacingAndGlyphs">1.67590 E</text>
<text x="1183.5" y="376.5" font-size="18" font-family='"Liberation Sans", sans-serif' font-weight="bold" fill="#000" stroke="#fff" stroke-width="3" stroke-linejoin="round" paint-order="stroke" text-anchor="start" transform="rotate(90 1183.5 376.5)" textLength="82" lengthAdjust="spacingAndGlyphs">1.67600 E</text>
<text x="1309.5" y="376.5" font-size="18" font-family='"Liberation Sans", sans-serif' font-weight="bold" fill="#000" stroke="#fff" stroke-width="3" stroke-linejoin="round" paint-order="stroke" text-anchor="start" transform="rotate(90 1309.5 376.5)" textLength="82" lengthAdjust="spacingAndGlyphs">1.67610 E</text>
<text x="1434.5" y="376.5" font-size="18" font-family='"Liberation Sans", sans-serif' font-weight="bold" fill="#000" stroke="#fff" stroke-width="3" stroke-linejoin="round" paint-order="stroke" text-anchor="start" transform="rotate(90 1434.5 376.5)" textLength="82" lengthAdjust="spacingAndGlyphs">1.67620 E</text>
<text x="1560.5" y="376.5" font-size="18" font-family='"Liberation Sans", sans-serif' font-weight="bold" fill="#000" stroke="#fff" stroke-width="3" stroke-linejoin="round" paint-order="stroke" text-anchor="start" transform="rotate(90 1560.5 376.5)" textLength="82" lengthAdjust="spacingAndGlyphs">1.67630 E</text>
<text x="1685.5" y="376.5" font-size="18" font-family='"Liberation Sans", sans-serif' font-weight="bold" fill="#000" stroke="#fff" stroke-width="3" stroke-linejoin="round" paint-order="stroke" text-anchor="start" transform="rotate(90 1685.5 376.5)" textLength="82" lengthAdjust="spacingAndGlyphs">1.67640 E</text>
<text x="1810.5" y="376.5" font-size="18" font-family='"Liberation Sans", sans-serif' font-weight="bold" fill="#000" stroke="#fff" stroke-width="3" stroke-linejoin="round" paint-order="stroke" text-anchor="start" transform="rotate(90 1810.5 376.5)" textLength="82" lengthAdjust="spacingAndGlyphs">1.67650 E</text>
<path d="M1188,348 L1232,348 Q1235.5,348 1235.5,351.5 L1235.5,389 Q1235.5,392 1232,392 L1220.5,392 L1210,402 L1199.5,392 L1188,392 Q1184.5,392 1184.5,389 L1184.5,351.5 Q1184.5,348 1188,348 Z" fill="#d8e4ff" filter="url(#fGlow)" opacity="0.8"/>
<path d="M1188,348 L1232,348 Q1235.5,348 1235.5,351.5 L1235.5,389 Q1235.5,392 1232,392 L1220.5,392 L1210,402 L1199.5,392 L1188,392 Q1184.5,392 1184.5,389 L1184.5,351.5 Q1184.5,348 1188,348 Z" fill="#fff" stroke="#f02020" stroke-width="1.3"/>
<circle cx="1214.8" cy="359" r="3.4" fill="#f01010"/>
<path d="M1210,366 L1216.5,366 L1210.5,384 Q1207,386 1203.5,384 Z" fill="#f01010"/>
<path d="M1204,369 Q1206,366.5 1210,366" stroke="#f01010" stroke-width="1.2" fill="none"/>
<rect x="1087.5" y="498.5" width="195" height="30" fill="none" stroke="#707070" stroke-width="2" />
<text x="1092" y="520" font-size="14" font-family='"Liberation Sans", sans-serif' fill="#000" stroke="#fff" stroke-width="2.2" paint-order="stroke" textLength="186" lengthAdjust="spacingAndGlyphs">SubArea #1 [Please enter!]</text>
<rect x="352" y="141" width="56" height="21" fill="#ff0000" />
<rect x="408" y="141" width="56" height="21" fill="#ff8000" />
<rect x="464" y="141" width="56" height="21" fill="#ffcc00" />
<rect x="520" y="141" width="56" height="21" fill="#ffff00" />
<rect x="576" y="141" width="56" height="21" fill="#00ff00" />
<rect x="632" y="141" width="56" height="21" fill="#0000ff" />
<rect x="352.5" y="141.5" width="336" height="20" fill="none" stroke="#000" stroke-width="1.5" />
<text x="380" y="158" font-size="13.5" font-family='"Liberation Sans", sans-serif' font-weight="bold" fill="#000" stroke="#fff" stroke-width="3" stroke-linejoin="round" paint-order="stroke" text-anchor="middle">1</text>
<text x="436" y="158" font-size="13.5" font-family='"Liberation Sans", sans-serif' font-weight="bold" fill="#000" stroke="#fff" stroke-width="3" stroke-linejoin="round" paint-order="stroke" text-anchor="middle">2</text>
<text x="492" y="158" font-size="13.5" font-family='"Liberation Sans", sans-serif' font-weight="bold" fill="#000" stroke="#fff" stroke-width="3" stroke-linejoin="round" paint-order="stroke" text-anchor="middle">3</text>
<text x="548" y="158" font-size="13.5" font-family='"Liberation Sans", sans-serif' font-weight="bold" fill="#000" stroke="#fff" stroke-width="3" stroke-linejoin="round" paint-order="stroke" text-anchor="middle">4</text>
<text x="604" y="158" font-size="13.5" font-family='"Liberation Sans", sans-serif' font-weight="bold" fill="#000" stroke="#fff" stroke-width="3" stroke-linejoin="round" paint-order="stroke" text-anchor="middle">6</text>
<text x="660" y="158" font-size="13.5" font-family='"Liberation Sans", sans-serif' font-weight="bold" fill="#000" stroke="#fff" stroke-width="3" stroke-linejoin="round" paint-order="stroke" text-anchor="middle">8</text>
<text x="702" y="157" font-size="13" font-family='"Liberation Sans", sans-serif' fill="#000" font-weight="bold" text-anchor="start" >Pass</text>
<path d="M1855.5,173 L1835.5,216 L1855.5,195 L1875.5,216 Z" fill="#fff" stroke="#000" stroke-width="1.2" />
<path d="M1855.5,173 L1855.5,195 L1875.5,216 Z" fill="#000" />
<text x="1850" y="231" font-size="21.5" font-family='"Liberation Sans", sans-serif' fill="#000" font-weight="normal" text-anchor="start" textLength="12.4" lengthAdjust="spacingAndGlyphs" >N</text>
<rect x="352" y="667" width="461" height="11" fill="#000" />
<rect x="444.5" y="669.5" width="92.5" height="6" fill="#fff" />
<rect x="628.5" y="669.5" width="92.5" height="6" fill="#fff" />
<text x="831.5" y="678" font-size="16" font-family='"Liberation Sans", sans-serif' font-weight="bold" fill="#000" stroke="#fff" stroke-width="3" stroke-linejoin="round" paint-order="stroke" text-anchor="start" textLength="50" lengthAdjust="spacingAndGlyphs">25.0 m</text>
<rect x="495" y="252" width="194" height="25" fill="#000" opacity="0.35" filter="url(#fShadow)"/>
<rect x="493.5" y="249.5" width="194" height="25" fill="url(#gTip)" stroke="#767676" stroke-width="1" />
<text x="496" y="268" font-size="15" font-family='"Liberation Sans", sans-serif' fill="#101020" font-weight="normal" text-anchor="start" textLength="188.5" lengthAdjust="spacingAndGlyphs" >Double click to take Position</text>
</g>
<rect x="1122" y="690" width="1" height="1" fill="#9a9a9a" />
<rect x="1125" y="690" width="1" height="1" fill="#9a9a9a" />
<rect x="1128" y="690" width="1" height="1" fill="#9a9a9a" />
<rect x="1131" y="690" width="1" height="1" fill="#9a9a9a" />
<rect x="1134" y="690" width="1" height="1" fill="#9a9a9a" />
<rect x="1137" y="690" width="1" height="1" fill="#9a9a9a" />
<rect x="1140" y="690" width="1" height="1" fill="#9a9a9a" />
<rect x="1143" y="690" width="1" height="1" fill="#9a9a9a" />
<text x="353" y="710" font-size="11" font-family='"Liberation Sans", sans-serif' fill="#000" font-weight="normal" text-anchor="start" textLength="69.2" lengthAdjust="spacingAndGlyphs" >Size &amp; Position</text>
<text x="444" y="710" font-size="11" font-family='"Liberation Sans", sans-serif' fill="#000" font-weight="normal" text-anchor="start" textLength="38.2" lengthAdjust="spacingAndGlyphs" >Polygon</text>
<text x="504" y="710" font-size="11" font-family='"Liberation Sans", sans-serif' fill="#000" font-weight="normal" text-anchor="start" textLength="45.2" lengthAdjust="spacingAndGlyphs" >Comment</text>
<text x="572" y="710" font-size="11" font-family='"Liberation Sans", sans-serif' fill="#000" font-weight="normal" text-anchor="start" textLength="40.3" lengthAdjust="spacingAndGlyphs" >Average</text>
<text x="634" y="710" font-size="11" font-family='"Liberation Sans", sans-serif' fill="#000" font-weight="normal" text-anchor="start" textLength="47.3" lengthAdjust="spacingAndGlyphs" >Coverage</text>
<text x="704" y="710" font-size="11" font-family='"Liberation Sans", sans-serif' fill="#000" font-weight="normal" text-anchor="start" textLength="27.7" lengthAdjust="spacingAndGlyphs" >Trend</text>
<line x1="433.5" y1="696" x2="433.5" y2="717" stroke="#a8a8a8" stroke-width="1" />
<line x1="493.5" y1="696" x2="493.5" y2="717" stroke="#a8a8a8" stroke-width="1" />
<line x1="560.5" y1="696" x2="560.5" y2="717" stroke="#a8a8a8" stroke-width="1" />
<line x1="623.5" y1="696" x2="623.5" y2="717" stroke="#a8a8a8" stroke-width="1" />
<line x1="692.5" y1="696" x2="692.5" y2="717" stroke="#a8a8a8" stroke-width="1" />
<line x1="744.5" y1="696" x2="744.5" y2="717" stroke="#a8a8a8" stroke-width="1" />
<line x1="850.5" y1="696" x2="850.5" y2="717" stroke="#a8a8a8" stroke-width="1" />
<rect x="750.5" y="696.5" width="94" height="20" fill="#f4f4f4" stroke="#8a8a8a" stroke-width="1" />
<rect x="751.5" y="697.5" width="92" height="1" fill="#c0c0c0" />
<text x="757" y="711" font-size="11" font-family='"Liberation Sans", sans-serif' fill="#000" font-weight="normal" text-anchor="start" textLength="84.6" lengthAdjust="spacingAndGlyphs" >Points of Interest</text>
<path d="M361.5,729.5 L366.5,729.5 L366.5,734.5 L371.5,734.5 L371.5,739.5 L366.5,739.5 L366.5,744.5 L361.5,744.5 L361.5,739.5 L356.5,739.5 L356.5,734.5 L361.5,734.5 Z" fill="url(#gPlus)" stroke="#3a7010" stroke-width="1" />
<circle cx="364" cy="758.5" r="7" fill="#e06060" stroke="#b03030"/>
<rect x="359" y="757" width="10" height="3" fill="#fff" />
<circle cx="364" cy="781.5" r="5.5" fill="none" stroke="#000" stroke-width="1.3"/>
<line x1="364" y1="774" x2="364" y2="789" stroke="#000" stroke-width="1.3" />
<line x1="356.5" y1="781.5" x2="371.5" y2="781.5" stroke="#000" stroke-width="1.3" />
<rect x="382.5" y="726.5" width="314" height="240" fill="#fff" stroke="#a0a0a0" stroke-width="1" />
<rect x="383" y="727" width="313" height="18" fill="url(#gHdr)" />
<rect x="383" y="745" width="313" height="1" fill="#e3e3e3" />
<line x1="399.5" y1="727" x2="399.5" y2="965" stroke="#ececec" stroke-width="1" />
<line x1="487.5" y1="727" x2="487.5" y2="745" stroke="#e3e3e3" stroke-width="1" />
<line x1="487.5" y1="746" x2="487.5" y2="965" stroke="#ececec" stroke-width="1" stroke-dasharray="1,2"/>
<text x="406" y="741.5" font-size="11" font-family='"Liberation Sans", sans-serif' fill="#000" font-weight="normal" text-anchor="start" textLength="30.25" lengthAdjust="spacingAndGlyphs" >Notice</text>
<text x="493" y="741.5" font-size="11" font-family='"Liberation Sans", sans-serif' fill="#000" font-weight="normal" text-anchor="start" textLength="37.3" lengthAdjust="spacingAndGlyphs" >Position</text>
<rect x="400" y="747" width="87" height="17" fill="#3d8ff0" />
<rect x="400.5" y="747.5" width="86" height="16" fill="none" stroke="#c77a1a" stroke-width="1" stroke-dasharray="1,1"/>
<text x="408" y="760" font-size="11" font-family='"Liberation Sans", sans-serif' fill="#fff" font-weight="normal" text-anchor="start" textLength="35.6" lengthAdjust="spacingAndGlyphs" >POI #0</text>
<text x="496" y="760" font-size="11" font-family='"Liberation Sans", sans-serif' fill="#000" font-weight="normal" text-anchor="start" textLength="145" lengthAdjust="spacingAndGlyphs" >52.5793699° N, 1.6760157° E</text>
<line x1="383" y1="764.5" x2="696" y2="764.5" stroke="#e6e6e6" stroke-width="1" stroke-dasharray="1,2"/>
<rect x="700" y="836" width="1" height="1" fill="#9a9a9a" />
<rect x="700" y="839" width="1" height="1" fill="#9a9a9a" />
<rect x="700" y="842" width="1" height="1" fill="#9a9a9a" />
<rect x="700" y="845" width="1" height="1" fill="#9a9a9a" />
<rect x="700" y="848" width="1" height="1" fill="#9a9a9a" />
<rect x="700" y="851" width="1" height="1" fill="#9a9a9a" />
<rect x="700" y="854" width="1" height="1" fill="#9a9a9a" />
<rect x="706.5" y="726.5" width="1202" height="240" fill="#fff" stroke="#a0a0a0" stroke-width="1" />
<rect x="707" y="727" width="1201" height="18" fill="url(#gHdr)" />
<rect x="707" y="745" width="1201" height="1" fill="#e3e3e3" />
<line x1="760.5" y1="727" x2="760.5" y2="745" stroke="#dcdcdc" stroke-width="1" />
<line x1="760.5" y1="746" x2="760.5" y2="965" stroke="#eeeeee" stroke-width="1" stroke-dasharray="1,2"/>
<line x1="829.5" y1="727" x2="829.5" y2="745" stroke="#dcdcdc" stroke-width="1" />
<line x1="829.5" y1="746" x2="829.5" y2="965" stroke="#eeeeee" stroke-width="1" stroke-dasharray="1,2"/>
<line x1="886.5" y1="727" x2="886.5" y2="745" stroke="#dcdcdc" stroke-width="1" />
<line x1="886.5" y1="746" x2="886.5" y2="965" stroke="#eeeeee" stroke-width="1" stroke-dasharray="1,2"/>
<line x1="962.5" y1="727" x2="962.5" y2="745" stroke="#dcdcdc" stroke-width="1" />
<line x1="962.5" y1="746" x2="962.5" y2="965" stroke="#eeeeee" stroke-width="1" stroke-dasharray="1,2"/>
<line x1="1011.5" y1="727" x2="1011.5" y2="745" stroke="#dcdcdc" stroke-width="1" />
<line x1="1011.5" y1="746" x2="1011.5" y2="965" stroke="#eeeeee" stroke-width="1" stroke-dasharray="1,2"/>
<line x1="1061.5" y1="727" x2="1061.5" y2="745" stroke="#dcdcdc" stroke-width="1" />
<line x1="1061.5" y1="746" x2="1061.5" y2="965" stroke="#eeeeee" stroke-width="1" stroke-dasharray="1,2"/>
<line x1="1123.5" y1="727" x2="1123.5" y2="745" stroke="#dcdcdc" stroke-width="1" />
<line x1="1123.5" y1="746" x2="1123.5" y2="965" stroke="#eeeeee" stroke-width="1" stroke-dasharray="1,2"/>
<line x1="1194.5" y1="727" x2="1194.5" y2="745" stroke="#dcdcdc" stroke-width="1" />
<line x1="1194.5" y1="746" x2="1194.5" y2="965" stroke="#eeeeee" stroke-width="1" stroke-dasharray="1,2"/>
<line x1="1261.5" y1="727" x2="1261.5" y2="745" stroke="#dcdcdc" stroke-width="1" />
<line x1="1261.5" y1="746" x2="1261.5" y2="965" stroke="#eeeeee" stroke-width="1" stroke-dasharray="1,2"/>
<line x1="1343.5" y1="727" x2="1343.5" y2="745" stroke="#dcdcdc" stroke-width="1" />
<line x1="1343.5" y1="746" x2="1343.5" y2="965" stroke="#eeeeee" stroke-width="1" stroke-dasharray="1,2"/>
<line x1="1472.5" y1="727" x2="1472.5" y2="745" stroke="#dcdcdc" stroke-width="1" />
<line x1="1472.5" y1="746" x2="1472.5" y2="965" stroke="#eeeeee" stroke-width="1" stroke-dasharray="1,2"/>
<line x1="1561.5" y1="727" x2="1561.5" y2="745" stroke="#dcdcdc" stroke-width="1" />
<line x1="1561.5" y1="746" x2="1561.5" y2="965" stroke="#eeeeee" stroke-width="1" stroke-dasharray="1,2"/>
<line x1="1617.5" y1="727" x2="1617.5" y2="745" stroke="#dcdcdc" stroke-width="1" />
<line x1="1617.5" y1="746" x2="1617.5" y2="965" stroke="#eeeeee" stroke-width="1" stroke-dasharray="1,2"/>
<line x1="1817.5" y1="727" x2="1817.5" y2="745" stroke="#dcdcdc" stroke-width="1" />
<line x1="1817.5" y1="746" x2="1817.5" y2="965" stroke="#eeeeee" stroke-width="1" stroke-dasharray="1,2"/>
<text x="715" y="741.5" font-size="11" font-family='"Liberation Sans", sans-serif' fill="#000" font-weight="normal" text-anchor="start" textLength="33.5" lengthAdjust="spacingAndGlyphs" >Passes</text>
<text x="766" y="741.5" font-size="11" font-family='"Liberation Sans", sans-serif' fill="#000" font-weight="normal" text-anchor="start" textLength="23.7" lengthAdjust="spacingAndGlyphs" >Date</text>
<text x="835.5" y="741.5" font-size="11" font-family='"Liberation Sans", sans-serif' fill="#000" font-weight="normal" text-anchor="start" textLength="21.7" lengthAdjust="spacingAndGlyphs" >Time</text>
<text x="894" y="741.5" font-size="11" font-family='"Liberation Sans", sans-serif' fill="#000" font-weight="normal" text-anchor="start" textLength="56" lengthAdjust="spacingAndGlyphs" >Compaction</text>
<text x="968.5" y="741.5" font-size="11" font-family='"Liberation Sans", sans-serif' fill="#000" font-weight="normal" text-anchor="start" textLength="24.7" lengthAdjust="spacingAndGlyphs" >Jump</text>
<text x="1017.5" y="741.5" font-size="11" font-family='"Liberation Sans", sans-serif' fill="#000" font-weight="normal" text-anchor="start" textLength="29.4" lengthAdjust="spacingAndGlyphs" >Speed</text>
<text x="1067.5" y="741.5" font-size="11" font-family='"Liberation Sans", sans-serif' fill="#000" font-weight="normal" text-anchor="start" textLength="41.5" lengthAdjust="spacingAndGlyphs" >Direction</text>
<text x="1129.5" y="741.5" font-size="11" font-family='"Liberation Sans", sans-serif' fill="#000" font-weight="normal" text-anchor="start" textLength="50.4" lengthAdjust="spacingAndGlyphs" >Frequency</text>
<text x="1200.5" y="741.5" font-size="11" font-family='"Liberation Sans", sans-serif' fill="#000" font-weight="normal" text-anchor="start" textLength="46.6" lengthAdjust="spacingAndGlyphs" >Amplitude</text>
<text x="1267.5" y="741.5" font-size="11" font-family='"Liberation Sans", sans-serif' fill="#000" font-weight="normal" text-anchor="start" textLength="62" lengthAdjust="spacingAndGlyphs" >Temperature</text>
<text x="1349.5" y="741.5" font-size="11" font-family='"Liberation Sans", sans-serif' fill="#000" font-weight="normal" text-anchor="start" textLength="53" lengthAdjust="spacingAndGlyphs" >Machine ID</text>
<text x="1478.5" y="741.5" font-size="11" font-family='"Liberation Sans", sans-serif' fill="#000" font-weight="normal" text-anchor="start" textLength="69" lengthAdjust="spacingAndGlyphs" >Name Machine</text>
<text x="1567.5" y="741.5" font-size="11" font-family='"Liberation Sans", sans-serif' fill="#000" font-weight="normal" text-anchor="start" textLength="35.3" lengthAdjust="spacingAndGlyphs" >GPS Fix</text>
<text x="1623" y="741.5" font-size="11" font-family='"Liberation Sans", sans-serif' fill="#000" font-weight="normal" text-anchor="start" textLength="38.4" lengthAdjust="spacingAndGlyphs" >GPS Sat</text>
<text x="756" y="760" font-size="11" font-family='"Liberation Sans", sans-serif' fill="#000" font-weight="normal" text-anchor="end" >1</text>
<text x="769.5" y="760" font-size="11" font-family='"Liberation Sans", sans-serif' fill="#000" font-weight="normal" text-anchor="start" textLength="55.6" lengthAdjust="spacingAndGlyphs" >18/11/2014</text>
<text x="838.5" y="760" font-size="11" font-family='"Liberation Sans", sans-serif' fill="#000" font-weight="normal" text-anchor="start" textLength="43.8" lengthAdjust="spacingAndGlyphs" >10:33:57</text>
<text x="957.5" y="760" font-size="11" font-family='"Liberation Sans", sans-serif' fill="#000" font-weight="normal" text-anchor="end" textLength="34.7" lengthAdjust="spacingAndGlyphs" >&lt;n.a.&gt;</text>
<text x="1006.5" y="760" font-size="11" font-family='"Liberation Sans", sans-serif' fill="#000" font-weight="normal" text-anchor="end" textLength="34.7" lengthAdjust="spacingAndGlyphs" >&lt;n.a.&gt;</text>
<text x="1056.5" y="760" font-size="11" font-family='"Liberation Sans", sans-serif' fill="#000" font-weight="normal" text-anchor="end" textLength="22.5" lengthAdjust="spacingAndGlyphs" >6.00</text>
<text x="1069.5" y="760" font-size="11" font-family='"Liberation Sans", sans-serif' fill="#000" font-weight="normal" text-anchor="start" textLength="39.4" lengthAdjust="spacingAndGlyphs" >Forward</text>
<text x="1189.5" y="760" font-size="11" font-family='"Liberation Sans", sans-serif' fill="#000" font-weight="normal" text-anchor="end" textLength="34.7" lengthAdjust="spacingAndGlyphs" >&lt;n.a.&gt;</text>
<text x="1256.5" y="760" font-size="11" font-family='"Liberation Sans", sans-serif' fill="#000" font-weight="normal" text-anchor="end" textLength="34.7" lengthAdjust="spacingAndGlyphs" >&lt;n.a.&gt;</text>
<text x="1339" y="760" font-size="11" font-family='"Liberation Sans", sans-serif' fill="#000" font-weight="normal" text-anchor="end" textLength="29" lengthAdjust="spacingAndGlyphs" >97.00</text>
<text x="1351" y="760" font-size="11" font-family='"Liberation Sans", sans-serif' fill="#000" font-weight="normal" text-anchor="start" textLength="117" lengthAdjust="spacingAndGlyphs" >M_000182BE_00000001</text>
<text x="1481" y="760" font-size="11" font-family='"Liberation Sans", sans-serif' fill="#000" font-weight="normal" text-anchor="start" textLength="41.5" lengthAdjust="spacingAndGlyphs" >151 NCC</text>
<text x="1569" y="760" font-size="11" font-family='"Liberation Sans", sans-serif' fill="#000" font-weight="normal" text-anchor="start" textLength="42" lengthAdjust="spacingAndGlyphs" >DGPS fix</text>
<text x="1813.5" y="760" font-size="11" font-family='"Liberation Sans", sans-serif' fill="#000" font-weight="normal" text-anchor="end" >9</text>
<text x="756" y="778" font-size="11" font-family='"Liberation Sans", sans-serif' fill="#000" font-weight="normal" text-anchor="end" >2</text>
<text x="769.5" y="778" font-size="11" font-family='"Liberation Sans", sans-serif' fill="#000" font-weight="normal" text-anchor="start" textLength="55.6" lengthAdjust="spacingAndGlyphs" >18/11/2014</text>
<text x="838.5" y="778" font-size="11" font-family='"Liberation Sans", sans-serif' fill="#000" font-weight="normal" text-anchor="start" textLength="43.8" lengthAdjust="spacingAndGlyphs" >10:34:25</text>
<text x="957.5" y="778" font-size="11" font-family='"Liberation Sans", sans-serif' fill="#000" font-weight="normal" text-anchor="end" textLength="34.7" lengthAdjust="spacingAndGlyphs" >&lt;n.a.&gt;</text>
<text x="1006.5" y="778" font-size="11" font-family='"Liberation Sans", sans-serif' fill="#000" font-weight="normal" text-anchor="end" textLength="34.7" lengthAdjust="spacingAndGlyphs" >&lt;n.a.&gt;</text>
<text x="1056.5" y="778" font-size="11" font-family='"Liberation Sans", sans-serif' fill="#000" font-weight="normal" text-anchor="end" textLength="22.5" lengthAdjust="spacingAndGlyphs" >4.80</text>
<text x="1069.5" y="778" font-size="11" font-family='"Liberation Sans", sans-serif' fill="#000" font-weight="normal" text-anchor="start" textLength="45.7" lengthAdjust="spacingAndGlyphs" >Backward</text>
<text x="1189.5" y="778" font-size="11" font-family='"Liberation Sans", sans-serif' fill="#000" font-weight="normal" text-anchor="end" textLength="34.7" lengthAdjust="spacingAndGlyphs" >&lt;n.a.&gt;</text>
<text x="1256.5" y="778" font-size="11" font-family='"Liberation Sans", sans-serif' fill="#000" font-weight="normal" text-anchor="end" textLength="34.7" lengthAdjust="spacingAndGlyphs" >&lt;n.a.&gt;</text>
<text x="1339" y="778" font-size="11" font-family='"Liberation Sans", sans-serif' fill="#000" font-weight="normal" text-anchor="end" textLength="29" lengthAdjust="spacingAndGlyphs" >93.00</text>
<text x="1351" y="778" font-size="11" font-family='"Liberation Sans", sans-serif' fill="#000" font-weight="normal" text-anchor="start" textLength="117" lengthAdjust="spacingAndGlyphs" >M_000182BE_00000001</text>
<text x="1481" y="778" font-size="11" font-family='"Liberation Sans", sans-serif' fill="#000" font-weight="normal" text-anchor="start" textLength="41.5" lengthAdjust="spacingAndGlyphs" >151 NCC</text>
<text x="1569" y="778" font-size="11" font-family='"Liberation Sans", sans-serif' fill="#000" font-weight="normal" text-anchor="start" textLength="42" lengthAdjust="spacingAndGlyphs" >DGPS fix</text>
<text x="1813.5" y="778" font-size="11" font-family='"Liberation Sans", sans-serif' fill="#000" font-weight="normal" text-anchor="end" >9</text>
<text x="756" y="796" font-size="11" font-family='"Liberation Sans", sans-serif' fill="#000" font-weight="normal" text-anchor="end" >3</text>
<text x="769.5" y="796" font-size="11" font-family='"Liberation Sans", sans-serif' fill="#000" font-weight="normal" text-anchor="start" textLength="55.6" lengthAdjust="spacingAndGlyphs" >18/11/2014</text>
<text x="838.5" y="796" font-size="11" font-family='"Liberation Sans", sans-serif' fill="#000" font-weight="normal" text-anchor="start" textLength="43.8" lengthAdjust="spacingAndGlyphs" >10:35:08</text>
<text x="957.5" y="796" font-size="11" font-family='"Liberation Sans", sans-serif' fill="#000" font-weight="normal" text-anchor="end" textLength="34.7" lengthAdjust="spacingAndGlyphs" >&lt;n.a.&gt;</text>
<text x="1006.5" y="796" font-size="11" font-family='"Liberation Sans", sans-serif' fill="#000" font-weight="normal" text-anchor="end" textLength="34.7" lengthAdjust="spacingAndGlyphs" >&lt;n.a.&gt;</text>
<text x="1056.5" y="796" font-size="11" font-family='"Liberation Sans", sans-serif' fill="#000" font-weight="normal" text-anchor="end" textLength="22.5" lengthAdjust="spacingAndGlyphs" >5.50</text>
<text x="1069.5" y="796" font-size="11" font-family='"Liberation Sans", sans-serif' fill="#000" font-weight="normal" text-anchor="start" textLength="39.4" lengthAdjust="spacingAndGlyphs" >Forward</text>
<text x="1189.5" y="796" font-size="11" font-family='"Liberation Sans", sans-serif' fill="#000" font-weight="normal" text-anchor="end" textLength="34.7" lengthAdjust="spacingAndGlyphs" >&lt;n.a.&gt;</text>
<text x="1256.5" y="796" font-size="11" font-family='"Liberation Sans", sans-serif' fill="#000" font-weight="normal" text-anchor="end" textLength="34.7" lengthAdjust="spacingAndGlyphs" >&lt;n.a.&gt;</text>
<text x="1339" y="796" font-size="11" font-family='"Liberation Sans", sans-serif' fill="#000" font-weight="normal" text-anchor="end" textLength="29" lengthAdjust="spacingAndGlyphs" >92.00</text>
<text x="1351" y="796" font-size="11" font-family='"Liberation Sans", sans-serif' fill="#000" font-weight="normal" text-anchor="start" textLength="117" lengthAdjust="spacingAndGlyphs" >M_000182BE_00000001</text>
<text x="1481" y="796" font-size="11" font-family='"Liberation Sans", sans-serif' fill="#000" font-weight="normal" text-anchor="start" textLength="41.5" lengthAdjust="spacingAndGlyphs" >151 NCC</text>
<text x="1569" y="796" font-size="11" font-family='"Liberation Sans", sans-serif' fill="#000" font-weight="normal" text-anchor="start" textLength="42" lengthAdjust="spacingAndGlyphs" >DGPS fix</text>
<text x="1813.5" y="796" font-size="11" font-family='"Liberation Sans", sans-serif' fill="#000" font-weight="normal" text-anchor="end" >9</text>
<text x="756" y="814" font-size="11" font-family='"Liberation Sans", sans-serif' fill="#000" font-weight="normal" text-anchor="end" >4</text>
<text x="769.5" y="814" font-size="11" font-family='"Liberation Sans", sans-serif' fill="#000" font-weight="normal" text-anchor="start" textLength="55.6" lengthAdjust="spacingAndGlyphs" >18/11/2014</text>
<text x="838.5" y="814" font-size="11" font-family='"Liberation Sans", sans-serif' fill="#000" font-weight="normal" text-anchor="start" textLength="43.8" lengthAdjust="spacingAndGlyphs" >10:37:35</text>
<text x="957.5" y="814" font-size="11" font-family='"Liberation Sans", sans-serif' fill="#000" font-weight="normal" text-anchor="end" textLength="34.7" lengthAdjust="spacingAndGlyphs" >&lt;n.a.&gt;</text>
<text x="1006.5" y="814" font-size="11" font-family='"Liberation Sans", sans-serif' fill="#000" font-weight="normal" text-anchor="end" textLength="34.7" lengthAdjust="spacingAndGlyphs" >&lt;n.a.&gt;</text>
<text x="1056.5" y="814" font-size="11" font-family='"Liberation Sans", sans-serif' fill="#000" font-weight="normal" text-anchor="end" textLength="22.5" lengthAdjust="spacingAndGlyphs" >6.40</text>
<text x="1069.5" y="814" font-size="11" font-family='"Liberation Sans", sans-serif' fill="#000" font-weight="normal" text-anchor="start" textLength="39.4" lengthAdjust="spacingAndGlyphs" >Forward</text>
<text x="1189.5" y="814" font-size="11" font-family='"Liberation Sans", sans-serif' fill="#000" font-weight="normal" text-anchor="end" textLength="34.7" lengthAdjust="spacingAndGlyphs" >&lt;n.a.&gt;</text>
<text x="1256.5" y="814" font-size="11" font-family='"Liberation Sans", sans-serif' fill="#000" font-weight="normal" text-anchor="end" textLength="34.7" lengthAdjust="spacingAndGlyphs" >&lt;n.a.&gt;</text>
<text x="1339" y="814" font-size="11" font-family='"Liberation Sans", sans-serif' fill="#000" font-weight="normal" text-anchor="end" textLength="29" lengthAdjust="spacingAndGlyphs" >88.00</text>
<text x="1351" y="814" font-size="11" font-family='"Liberation Sans", sans-serif' fill="#000" font-weight="normal" text-anchor="start" textLength="117" lengthAdjust="spacingAndGlyphs" >M_000182BE_00000001</text>
<text x="1481" y="814" font-size="11" font-family='"Liberation Sans", sans-serif' fill="#000" font-weight="normal" text-anchor="start" textLength="41.5" lengthAdjust="spacingAndGlyphs" >151 NCC</text>
<text x="1569" y="814" font-size="11" font-family='"Liberation Sans", sans-serif' fill="#000" font-weight="normal" text-anchor="start" textLength="42" lengthAdjust="spacingAndGlyphs" >DGPS fix</text>
<text x="1813.5" y="814" font-size="11" font-family='"Liberation Sans", sans-serif' fill="#000" font-weight="normal" text-anchor="end" >9</text>
<text x="756" y="832" font-size="11" font-family='"Liberation Sans", sans-serif' fill="#000" font-weight="normal" text-anchor="end" >5</text>
<text x="769.5" y="832" font-size="11" font-family='"Liberation Sans", sans-serif' fill="#000" font-weight="normal" text-anchor="start" textLength="55.6" lengthAdjust="spacingAndGlyphs" >18/11/2014</text>
<text x="838.5" y="832" font-size="11" font-family='"Liberation Sans", sans-serif' fill="#000" font-weight="normal" text-anchor="start" textLength="43.8" lengthAdjust="spacingAndGlyphs" >10:38:22</text>
<text x="957.5" y="832" font-size="11" font-family='"Liberation Sans", sans-serif' fill="#000" font-weight="normal" text-anchor="end" textLength="34.7" lengthAdjust="spacingAndGlyphs" >&lt;n.a.&gt;</text>
<text x="1006.5" y="832" font-size="11" font-family='"Liberation Sans", sans-serif' fill="#000" font-weight="normal" text-anchor="end" textLength="34.7" lengthAdjust="spacingAndGlyphs" >&lt;n.a.&gt;</text>
<text x="1056.5" y="832" font-size="11" font-family='"Liberation Sans", sans-serif' fill="#000" font-weight="normal" text-anchor="end" textLength="22.5" lengthAdjust="spacingAndGlyphs" >5.80</text>
<text x="1069.5" y="832" font-size="11" font-family='"Liberation Sans", sans-serif' fill="#000" font-weight="normal" text-anchor="start" textLength="45.7" lengthAdjust="spacingAndGlyphs" >Backward</text>
<text x="1189.5" y="832" font-size="11" font-family='"Liberation Sans", sans-serif' fill="#000" font-weight="normal" text-anchor="end" textLength="34.7" lengthAdjust="spacingAndGlyphs" >&lt;n.a.&gt;</text>
<text x="1256.5" y="832" font-size="11" font-family='"Liberation Sans", sans-serif' fill="#000" font-weight="normal" text-anchor="end" textLength="34.7" lengthAdjust="spacingAndGlyphs" >&lt;n.a.&gt;</text>
<text x="1339" y="832" font-size="11" font-family='"Liberation Sans", sans-serif' fill="#000" font-weight="normal" text-anchor="end" textLength="29" lengthAdjust="spacingAndGlyphs" >80.00</text>
<text x="1351" y="832" font-size="11" font-family='"Liberation Sans", sans-serif' fill="#000" font-weight="normal" text-anchor="start" textLength="117" lengthAdjust="spacingAndGlyphs" >M_000182BE_00000001</text>
<text x="1481" y="832" font-size="11" font-family='"Liberation Sans", sans-serif' fill="#000" font-weight="normal" text-anchor="start" textLength="41.5" lengthAdjust="spacingAndGlyphs" >151 NCC</text>
<text x="1569" y="832" font-size="11" font-family='"Liberation Sans", sans-serif' fill="#000" font-weight="normal" text-anchor="start" textLength="42" lengthAdjust="spacingAndGlyphs" >DGPS fix</text>
<text x="1813.5" y="832" font-size="11" font-family='"Liberation Sans", sans-serif' fill="#000" font-weight="normal" text-anchor="end" >6</text>
<text x="756" y="850" font-size="11" font-family='"Liberation Sans", sans-serif' fill="#000" font-weight="normal" text-anchor="end" >6</text>
<text x="769.5" y="850" font-size="11" font-family='"Liberation Sans", sans-serif' fill="#000" font-weight="normal" text-anchor="start" textLength="55.6" lengthAdjust="spacingAndGlyphs" >18/11/2014</text>
<text x="838.5" y="850" font-size="11" font-family='"Liberation Sans", sans-serif' fill="#000" font-weight="normal" text-anchor="start" textLength="43.8" lengthAdjust="spacingAndGlyphs" >10:38:40</text>
<text x="957.5" y="850" font-size="11" font-family='"Liberation Sans", sans-serif' fill="#000" font-weight="normal" text-anchor="end" textLength="34.7" lengthAdjust="spacingAndGlyphs" >&lt;n.a.&gt;</text>
<text x="1006.5" y="850" font-size="11" font-family='"Liberation Sans", sans-serif' fill="#000" font-weight="normal" text-anchor="end" textLength="34.7" lengthAdjust="spacingAndGlyphs" >&lt;n.a.&gt;</text>
<text x="1056.5" y="850" font-size="11" font-family='"Liberation Sans", sans-serif' fill="#000" font-weight="normal" text-anchor="end" textLength="22.5" lengthAdjust="spacingAndGlyphs" >5.40</text>
<text x="1069.5" y="850" font-size="11" font-family='"Liberation Sans", sans-serif' fill="#000" font-weight="normal" text-anchor="start" textLength="39.4" lengthAdjust="spacingAndGlyphs" >Forward</text>
<text x="1189.5" y="850" font-size="11" font-family='"Liberation Sans", sans-serif' fill="#000" font-weight="normal" text-anchor="end" textLength="34.7" lengthAdjust="spacingAndGlyphs" >&lt;n.a.&gt;</text>
<text x="1256.5" y="850" font-size="11" font-family='"Liberation Sans", sans-serif' fill="#000" font-weight="normal" text-anchor="end" textLength="34.7" lengthAdjust="spacingAndGlyphs" >&lt;n.a.&gt;</text>
<text x="1339" y="850" font-size="11" font-family='"Liberation Sans", sans-serif' fill="#000" font-weight="normal" text-anchor="end" textLength="29" lengthAdjust="spacingAndGlyphs" >88.00</text>
<text x="1351" y="850" font-size="11" font-family='"Liberation Sans", sans-serif' fill="#000" font-weight="normal" text-anchor="start" textLength="117" lengthAdjust="spacingAndGlyphs" >M_000182BE_00000001</text>
<text x="1481" y="850" font-size="11" font-family='"Liberation Sans", sans-serif' fill="#000" font-weight="normal" text-anchor="start" textLength="41.5" lengthAdjust="spacingAndGlyphs" >151 NCC</text>
<text x="1569" y="850" font-size="11" font-family='"Liberation Sans", sans-serif' fill="#000" font-weight="normal" text-anchor="start" textLength="42" lengthAdjust="spacingAndGlyphs" >DGPS fix</text>
<text x="1813.5" y="850" font-size="11" font-family='"Liberation Sans", sans-serif' fill="#000" font-weight="normal" text-anchor="end" >6</text>
<text x="756" y="868" font-size="11" font-family='"Liberation Sans", sans-serif' fill="#000" font-weight="normal" text-anchor="end" >7</text>
<text x="769.5" y="868" font-size="11" font-family='"Liberation Sans", sans-serif' fill="#000" font-weight="normal" text-anchor="start" textLength="55.6" lengthAdjust="spacingAndGlyphs" >18/11/2014</text>
<text x="838.5" y="868" font-size="11" font-family='"Liberation Sans", sans-serif' fill="#000" font-weight="normal" text-anchor="start" textLength="43.8" lengthAdjust="spacingAndGlyphs" >10:39:59</text>
<text x="957.5" y="868" font-size="11" font-family='"Liberation Sans", sans-serif' fill="#000" font-weight="normal" text-anchor="end" textLength="34.7" lengthAdjust="spacingAndGlyphs" >&lt;n.a.&gt;</text>
<text x="1006.5" y="868" font-size="11" font-family='"Liberation Sans", sans-serif' fill="#000" font-weight="normal" text-anchor="end" textLength="34.7" lengthAdjust="spacingAndGlyphs" >&lt;n.a.&gt;</text>
<text x="1056.5" y="868" font-size="11" font-family='"Liberation Sans", sans-serif' fill="#000" font-weight="normal" text-anchor="end" textLength="22.5" lengthAdjust="spacingAndGlyphs" >6.00</text>
<text x="1069.5" y="868" font-size="11" font-family='"Liberation Sans", sans-serif' fill="#000" font-weight="normal" text-anchor="start" textLength="39.4" lengthAdjust="spacingAndGlyphs" >Forward</text>
<text x="1189.5" y="868" font-size="11" font-family='"Liberation Sans", sans-serif' fill="#000" font-weight="normal" text-anchor="end" textLength="34.7" lengthAdjust="spacingAndGlyphs" >&lt;n.a.&gt;</text>
<text x="1256.5" y="868" font-size="11" font-family='"Liberation Sans", sans-serif' fill="#000" font-weight="normal" text-anchor="end" textLength="34.7" lengthAdjust="spacingAndGlyphs" >&lt;n.a.&gt;</text>
<text x="1339" y="868" font-size="11" font-family='"Liberation Sans", sans-serif' fill="#000" font-weight="normal" text-anchor="end" textLength="29" lengthAdjust="spacingAndGlyphs" >78.00</text>
<text x="1351" y="868" font-size="11" font-family='"Liberation Sans", sans-serif' fill="#000" font-weight="normal" text-anchor="start" textLength="117" lengthAdjust="spacingAndGlyphs" >M_000182BE_00000001</text>
<text x="1481" y="868" font-size="11" font-family='"Liberation Sans", sans-serif' fill="#000" font-weight="normal" text-anchor="start" textLength="41.5" lengthAdjust="spacingAndGlyphs" >151 NCC</text>
<text x="1569" y="868" font-size="11" font-family='"Liberation Sans", sans-serif' fill="#000" font-weight="normal" text-anchor="start" textLength="42" lengthAdjust="spacingAndGlyphs" >DGPS fix</text>
<text x="1813.5" y="868" font-size="11" font-family='"Liberation Sans", sans-serif' fill="#000" font-weight="normal" text-anchor="end" >10</text>
<text x="756" y="886" font-size="11" font-family='"Liberation Sans", sans-serif' fill="#000" font-weight="normal" text-anchor="end" >8</text>
<text x="769.5" y="886" font-size="11" font-family='"Liberation Sans", sans-serif' fill="#000" font-weight="normal" text-anchor="start" textLength="55.6" lengthAdjust="spacingAndGlyphs" >18/11/2014</text>
<text x="838.5" y="886" font-size="11" font-family='"Liberation Sans", sans-serif' fill="#000" font-weight="normal" text-anchor="start" textLength="43.8" lengthAdjust="spacingAndGlyphs" >10:40:09</text>
<text x="957.5" y="886" font-size="11" font-family='"Liberation Sans", sans-serif' fill="#000" font-weight="normal" text-anchor="end" textLength="34.7" lengthAdjust="spacingAndGlyphs" >&lt;n.a.&gt;</text>
<text x="1006.5" y="886" font-size="11" font-family='"Liberation Sans", sans-serif' fill="#000" font-weight="normal" text-anchor="end" textLength="34.7" lengthAdjust="spacingAndGlyphs" >&lt;n.a.&gt;</text>
<text x="1056.5" y="886" font-size="11" font-family='"Liberation Sans", sans-serif' fill="#000" font-weight="normal" text-anchor="end" textLength="22.5" lengthAdjust="spacingAndGlyphs" >7.40</text>
<text x="1069.5" y="886" font-size="11" font-family='"Liberation Sans", sans-serif' fill="#000" font-weight="normal" text-anchor="start" textLength="45.7" lengthAdjust="spacingAndGlyphs" >Backward</text>
<text x="1189.5" y="886" font-size="11" font-family='"Liberation Sans", sans-serif' fill="#000" font-weight="normal" text-anchor="end" textLength="34.7" lengthAdjust="spacingAndGlyphs" >&lt;n.a.&gt;</text>
<text x="1256.5" y="886" font-size="11" font-family='"Liberation Sans", sans-serif' fill="#000" font-weight="normal" text-anchor="end" textLength="34.7" lengthAdjust="spacingAndGlyphs" >&lt;n.a.&gt;</text>
<text x="1339" y="886" font-size="11" font-family='"Liberation Sans", sans-serif' fill="#000" font-weight="normal" text-anchor="end" textLength="29" lengthAdjust="spacingAndGlyphs" >75.00</text>
<text x="1351" y="886" font-size="11" font-family='"Liberation Sans", sans-serif' fill="#000" font-weight="normal" text-anchor="start" textLength="117" lengthAdjust="spacingAndGlyphs" >M_000182BE_00000001</text>
<text x="1481" y="886" font-size="11" font-family='"Liberation Sans", sans-serif' fill="#000" font-weight="normal" text-anchor="start" textLength="41.5" lengthAdjust="spacingAndGlyphs" >151 NCC</text>
<text x="1569" y="886" font-size="11" font-family='"Liberation Sans", sans-serif' fill="#000" font-weight="normal" text-anchor="start" textLength="42" lengthAdjust="spacingAndGlyphs" >DGPS fix</text>
<text x="1813.5" y="886" font-size="11" font-family='"Liberation Sans", sans-serif' fill="#000" font-weight="normal" text-anchor="end" >10</text>
<text x="756" y="904" font-size="11" font-family='"Liberation Sans", sans-serif' fill="#000" font-weight="normal" text-anchor="end" >9</text>
<text x="769.5" y="904" font-size="11" font-family='"Liberation Sans", sans-serif' fill="#000" font-weight="normal" text-anchor="start" textLength="55.6" lengthAdjust="spacingAndGlyphs" >18/11/2014</text>
<text x="838.5" y="904" font-size="11" font-family='"Liberation Sans", sans-serif' fill="#000" font-weight="normal" text-anchor="start" textLength="43.8" lengthAdjust="spacingAndGlyphs" >10:41:01</text>
<text x="957.5" y="904" font-size="11" font-family='"Liberation Sans", sans-serif' fill="#000" font-weight="normal" text-anchor="end" textLength="34.7" lengthAdjust="spacingAndGlyphs" >&lt;n.a.&gt;</text>
<text x="1006.5" y="904" font-size="11" font-family='"Liberation Sans", sans-serif' fill="#000" font-weight="normal" text-anchor="end" textLength="34.7" lengthAdjust="spacingAndGlyphs" >&lt;n.a.&gt;</text>
<text x="1056.5" y="904" font-size="11" font-family='"Liberation Sans", sans-serif' fill="#000" font-weight="normal" text-anchor="end" textLength="29" lengthAdjust="spacingAndGlyphs" >10.20</text>
<text x="1069.5" y="904" font-size="11" font-family='"Liberation Sans", sans-serif' fill="#000" font-weight="normal" text-anchor="start" textLength="39.4" lengthAdjust="spacingAndGlyphs" >Forward</text>
<text x="1189.5" y="904" font-size="11" font-family='"Liberation Sans", sans-serif' fill="#000" font-weight="normal" text-anchor="end" textLength="34.7" lengthAdjust="spacingAndGlyphs" >&lt;n.a.&gt;</text>
<text x="1256.5" y="904" font-size="11" font-family='"Liberation Sans", sans-serif' fill="#000" font-weight="normal" text-anchor="end" textLength="34.7" lengthAdjust="spacingAndGlyphs" >&lt;n.a.&gt;</text>
<text x="1339" y="904" font-size="11" font-family='"Liberation Sans", sans-serif' fill="#000" font-weight="normal" text-anchor="end" textLength="29" lengthAdjust="spacingAndGlyphs" >67.00</text>
<text x="1351" y="904" font-size="11" font-family='"Liberation Sans", sans-serif' fill="#000" font-weight="normal" text-anchor="start" textLength="117" lengthAdjust="spacingAndGlyphs" >M_000182BE_00000001</text>
<text x="1481" y="904" font-size="11" font-family='"Liberation Sans", sans-serif' fill="#000" font-weight="normal" text-anchor="start" textLength="41.5" lengthAdjust="spacingAndGlyphs" >151 NCC</text>
<text x="1569" y="904" font-size="11" font-family='"Liberation Sans", sans-serif' fill="#000" font-weight="normal" text-anchor="start" textLength="42" lengthAdjust="spacingAndGlyphs" >DGPS fix</text>
<text x="1813.5" y="904" font-size="11" font-family='"Liberation Sans", sans-serif' fill="#000" font-weight="normal" text-anchor="end" >10</text>
<text x="756" y="922" font-size="11" font-family='"Liberation Sans", sans-serif' fill="#000" font-weight="normal" text-anchor="end" >10</text>
<text x="769.5" y="922" font-size="11" font-family='"Liberation Sans", sans-serif' fill="#000" font-weight="normal" text-anchor="start" textLength="55.6" lengthAdjust="spacingAndGlyphs" >18/11/2014</text>
<text x="838.5" y="922" font-size="11" font-family='"Liberation Sans", sans-serif' fill="#000" font-weight="normal" text-anchor="start" textLength="43.8" lengthAdjust="spacingAndGlyphs" >10:41:42</text>
<text x="957.5" y="922" font-size="11" font-family='"Liberation Sans", sans-serif' fill="#000" font-weight="normal" text-anchor="end" textLength="34.7" lengthAdjust="spacingAndGlyphs" >&lt;n.a.&gt;</text>
<text x="1006.5" y="922" font-size="11" font-family='"Liberation Sans", sans-serif' fill="#000" font-weight="normal" text-anchor="end" textLength="34.7" lengthAdjust="spacingAndGlyphs" >&lt;n.a.&gt;</text>
<text x="1056.5" y="922" font-size="11" font-family='"Liberation Sans", sans-serif' fill="#000" font-weight="normal" text-anchor="end" textLength="22.5" lengthAdjust="spacingAndGlyphs" >7.90</text>
<text x="1069.5" y="922" font-size="11" font-family='"Liberation Sans", sans-serif' fill="#000" font-weight="normal" text-anchor="start" textLength="45.7" lengthAdjust="spacingAndGlyphs" >Backward</text>
<text x="1189.5" y="922" font-size="11" font-family='"Liberation Sans", sans-serif' fill="#000" font-weight="normal" text-anchor="end" textLength="34.7" lengthAdjust="spacingAndGlyphs" >&lt;n.a.&gt;</text>
<text x="1256.5" y="922" font-size="11" font-family='"Liberation Sans", sans-serif' fill="#000" font-weight="normal" text-anchor="end" textLength="34.7" lengthAdjust="spacingAndGlyphs" >&lt;n.a.&gt;</text>
<text x="1339" y="922" font-size="11" font-family='"Liberation Sans", sans-serif' fill="#000" font-weight="normal" text-anchor="end" textLength="29" lengthAdjust="spacingAndGlyphs" >76.00</text>
<text x="1351" y="922" font-size="11" font-family='"Liberation Sans", sans-serif' fill="#000" font-weight="normal" text-anchor="start" textLength="117" lengthAdjust="spacingAndGlyphs" >M_000182BE_00000001</text>
<text x="1481" y="922" font-size="11" font-family='"Liberation Sans", sans-serif' fill="#000" font-weight="normal" text-anchor="start" textLength="41.5" lengthAdjust="spacingAndGlyphs" >151 NCC</text>
<text x="1569" y="922" font-size="11" font-family='"Liberation Sans", sans-serif' fill="#000" font-weight="normal" text-anchor="start" textLength="42" lengthAdjust="spacingAndGlyphs" >DGPS fix</text>
<text x="1813.5" y="922" font-size="11" font-family='"Liberation Sans", sans-serif' fill="#000" font-weight="normal" text-anchor="end" >10</text>
<text x="756" y="940" font-size="11" font-family='"Liberation Sans", sans-serif' fill="#000" font-weight="normal" text-anchor="end" >11</text>
<text x="769.5" y="940" font-size="11" font-family='"Liberation Sans", sans-serif' fill="#000" font-weight="normal" text-anchor="start" textLength="55.6" lengthAdjust="spacingAndGlyphs" >18/11/2014</text>
<text x="838.5" y="940" font-size="11" font-family='"Liberation Sans", sans-serif' fill="#000" font-weight="normal" text-anchor="start" textLength="43.8" lengthAdjust="spacingAndGlyphs" >10:51:25</text>
<text x="957.5" y="940" font-size="11" font-family='"Liberation Sans", sans-serif' fill="#000" font-weight="normal" text-anchor="end" textLength="34.7" lengthAdjust="spacingAndGlyphs" >&lt;n.a.&gt;</text>
<text x="1006.5" y="940" font-size="11" font-family='"Liberation Sans", sans-serif' fill="#000" font-weight="normal" text-anchor="end" textLength="34.7" lengthAdjust="spacingAndGlyphs" >&lt;n.a.&gt;</text>
<text x="1056.5" y="940" font-size="11" font-family='"Liberation Sans", sans-serif' fill="#000" font-weight="normal" text-anchor="end" textLength="22.5" lengthAdjust="spacingAndGlyphs" >7.80</text>
<text x="1069.5" y="940" font-size="11" font-family='"Liberation Sans", sans-serif' fill="#000" font-weight="normal" text-anchor="start" textLength="45.7" lengthAdjust="spacingAndGlyphs" >Backward</text>
<text x="1189.5" y="940" font-size="11" font-family='"Liberation Sans", sans-serif' fill="#000" font-weight="normal" text-anchor="end" textLength="34.7" lengthAdjust="spacingAndGlyphs" >&lt;n.a.&gt;</text>
<text x="1256.5" y="940" font-size="11" font-family='"Liberation Sans", sans-serif' fill="#000" font-weight="normal" text-anchor="end" textLength="34.7" lengthAdjust="spacingAndGlyphs" >&lt;n.a.&gt;</text>
<text x="1339" y="940" font-size="11" font-family='"Liberation Sans", sans-serif' fill="#000" font-weight="normal" text-anchor="end" textLength="29" lengthAdjust="spacingAndGlyphs" >72.00</text>
<text x="1351" y="940" font-size="11" font-family='"Liberation Sans", sans-serif' fill="#000" font-weight="normal" text-anchor="start" textLength="117" lengthAdjust="spacingAndGlyphs" >M_000182BE_00000001</text>
<text x="1481" y="940" font-size="11" font-family='"Liberation Sans", sans-serif' fill="#000" font-weight="normal" text-anchor="start" textLength="41.5" lengthAdjust="spacingAndGlyphs" >151 NCC</text>
<text x="1569" y="940" font-size="11" font-family='"Liberation Sans", sans-serif' fill="#000" font-weight="normal" text-anchor="start" textLength="42" lengthAdjust="spacingAndGlyphs" >DGPS fix</text>
<text x="1813.5" y="940" font-size="11" font-family='"Liberation Sans", sans-serif' fill="#000" font-weight="normal" text-anchor="end" >10</text>
<text x="756" y="958" font-size="11" font-family='"Liberation Sans", sans-serif' fill="#000" font-weight="normal" text-anchor="end" >12</text>
<text x="769.5" y="958" font-size="11" font-family='"Liberation Sans", sans-serif' fill="#000" font-weight="normal" text-anchor="start" textLength="55.6" lengthAdjust="spacingAndGlyphs" >18/11/2014</text>
<text x="838.5" y="958" font-size="11" font-family='"Liberation Sans", sans-serif' fill="#000" font-weight="normal" text-anchor="start" textLength="43.8" lengthAdjust="spacingAndGlyphs" >10:51:45</text>
<text x="957.5" y="958" font-size="11" font-family='"Liberation Sans", sans-serif' fill="#000" font-weight="normal" text-anchor="end" textLength="34.7" lengthAdjust="spacingAndGlyphs" >&lt;n.a.&gt;</text>
<text x="1006.5" y="958" font-size="11" font-family='"Liberation Sans", sans-serif' fill="#000" font-weight="normal" text-anchor="end" textLength="34.7" lengthAdjust="spacingAndGlyphs" >&lt;n.a.&gt;</text>
<text x="1056.5" y="958" font-size="11" font-family='"Liberation Sans", sans-serif' fill="#000" font-weight="normal" text-anchor="end" textLength="22.5" lengthAdjust="spacingAndGlyphs" >5.00</text>
<text x="1069.5" y="958" font-size="11" font-family='"Liberation Sans", sans-serif' fill="#000" font-weight="normal" text-anchor="start" textLength="39.4" lengthAdjust="spacingAndGlyphs" >Forward</text>
<text x="1189.5" y="958" font-size="11" font-family='"Liberation Sans", sans-serif' fill="#000" font-weight="normal" text-anchor="end" textLength="34.7" lengthAdjust="spacingAndGlyphs" >&lt;n.a.&gt;</text>
<text x="1256.5" y="958" font-size="11" font-family='"Liberation Sans", sans-serif' fill="#000" font-weight="normal" text-anchor="end" textLength="34.7" lengthAdjust="spacingAndGlyphs" >&lt;n.a.&gt;</text>
<text x="1339" y="958" font-size="11" font-family='"Liberation Sans", sans-serif' fill="#000" font-weight="normal" text-anchor="end" textLength="29" lengthAdjust="spacingAndGlyphs" >72.00</text>
<text x="1351" y="958" font-size="11" font-family='"Liberation Sans", sans-serif' fill="#000" font-weight="normal" text-anchor="start" textLength="117" lengthAdjust="spacingAndGlyphs" >M_000182BE_00000001</text>
<text x="1481" y="958" font-size="11" font-family='"Liberation Sans", sans-serif' fill="#000" font-weight="normal" text-anchor="start" textLength="41.5" lengthAdjust="spacingAndGlyphs" >151 NCC</text>
<text x="1569" y="958" font-size="11" font-family='"Liberation Sans", sans-serif' fill="#000" font-weight="normal" text-anchor="start" textLength="42" lengthAdjust="spacingAndGlyphs" >DGPS fix</text>
<text x="1813.5" y="958" font-size="11" font-family='"Liberation Sans", sans-serif' fill="#000" font-weight="normal" text-anchor="end" >10</text>
<rect x="349.5" y="981.5" width="25" height="23" fill="url(#gB1)" stroke="#4a4a4a" stroke-width="1.2" rx="3" />
<rect x="354" y="982" width="19" height="2.5" fill="#3a6ab8" />
<path d="M363.5,986 L373,995.6 L367.6,995.6 L367.6,1004 L359,1004 L359,995.6 L354.5,995.6 Z" fill="url(#gArrB)" stroke="#2a4a90" stroke-width="0.8" />
<rect x="380.5" y="980.5" width="25" height="25" fill="url(#gB1)" stroke="#4a4a4a" stroke-width="1.2" rx="3" />
<circle cx="393.4" cy="992.5" r="10" fill="url(#gBall)" stroke="#3a9a20" stroke-width="1"/>
<rect x="418.5" y="981.5" width="10" height="8" fill="#f4f4f4" stroke="#9a9a9a" stroke-width="1" />
<path d="M413,989 L431,989 L433,993 L433,1001 L411,1001 L411,993 Z" fill="#ececec" stroke="#9a9a9a" stroke-width="1" />
<rect x="414" y="998" width="12" height="2" fill="#333" />
<rect x="415" y="1000" width="10" height="4" fill="#f0f0f0" stroke="#999" stroke-width="0.8" />
<rect x="424.5" y="993.5" width="10" height="10" fill="#eeeeee" stroke="#222" stroke-width="1" stroke-dasharray="2,1.5"/>
<circle cx="449" cy="990.6" r="8" fill="#a8c8ec" stroke="#a0a0a0" stroke-width="1.5"/>
<line x1="454.5" y1="996.5" x2="461" y2="1003" stroke="#666" stroke-width="2.6" stroke-linecap="round"/>
<path d="M444.5,988.6 L444.5,986.1 L447.0,986.1" fill="none" stroke="#3a6ac0" stroke-width="1" />
<path d="M453.5,988.6 L453.5,986.1 L451.0,986.1" fill="none" stroke="#3a6ac0" stroke-width="1" />
<path d="M444.5,992.6 L444.5,995.1 L447.0,995.1" fill="none" stroke="#3a6ac0" stroke-width="1" />
<path d="M453.5,992.6 L453.5,995.1 L451.0,995.1" fill="none" stroke="#3a6ac0" stroke-width="1" />
<rect x="467.5" y="980.5" width="1445" height="24" fill="#fff" stroke="#d4dae2" stroke-width="1" />
<line x1="467.5" y1="980.5" x2="1912.5" y2="980.5" stroke="#a8a8a8" stroke-width="1" />
<text x="469.5" y="995" font-size="11" font-family='"Liberation Sans", sans-serif' fill="#000" font-weight="normal" text-anchor="start" textLength="132" lengthAdjust="spacingAndGlyphs" >SubArea #1 [Please enter!]</text>
<rect x="342" y="1012" width="1577" height="2" fill="#a4a4a4" />
<rect x="10.5" y="64.5" width="24" height="28" fill="url(#gPage)" stroke="#8a8a8a" stroke-width="1.2" />
<circle cx="28.5" cy="72" r="8.5" fill="url(#gGlow)"/>
<path d="M28.5,66.5 L30,70.3 L34,70.5 L31,73 L32,77 L28.5,74.8 L25,77 L26,73 L23,70.5 L27,70.3 Z" fill="#fff" />
<path d="M50.5,65.5 L76.5,65.5 L76.5,91.5 L53,91.5 L50.5,89 Z" fill="#6e9ad4" stroke="#2a5aa8" stroke-width="1.2" />
<rect x="54" y="65.5" width="19" height="15" fill="#f8f8f8" />
<rect x="54" y="65.5" width="19" height="3" fill="#f08020" />
<line x1="54" y1="71.5" x2="73" y2="71.5" stroke="#c8ccc8" stroke-width="1" />
<line x1="54" y1="75.5" x2="73" y2="75.5" stroke="#c8ccc8" stroke-width="1" />
<rect x="55.5" y="82.5" width="14" height="9" fill="#e0e0e0" stroke="#555" stroke-width="1" />
<rect x="58" y="84" width="2.5" height="5" fill="#4a80d0" />
<path d="M94,73 L114,73 L118.5,88 L89.5,88 Z" fill="url(#gHdd)" stroke="#8a8a8a" stroke-width="1" />
<rect x="89.5" y="88" width="29" height="5.5" fill="#3a3a3a" rx="1.5" />
<rect x="108" y="89.5" width="8" height="2" fill="#9a9a9a" />
<path d="M100.5,63.5 L108.5,63.5 L108.5,71.5 L112.5,71.5 L104.5,80.5 L96.5,71.5 L100.5,71.5 Z" fill="url(#gArrG)" stroke="#3a8a10" stroke-width="1" />
<circle cx="145" cy="69" r="4.5" fill="#a8a8a8" stroke="#777"/>
<rect x="136.5" y="71.5" width="17" height="6" fill="#fff" stroke="#666" stroke-width="1" />
<path d="M132,76 L158,76 L160.5,80 L160.5,89.5 L129.5,89.5 L129.5,80 Z" fill="#f0f0ec" stroke="#777" stroke-width="1" />
<rect x="135" y="77.5" width="20" height="5" fill="#4a4c4e" rx="1" />
<rect x="130.5" y="87" width="29" height="4" fill="#3a3a3a" rx="1.5" />
<rect x="133.5" y="85.5" width="23" height="8" fill="#f8f8f4" stroke="#666" stroke-width="1" />
<rect x="177.5" y="66.5" width="18" height="11" fill="#f4f4f4" stroke="#666" stroke-width="1" />
<path d="M173,76 L199,76 L201.5,80 L201.5,89.5 L170.5,89.5 L170.5,80 Z" fill="#f0f0ec" stroke="#777" stroke-width="1" />
<rect x="176" y="77.5" width="20" height="5" fill="#4a4c4e" rx="1" />
<rect x="171.5" y="87" width="29" height="4" fill="#3a3a3a" rx="1.5" />
<rect x="174.5" y="85.5" width="23" height="8" fill="#f8f8f4" stroke="#666" stroke-width="1" />
<line x1="180" y1="79" x2="187" y2="86" stroke="#666" stroke-width="2.5" stroke-linecap="round"/>
<circle cx="177.5" cy="75" r="6" fill="#b8cde8" stroke="#888" stroke-width="1.5"/>
<circle cx="177.5" cy="75" r="4.5" fill="none" stroke="#3a6ac0" stroke-width="1"/>
<path d="M227,69 L245,69 L245,63.5 L254,72 L245,80 L245,75 L233,75 L233,79 L227,79 Z" fill="url(#gOr)" />
<path d="M253,80 L253,90 L236,90 L236,94.5 L227,86 L236,77.5 L236,83 L247,83 L247,80 Z" fill="url(#gGr)" />
<line x1="298.5" y1="82.5" x2="306.5" y2="90.5" stroke="#5a5a5a" stroke-width="4.5" stroke-linecap="round"/>
<line x1="298.5" y1="82.5" x2="306.5" y2="90.5" stroke="#9a9a9a" stroke-width="2.5" stroke-linecap="round"/>
<circle cx="291.5" cy="75.5" r="11.2" fill="url(#gMag)" stroke="#4a4a4a" stroke-width="1.2"/>
<circle cx="291.5" cy="75.5" r="9.8" fill="none" stroke="#dcdcdc" stroke-width="1.6"/>
<path d="M289.0,69.0 h5 v4 h4 v5 h-4 v4 h-5 v-4 h-4 v-5 h4 Z" fill="#e8eef6" stroke="#1e4a8c" stroke-width="1" />
<line x1="339.5" y1="82.5" x2="347.5" y2="90.5" stroke="#5a5a5a" stroke-width="4.5" stroke-linecap="round"/>
<line x1="339.5" y1="82.5" x2="347.5" y2="90.5" stroke="#9a9a9a" stroke-width="2.5" stroke-linecap="round"/>
<circle cx="332.5" cy="75.5" r="11.2" fill="url(#gMag)" stroke="#4a4a4a" stroke-width="1.2"/>
<circle cx="332.5" cy="75.5" r="9.8" fill="none" stroke="#dcdcdc" stroke-width="1.6"/>
<rect x="326.0" y="73.0" width="13" height="5" fill="#e8eef6" stroke="#1e4a8c" stroke-width="1" />
<line x1="380.5" y1="82.5" x2="388.5" y2="90.5" stroke="#5a5a5a" stroke-width="4.5" stroke-linecap="round"/>
<line x1="380.5" y1="82.5" x2="388.5" y2="90.5" stroke="#9a9a9a" stroke-width="2.5" stroke-linecap="round"/>
<circle cx="373.5" cy="75.5" r="11.2" fill="url(#gMag)" stroke="#4a4a4a" stroke-width="1.2"/>
<circle cx="373.5" cy="75.5" r="9.8" fill="none" stroke="#dcdcdc" stroke-width="1.6"/>
<path d="M367.5,73.0 L367.5,69.5 L371.0,69.5" fill="none" stroke="#1e4a8c" stroke-width="2.2" />
<path d="M367.5,73.0 L367.5,69.5 L371.0,69.5" fill="none" stroke="#e8eef6" stroke-width="0.9" />
<path d="M379.5,73.0 L379.5,69.5 L376.0,69.5" fill="none" stroke="#1e4a8c" stroke-width="2.2" />
<path d="M379.5,73.0 L379.5,69.5 L376.0,69.5" fill="none" stroke="#e8eef6" stroke-width="0.9" />
<path d="M367.5,78.0 L367.5,81.5 L371.0,81.5" fill="none" stroke="#1e4a8c" stroke-width="2.2" />
<path d="M367.5,78.0 L367.5,81.5 L371.0,81.5" fill="none" stroke="#e8eef6" stroke-width="0.9" />
<path d="M379.5,78.0 L379.5,81.5 L376.0,81.5" fill="none" stroke="#1e4a8c" stroke-width="2.2" />
<path d="M379.5,78.0 L379.5,81.5 L376.0,81.5" fill="none" stroke="#e8eef6" stroke-width="0.9" />
<rect x="409.5" y="72.5" width="15" height="14" fill="url(#gPan)" stroke="#777" stroke-width="1" />
<line x1="411" y1="74.5" x2="423" y2="74.5" stroke="#2a5aa8" stroke-width="1.2" />
<path d="M417,64.5 L420.5,69 L413.5,69 Z" fill="#3a6ac0" />
<path d="M417,94.5 L420.5,90 L413.5,90 Z" fill="#3a6ac0" />
<path d="M402,79.5 L407,76 L407,83 Z" fill="#3a6ac0" />
<path d="M432,79.5 L427,76 L427,83 Z" fill="#3a6ac0" />
<path d="M465.5,67 L465.5,86 L470,82 L473.5,90 L476.5,88.5 L473,81 L479,81 Z" fill="#fff" stroke="#000" stroke-width="1.1" />
<rect x="492.5" y="60.5" width="40" height="37" fill="url(#gTB)" stroke="#3e3e3e" stroke-width="1.2" rx="3.5" />
<rect x="499.5" y="63.5" width="25" height="29" fill="#fff" stroke="#000" stroke-width="1.5" />
<path d="M505,93 L504,80 L507,76 L509,79 L510,70 L512.5,70 L513,78 L514,69 L516.5,69 L517,78 L519,71 L521,72 L520,80 L523,76 L525,78 L521,88 L519,94 Z" fill="#e6d8b0" stroke="#333" stroke-width="0.8" />
<rect x="546.5" y="60.5" width="40" height="37" fill="url(#gTB)" stroke="#3e3e3e" stroke-width="1.2" rx="3.5" />
<rect x="587.5" y="60.5" width="40" height="37" fill="url(#gTB)" stroke="#3e3e3e" stroke-width="1.2" rx="3.5" />
<rect x="628.5" y="60.5" width="40" height="37" fill="url(#gTB)" stroke="#3e3e3e" stroke-width="1.2" rx="3.5" />
<rect x="669.5" y="60.5" width="40" height="37" fill="url(#gTB)" stroke="#3e3e3e" stroke-width="1.2" rx="3.5" />
<line x1="558.5" y1="65" x2="558.5" y2="92" stroke="#7a7aa8" stroke-width="1.4" />
<line x1="552" y1="70.5" x2="579" y2="70.5" stroke="#7a7aa8" stroke-width="1.4" />
<line x1="563.8" y1="65" x2="563.8" y2="92" stroke="#7a7aa8" stroke-width="1.4" />
<line x1="552" y1="75.9" x2="579" y2="75.9" stroke="#7a7aa8" stroke-width="1.4" />
<line x1="569.1" y1="65" x2="569.1" y2="92" stroke="#7a7aa8" stroke-width="1.4" />
<line x1="552" y1="81.3" x2="579" y2="81.3" stroke="#7a7aa8" stroke-width="1.4" />
<line x1="574.4" y1="65" x2="574.4" y2="92" stroke="#7a7aa8" stroke-width="1.4" />
<line x1="552" y1="86.7" x2="579" y2="86.7" stroke="#7a7aa8" stroke-width="1.4" />
<rect x="592" y="75.5" width="28" height="7" fill="#000" />
<rect x="593.5" y="77" width="12" height="4" fill="#e0e0e0" />
<path d="M647.5,65 L637,86 L647.5,74 Z" fill="#fff" stroke="#000" stroke-width="0.9" />
<path d="M647.5,65 L647.5,74 L657.5,86 Z" fill="#000" />
<text x="647.5" y="94" font-size="10" font-family='"Liberation Sans", sans-serif' fill="#222" font-weight="normal" text-anchor="middle" >N</text>
<rect x="674" y="75.5" width="28" height="7.5" fill="#000" />
<rect x="675.5" y="77" width="5" height="4.5" fill="#ff2020" />
<rect x="680.5" y="77" width="5" height="4.5" fill="#ff8020" />
<rect x="685.5" y="77" width="5" height="4.5" fill="#ffff00" />
<rect x="690.5" y="77" width="5" height="4.5" fill="#30c030" />
<rect x="695.5" y="77" width="5" height="4.5" fill="#1020d0" /></svg></body></html>
